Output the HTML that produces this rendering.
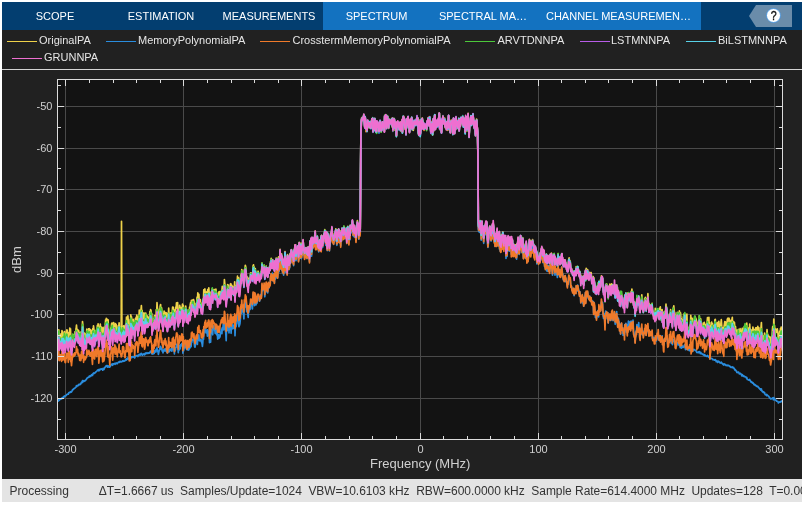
<!DOCTYPE html>
<html><head><meta charset="utf-8">
<style>
html,body{margin:0;padding:0;background:#fff;width:802px;height:505px;overflow:hidden;font-family:"Liberation Sans",sans-serif;}
#app{position:absolute;left:2px;top:2px;width:800px;height:500px;background:#212121;overflow:hidden;}
.abs{position:absolute;}
#tabs{position:absolute;left:0;top:0;width:800px;height:28px;background:#033E70;}
#tabs .lb{position:absolute;left:321px;top:0;width:378px;height:28px;background:#1372C0;}
.tab{position:absolute;top:0;height:28px;line-height:28px;color:#fff;font-size:11px;text-align:center;white-space:pre;}
#legend{position:absolute;left:0;top:28px;width:800px;height:39px;}
.li{position:absolute;height:1.7px;width:30px;margin-top:-0.4px}
.lt{position:absolute;color:#e6e6e6;font-size:11px;line-height:13px;white-space:pre;}
#sep{position:absolute;left:0;top:67px;width:800px;height:2px;background:#d4d4d4;}
.xl{position:absolute;top:442px;width:60px;text-align:center;color:#d0d0d0;font-size:11px;line-height:14px;}
.yl{position:absolute;left:0;width:52.5px;text-align:right;color:#d0d0d0;font-size:11px;line-height:14px;}
#status{position:absolute;left:0;top:477px;width:800px;height:23px;background:#e4e4e4;}
.st{position:absolute;top:5px;font-size:12px;line-height:15px;color:#333;white-space:pre;}
</style></head><body>
<div id="app" style="will-change:transform">
 <div id="tabs"><div class="lb"></div>
  <div class="tab" style="left:0;width:106px">SCOPE</div>
  <div class="tab" style="left:106px;width:106px">ESTIMATION</div>
  <div class="tab" style="left:213px;width:108px">MEASUREMENTS</div>
  <div class="tab" style="left:321px;width:107px">SPECTRUM</div>
  <div class="tab" style="left:428px;width:106px">SPECTRAL MA…</div>
  <div class="tab" style="left:534px;width:165px">CHANNEL MEASUREMEN…</div>
 </div>
</div>
<svg class="abs" style="left:0;top:0" width="802" height="505">
 <rect x="57" y="79" width="726" height="361" fill="#131313"/>
 <path d="M65.5 80V439M183.5 80V439M301.5 80V439M420.5 80V439M538.5 80V439M656.5 80V439M774.5 80V439M58 106.5H782M58 148.5H782M58 189.5H782M58 231.5H782M58 273.5H782M58 314.5H782M58 356.5H782M58 398.5H782" stroke="#4a4a4a" stroke-width="1" fill="none" shape-rendering="crispEdges"/>
 <clipPath id="pc"><rect x="58" y="80" width="724" height="359"/></clipPath>
 <g fill="none" stroke-width="1.7" stroke-linejoin="round" clip-path="url(#pc)">
 <path d="M57.0 342.4 57.3 338.7 57.7 335.9 58.1 342.0 58.4 335.5 58.8 329.9 59.1 338.8 59.5 339.8 59.8 339.3 60.2 336.6 60.5 334.0 60.9 337.1 61.2 338.4 61.6 340.7 62.0 330.6 62.3 331.7 62.7 336.0 63.0 341.9 63.4 333.9 63.7 337.9 64.1 333.7 64.4 331.5 64.8 337.3 65.1 339.6 65.5 338.3 65.9 333.3 66.2 332.5 66.6 330.8 66.9 329.8 67.3 331.1 67.6 335.6 68.0 337.9 68.3 342.3 68.7 335.9 69.0 332.6 69.4 334.9 69.8 328.1 70.1 332.4 70.5 328.8 70.8 340.8 71.2 337.6 71.5 346.0 71.9 338.8 72.2 341.0 72.6 336.1 73.0 337.3 73.3 336.6 73.7 336.6 74.0 334.7 74.4 334.9 74.7 333.4 75.1 331.6 75.4 332.8 75.8 331.0 76.1 329.0 76.5 325.2 76.9 331.3 77.2 331.5 77.6 329.7 77.9 331.0 78.3 335.7 78.6 330.5 79.0 333.5 79.3 334.8 79.7 336.2 80.0 335.9 80.4 332.4 80.8 340.1 81.1 336.5 81.5 331.8 81.8 332.6 82.2 337.8 82.5 321.5 82.9 325.7 83.2 328.1 83.6 342.2 83.9 332.6 84.3 338.2 84.7 333.5 85.0 339.2 85.4 337.3 85.7 334.7 86.1 335.1 86.4 335.5 86.8 329.2 87.1 332.1 87.5 331.0 87.8 331.7 88.2 332.1 88.6 328.9 88.9 330.0 89.3 328.7 89.6 329.7 90.0 335.1 90.3 329.7 90.7 334.4 91.0 331.4 91.4 332.9 91.7 330.3 92.1 337.4 92.5 339.2 92.8 328.5 93.2 331.8 93.5 325.9 93.9 329.0 94.2 332.9 94.6 336.8 94.9 332.0 95.3 333.9 95.7 330.6 96.0 331.1 96.4 333.8 96.7 333.6 97.1 329.5 97.4 325.3 97.8 327.9 98.1 323.8 98.5 329.2 98.8 339.8 99.2 336.3 99.6 328.8 99.9 327.9 100.3 324.0 100.6 329.9 101.0 330.3 101.3 327.2 101.7 330.8 102.0 331.3 102.4 334.6 102.7 339.2 103.1 327.3 103.5 334.6 103.8 338.5 104.2 335.6 104.5 332.0 104.9 327.3 105.2 325.9 105.6 319.8 105.9 327.2 106.3 318.3 106.6 319.4 107.0 319.1 107.4 328.2 107.7 329.8 108.1 319.9 108.4 326.4 108.8 335.7 109.1 332.7 109.5 336.2 109.8 339.0 110.2 334.2 110.5 330.0 110.9 328.4 111.3 326.9 111.6 323.7 112.0 323.0 112.3 323.0 112.7 339.2 113.0 329.4 113.4 328.5 113.7 322.6 114.1 327.9 114.4 330.1 114.8 324.8 115.2 332.8 115.5 323.5 115.9 326.0 116.2 324.7 116.6 332.8 116.9 330.0 117.3 334.3 117.6 327.9 118.0 330.3 118.3 325.7 118.7 326.9 119.1 322.8 119.4 329.4 119.8 328.6 120.1 327.2 120.5 326.9 120.8 330.2 121.2 334.0 121.5 221.3 121.9 330.2 122.3 328.8 122.6 327.5 123.0 332.0 123.3 327.3 123.7 325.8 124.0 333.7 124.4 333.5 124.7 330.4 125.1 328.7 125.4 325.5 125.8 324.3 126.2 325.3 126.5 317.1 126.9 324.1 127.2 325.5 127.6 323.4 127.9 315.9 128.3 321.7 128.6 319.6 129.0 328.8 129.3 333.9 129.7 330.1 130.1 334.8 130.4 325.3 130.8 314.9 131.1 317.3 131.5 316.8 131.8 322.8 132.2 321.6 132.5 321.7 132.9 322.2 133.2 319.3 133.6 322.5 134.0 324.6 134.3 322.2 134.7 331.3 135.0 325.6 135.4 318.7 135.7 321.9 136.1 317.4 136.4 319.5 136.8 315.2 137.1 317.0 137.5 318.6 137.9 327.3 138.2 322.1 138.6 316.5 138.9 318.8 139.3 310.1 139.6 314.0 140.0 311.8 140.3 314.8 140.7 313.8 141.0 309.7 141.4 305.7 141.8 316.8 142.1 310.3 142.5 319.8 142.8 313.7 143.2 313.5 143.5 314.2 143.9 312.9 144.2 319.5 144.6 323.4 145.0 321.3 145.3 315.8 145.7 313.0 146.0 314.9 146.4 317.9 146.7 319.9 147.1 315.9 147.4 322.2 147.8 320.8 148.1 321.8 148.5 317.4 148.9 320.0 149.2 318.5 149.6 315.9 149.9 311.6 150.3 312.2 150.6 309.7 151.0 310.2 151.3 316.0 151.7 313.4 152.0 322.9 152.4 320.4 152.8 319.4 153.1 321.2 153.5 320.9 153.8 319.5 154.2 319.9 154.5 315.5 154.9 315.5 155.2 319.9 155.6 321.3 155.9 321.0 156.3 309.7 156.7 314.5 157.0 302.7 157.4 308.5 157.7 312.9 158.1 314.9 158.4 320.0 158.8 316.5 159.1 317.5 159.5 309.0 159.8 311.2 160.2 306.3 160.6 304.5 160.9 310.0 161.3 310.9 161.6 307.9 162.0 314.8 162.3 315.9 162.7 315.4 163.0 325.6 163.4 315.7 163.7 315.6 164.1 311.1 164.5 316.2 164.8 317.2 165.2 312.7 165.5 319.1 165.9 312.5 166.2 314.0 166.6 318.1 166.9 313.4 167.3 323.0 167.6 319.4 168.0 315.4 168.4 314.4 168.7 308.2 169.1 319.2 169.4 315.5 169.8 319.0 170.1 317.3 170.5 313.0 170.8 315.0 171.2 316.2 171.6 312.7 171.9 317.0 172.3 311.8 172.6 307.2 173.0 308.7 173.3 307.3 173.7 312.5 174.0 313.4 174.4 322.6 174.7 310.2 175.1 312.5 175.5 311.0 175.8 307.0 176.2 308.1 176.5 302.8 176.9 303.7 177.2 305.9 177.6 302.5 177.9 311.9 178.3 318.4 178.6 317.4 179.0 316.7 179.4 312.9 179.7 305.3 180.1 315.1 180.4 307.2 180.8 309.0 181.1 313.1 181.5 309.2 181.8 307.3 182.2 308.8 182.5 304.0 182.9 318.6 183.3 305.3 183.6 314.6 184.0 313.0 184.3 310.9 184.7 310.6 185.0 312.2 185.4 311.1 185.7 306.1 186.1 312.8 186.4 314.6 186.8 314.4 187.2 315.5 187.5 310.4 187.9 310.4 188.2 316.7 188.6 310.7 188.9 315.1 189.3 312.0 189.6 307.1 190.0 308.7 190.3 304.3 190.7 302.3 191.1 309.0 191.4 300.4 191.8 304.4 192.1 302.2 192.5 300.0 192.8 301.5 193.2 300.2 193.5 299.6 193.9 300.8 194.2 303.5 194.6 306.4 195.0 308.8 195.3 307.0 195.7 307.2 196.0 303.6 196.4 303.9 196.7 302.2 197.1 297.0 197.4 305.5 197.8 292.9 198.2 296.8 198.5 298.9 198.9 294.3 199.2 301.7 199.6 299.4 199.9 301.7 200.3 299.6 200.6 301.7 201.0 303.6 201.3 305.1 201.7 304.2 202.1 305.2 202.4 309.2 202.8 305.4 203.1 299.4 203.5 299.3 203.8 289.9 204.2 292.0 204.5 289.6 204.9 288.9 205.2 294.4 205.6 291.8 206.0 298.1 206.3 297.5 206.7 295.0 207.0 291.6 207.4 297.8 207.7 289.7 208.1 292.7 208.4 291.8 208.8 287.8 209.1 292.0 209.5 304.7 209.9 298.1 210.2 293.3 210.6 304.1 210.9 296.2 211.3 291.5 211.6 294.9 212.0 294.4 212.3 288.7 212.7 299.0 213.0 292.4 213.4 291.7 213.8 293.0 214.1 289.7 214.5 290.9 214.8 289.7 215.2 292.5 215.5 293.0 215.9 289.0 216.2 291.7 216.6 294.2 216.9 294.6 217.3 295.3 217.7 299.8 218.0 294.8 218.4 294.7 218.7 292.2 219.1 294.8 219.4 291.6 219.8 295.6 220.1 295.9 220.5 293.0 220.9 294.2 221.2 291.0 221.6 291.0 221.9 290.5 222.3 286.3 222.6 288.6 223.0 288.6 223.3 290.0 223.7 292.5 224.0 288.0 224.4 279.5 224.8 283.9 225.1 287.9 225.5 293.8 225.8 295.6 226.2 300.3 226.5 296.1 226.9 294.2 227.2 294.2 227.6 284.7 227.9 290.2 228.3 285.0 228.7 290.6 229.0 294.1 229.4 288.3 229.7 294.2 230.1 288.1 230.4 283.9 230.8 283.7 231.1 295.1 231.5 284.9 231.8 286.6 232.2 289.2 232.6 286.4 232.9 287.5 233.3 287.3 233.6 289.7 234.0 290.4 234.3 287.8 234.7 281.8 235.0 296.8 235.4 287.5 235.7 287.8 236.1 290.8 236.5 286.1 236.8 284.4 237.2 281.8 237.5 276.2 237.9 281.7 238.2 284.5 238.6 277.8 238.9 290.6 239.3 290.5 239.6 290.3 240.0 288.0 240.4 283.4 240.7 276.2 241.1 274.4 241.4 274.7 241.8 269.5 242.1 273.2 242.5 274.6 242.8 276.1 243.2 277.9 243.5 280.0 243.9 285.0 244.3 269.8 244.6 271.6 245.0 269.1 245.3 265.3 245.7 266.8 246.0 268.8 246.4 276.2 246.7 281.1 247.1 281.1 247.5 277.2 247.8 282.4 248.2 285.1 248.5 278.8 248.9 279.9 249.2 278.2 249.6 278.3 249.9 278.2 250.3 279.4 250.6 272.9 251.0 275.3 251.4 275.7 251.7 273.1 252.1 273.5 252.4 276.9 252.8 273.1 253.1 265.8 253.5 264.9 253.8 268.5 254.2 267.1 254.5 277.7 254.9 269.1 255.3 268.6 255.6 274.1 256.0 279.1 256.3 275.1 256.7 272.8 257.0 278.3 257.4 272.0 257.7 272.6 258.1 271.2 258.4 272.6 258.8 273.9 259.2 276.7 259.5 277.4 259.9 275.1 260.2 277.0 260.6 275.2 260.9 272.0 261.3 275.3 261.6 272.2 262.0 263.2 262.3 267.8 262.7 269.3 263.1 266.1 263.4 268.1 263.8 267.2 264.1 265.0 264.5 269.1 264.8 276.4 265.2 272.9 265.5 272.7 265.9 267.9 266.2 266.0 266.6 270.3 267.0 273.7 267.3 269.4 267.7 276.1 268.0 271.2 268.4 268.2 268.7 269.1 269.1 273.0 269.4 266.8 269.8 265.9 270.2 268.7 270.5 261.6 270.9 262.1 271.2 258.3 271.6 262.3 271.9 264.0 272.3 259.9 272.6 259.7 273.0 267.0 273.3 266.2 273.7 264.7 274.1 261.9 274.4 269.3 274.8 262.3 275.1 266.4 275.5 264.2 275.8 264.7 276.2 258.0 276.5 265.7 276.9 261.2 277.2 259.5 277.6 266.8 278.0 261.3 278.3 257.7 278.7 256.8 279.0 260.4 279.4 258.9 279.7 258.7 280.1 249.3 280.4 258.5 280.8 255.6 281.1 254.4 281.5 253.8 281.9 261.1 282.2 257.6 282.6 263.6 282.9 259.9 283.3 263.1 283.6 266.3 284.0 260.7 284.3 261.5 284.7 258.0 285.0 251.6 285.4 264.8 285.8 259.6 286.1 262.3 286.5 258.4 286.8 260.8 287.2 267.5 287.5 254.6 287.9 255.7 288.2 257.5 288.6 259.4 288.9 264.4 289.3 256.2 289.7 261.7 290.0 253.7 290.4 258.4 290.7 253.9 291.1 250.8 291.4 250.3 291.8 254.1 292.1 252.3 292.5 256.9 292.8 255.1 293.2 256.1 293.6 259.8 293.9 249.7 294.3 255.2 294.6 249.3 295.0 244.9 295.3 245.5 295.7 247.5 296.0 255.8 296.4 253.9 296.8 252.1 297.1 249.1 297.5 250.4 297.8 246.1 298.2 248.7 298.5 255.3 298.9 250.6 299.2 242.6 299.6 247.6 299.9 246.0 300.3 252.1 300.7 248.4 301.0 243.2 301.4 253.5 301.7 251.2 302.1 243.8 302.4 249.2 302.8 247.5 303.1 240.1 303.5 246.3 303.8 247.4 304.2 249.4 304.6 252.2 304.9 252.0 305.3 248.8 305.6 250.4 306.0 248.0 306.3 249.8 306.7 249.0 307.0 253.3 307.4 250.5 307.7 251.4 308.1 246.9 308.5 247.7 308.8 249.3 309.2 252.0 309.5 255.8 309.9 241.1 310.2 248.0 310.6 250.0 310.9 240.4 311.3 241.2 311.6 250.9 312.0 239.5 312.4 238.9 312.7 243.7 313.1 238.2 313.4 241.1 313.8 240.4 314.1 241.9 314.5 238.1 314.8 234.9 315.2 231.2 315.5 241.9 315.9 239.8 316.3 242.0 316.6 239.9 317.0 241.8 317.3 236.4 317.7 244.4 318.0 242.3 318.4 245.9 318.7 247.2 319.1 244.7 319.4 241.0 319.8 240.0 320.2 245.3 320.5 246.2 320.9 236.0 321.2 246.5 321.6 235.3 321.9 236.6 322.3 237.7 322.6 242.6 323.0 239.0 323.4 237.8 323.7 235.9 324.1 234.0 324.4 233.7 324.8 229.7 325.1 233.7 325.5 237.1 325.8 240.1 326.2 231.9 326.5 232.1 326.9 242.9 327.3 245.9 327.6 234.2 328.0 234.6 328.3 235.6 328.7 239.9 329.0 240.2 329.4 245.8 329.7 242.0 330.1 238.9 330.4 235.9 330.8 233.4 331.2 232.5 331.5 232.3 331.9 227.8 332.2 236.1 332.6 235.7 332.9 236.3 333.3 237.2 333.6 240.2 334.0 236.6 334.3 233.1 334.7 235.4 335.1 232.5 335.4 231.6 335.8 228.8 336.1 233.2 336.5 234.9 336.8 240.3 337.2 237.5 337.5 229.8 337.9 235.3 338.2 231.9 338.6 229.4 339.0 231.6 339.3 238.0 339.7 236.2 340.0 233.4 340.4 231.2 340.7 240.6 341.1 231.4 341.4 233.4 341.8 234.3 342.1 228.1 342.5 229.3 342.9 230.0 343.2 230.1 343.6 234.2 343.9 226.4 344.3 232.0 344.6 229.2 345.0 232.9 345.3 230.7 345.7 232.5 346.1 233.5 346.4 228.0 346.8 238.1 347.1 231.3 347.5 227.6 347.8 226.4 348.2 231.1 348.5 230.5 348.9 237.3 349.2 231.6 349.6 233.2 350.0 234.6 350.3 225.3 350.7 227.5 351.0 227.4 351.4 225.8 351.7 226.1 352.1 225.4 352.4 221.0 352.8 224.7 353.1 231.1 353.5 227.2 353.9 225.7 354.2 231.2 354.6 227.3 354.9 228.2 355.3 230.8 355.6 230.5 356.0 236.4 356.3 233.7 356.7 224.8 357.0 224.9 357.4 220.7 357.8 224.6 358.1 226.5 358.5 227.2 358.8 234.2 359.2 224.1 359.5 230.0 359.9 230.0 360.2 228.8 360.6 176.2 360.9 136.3 361.3 121.3 361.7 117.6 362.0 118.8 362.4 119.1 362.7 118.4 363.1 117.9 363.4 118.5 363.8 115.7 364.1 118.9 364.5 123.8 364.8 127.7 365.2 117.8 365.6 121.6 365.9 128.5 366.3 124.1 366.6 124.1 367.0 131.2 367.3 126.7 367.7 120.8 368.0 122.6 368.4 125.7 368.7 127.6 369.1 124.0 369.5 123.0 369.8 127.3 370.2 125.8 370.5 127.3 370.9 128.2 371.2 122.7 371.6 120.7 371.9 120.9 372.3 123.4 372.7 118.8 373.0 131.5 373.4 122.4 373.7 127.6 374.1 121.2 374.4 129.7 374.8 118.5 375.1 124.6 375.5 122.5 375.8 130.7 376.2 123.3 376.6 130.4 376.9 122.1 377.3 127.1 377.6 122.8 378.0 126.4 378.3 126.6 378.7 126.0 379.0 130.7 379.4 124.3 379.7 123.0 380.1 122.2 380.5 122.2 380.8 129.1 381.2 131.8 381.5 129.2 381.9 128.9 382.2 126.4 382.6 122.8 382.9 122.1 383.3 127.6 383.6 126.3 384.0 122.4 384.4 131.4 384.7 116.6 385.1 124.6 385.4 124.3 385.8 115.3 386.1 122.3 386.5 128.0 386.8 122.3 387.2 120.3 387.5 117.1 387.9 122.3 388.3 121.0 388.6 128.3 389.0 120.0 389.3 120.5 389.7 119.5 390.0 122.4 390.4 124.1 390.7 123.4 391.1 121.0 391.4 121.2 391.8 118.5 392.2 125.6 392.5 118.0 392.9 130.3 393.2 123.4 393.6 122.1 393.9 119.3 394.3 119.0 394.6 121.3 395.0 130.2 395.4 122.9 395.7 123.5 396.1 122.5 396.4 136.0 396.8 123.1 397.1 122.3 397.5 124.9 397.8 122.2 398.2 128.3 398.5 124.2 398.9 126.8 399.3 130.0 399.6 122.7 400.0 124.2 400.3 121.9 400.7 130.1 401.0 128.9 401.4 126.4 401.7 126.7 402.1 121.1 402.4 132.3 402.8 120.5 403.2 117.8 403.5 123.5 403.9 119.1 404.2 121.8 404.6 124.4 404.9 128.0 405.3 127.6 405.6 126.3 406.0 134.7 406.3 120.1 406.7 126.6 407.1 123.8 407.4 120.8 407.8 118.9 408.1 116.9 408.5 127.9 408.8 123.2 409.2 123.3 409.5 131.6 409.9 121.3 410.2 119.4 410.6 128.6 411.0 121.6 411.3 126.1 411.7 117.4 412.0 121.2 412.4 129.8 412.7 123.0 413.1 125.4 413.4 130.3 413.8 122.3 414.1 122.9 414.5 121.4 414.9 124.6 415.2 123.5 415.6 125.2 415.9 121.4 416.3 120.9 416.6 120.1 417.0 116.4 417.3 125.3 417.7 119.0 418.0 123.8 418.4 133.2 418.8 133.9 419.1 131.9 419.5 120.8 419.8 120.1 420.2 134.4 420.5 131.4 420.9 121.4 421.2 120.3 421.6 128.0 422.0 126.5 422.3 119.5 422.7 128.1 423.0 120.9 423.4 127.7 423.7 123.8 424.1 128.6 424.4 124.1 424.8 127.7 425.1 126.7 425.5 127.2 425.9 124.5 426.2 124.6 426.6 128.9 426.9 123.8 427.3 122.7 427.6 122.9 428.0 118.8 428.3 123.3 428.7 118.3 429.0 125.5 429.4 123.8 429.8 117.2 430.1 122.3 430.5 126.3 430.8 130.5 431.2 126.9 431.5 124.7 431.9 121.9 432.2 128.0 432.6 135.0 432.9 130.3 433.3 119.4 433.7 130.2 434.0 122.1 434.4 119.5 434.7 115.0 435.1 115.5 435.4 128.3 435.8 123.4 436.1 127.0 436.5 121.9 436.8 121.8 437.2 125.6 437.6 122.2 437.9 126.7 438.3 119.8 438.6 124.3 439.0 116.0 439.3 113.0 439.7 129.6 440.0 121.3 440.4 120.2 440.7 119.2 441.1 122.8 441.5 131.3 441.8 125.9 442.2 121.1 442.5 121.2 442.9 116.2 443.2 122.8 443.6 123.0 443.9 121.1 444.3 124.2 444.6 118.1 445.0 127.6 445.4 122.2 445.7 123.0 446.1 123.2 446.4 128.5 446.8 122.1 447.1 122.9 447.5 124.9 447.8 130.3 448.2 123.8 448.6 116.8 448.9 128.0 449.3 125.1 449.6 129.6 450.0 121.8 450.3 132.6 450.7 122.6 451.0 122.9 451.4 120.3 451.7 123.7 452.1 125.9 452.5 121.7 452.8 134.4 453.2 126.9 453.5 119.2 453.9 122.4 454.2 119.3 454.6 132.6 454.9 128.1 455.3 125.0 455.6 128.3 456.0 116.8 456.4 125.1 456.7 124.2 457.1 121.1 457.4 122.6 457.8 124.8 458.1 128.6 458.5 124.6 458.8 118.9 459.2 131.1 459.5 124.8 459.9 120.2 460.3 125.7 460.6 121.4 461.0 118.7 461.3 118.7 461.7 122.0 462.0 119.2 462.4 124.8 462.7 118.6 463.1 119.7 463.4 126.5 463.8 120.4 464.2 121.0 464.5 118.7 464.9 121.3 465.2 132.3 465.6 117.3 465.9 128.2 466.3 123.1 466.6 124.9 467.0 129.8 467.3 117.2 467.7 123.3 468.1 113.3 468.4 121.7 468.8 122.6 469.1 135.4 469.5 126.3 469.8 124.0 470.2 122.4 470.5 120.9 470.9 116.4 471.3 124.2 471.6 122.9 472.0 117.2 472.3 124.5 472.7 120.3 473.0 113.9 473.4 120.6 473.7 124.4 474.1 127.7 474.4 125.4 474.8 122.0 475.2 124.8 475.5 134.0 475.9 121.8 476.2 133.7 476.6 119.0 476.9 123.6 477.3 128.1 477.6 131.1 478.0 161.4 478.3 223.4 478.7 226.3 479.1 224.2 479.4 227.8 479.8 223.3 480.1 220.7 480.5 224.5 480.8 223.6 481.2 235.0 481.5 229.5 481.9 221.4 482.2 228.5 482.6 228.0 483.0 229.0 483.3 230.4 483.7 237.6 484.0 228.1 484.4 225.5 484.7 225.5 485.1 228.8 485.4 225.3 485.8 221.8 486.1 223.1 486.5 221.5 486.9 223.5 487.2 228.8 487.6 237.3 487.9 241.8 488.3 238.4 488.6 232.3 489.0 231.5 489.3 228.9 489.7 226.0 490.0 226.3 490.4 229.3 490.8 233.3 491.1 234.5 491.5 232.8 491.8 231.1 492.2 227.6 492.5 224.4 492.9 232.6 493.2 223.3 493.6 227.4 493.9 233.1 494.3 236.8 494.7 233.5 495.0 241.2 495.4 236.2 495.7 233.9 496.1 237.5 496.4 237.5 496.8 234.2 497.1 230.0 497.5 236.7 497.9 238.9 498.2 239.3 498.6 236.4 498.9 235.6 499.3 231.5 499.6 243.9 500.0 235.2 500.3 244.8 500.7 244.0 501.0 243.5 501.4 234.9 501.8 237.0 502.1 238.9 502.5 235.2 502.8 231.9 503.2 239.4 503.5 241.5 503.9 241.6 504.2 237.1 504.6 236.6 504.9 242.4 505.3 240.1 505.7 237.3 506.0 251.7 506.4 240.9 506.7 241.9 507.1 250.5 507.4 241.3 507.8 236.9 508.1 237.4 508.5 236.9 508.8 243.0 509.2 245.5 509.6 238.1 509.9 243.8 510.3 243.7 510.6 241.9 511.0 237.7 511.3 247.7 511.7 239.6 512.0 242.3 512.4 240.2 512.7 248.0 513.1 249.4 513.5 244.0 513.8 247.6 514.2 248.6 514.5 245.5 514.9 246.3 515.2 250.1 515.6 244.9 515.9 249.5 516.3 249.7 516.6 251.8 517.0 243.9 517.4 246.8 517.7 242.8 518.1 237.9 518.4 243.4 518.8 241.1 519.1 247.7 519.5 246.7 519.8 243.8 520.2 240.7 520.6 236.4 520.9 241.1 521.3 238.4 521.6 238.8 522.0 245.1 522.3 241.9 522.7 237.7 523.0 243.9 523.4 251.4 523.7 250.9 524.1 250.5 524.5 248.6 524.8 246.8 525.2 244.0 525.5 246.0 525.9 250.8 526.2 243.0 526.6 247.1 526.9 255.3 527.3 252.6 527.6 255.3 528.0 254.2 528.4 250.2 528.7 249.9 529.1 247.5 529.4 239.3 529.8 242.2 530.1 247.4 530.5 247.6 530.8 249.2 531.2 240.7 531.5 241.1 531.9 243.2 532.3 244.2 532.6 239.7 533.0 245.0 533.3 243.6 533.7 244.5 534.0 250.8 534.4 246.1 534.7 250.9 535.1 247.5 535.4 247.5 535.8 249.1 536.2 250.1 536.5 252.6 536.9 257.8 537.2 252.4 537.6 256.9 537.9 256.8 538.3 255.9 538.6 257.6 539.0 255.7 539.3 257.2 539.7 256.4 540.1 256.6 540.4 252.3 540.8 253.5 541.1 251.9 541.5 251.0 541.8 247.3 542.2 249.7 542.5 248.4 542.9 254.8 543.2 250.7 543.6 250.5 544.0 251.3 544.3 253.2 544.7 258.3 545.0 256.3 545.4 260.9 545.7 257.6 546.1 259.4 546.4 254.1 546.8 262.0 547.2 263.2 547.5 259.1 547.9 257.7 548.2 257.0 548.6 261.3 548.9 255.9 549.3 258.3 549.6 261.8 550.0 258.2 550.3 254.0 550.7 257.3 551.1 258.0 551.4 253.1 551.8 255.9 552.1 260.3 552.5 264.0 552.8 256.5 553.2 255.7 553.5 256.9 553.9 254.5 554.2 253.7 554.6 259.2 555.0 264.0 555.3 257.5 555.7 261.0 556.0 259.0 556.4 260.7 556.7 260.1 557.1 262.4 557.4 264.3 557.8 259.9 558.1 253.7 558.5 259.7 558.9 261.8 559.2 259.8 559.6 257.3 559.9 263.2 560.3 257.6 560.6 262.9 561.0 261.1 561.3 258.9 561.7 254.1 562.0 254.7 562.4 259.3 562.8 259.8 563.1 263.7 563.5 265.1 563.8 262.3 564.2 266.1 564.5 260.5 564.9 262.3 565.2 259.9 565.6 265.0 565.9 262.7 566.3 267.0 566.7 266.0 567.0 269.3 567.4 270.5 567.7 267.4 568.1 267.9 568.4 264.1 568.8 258.8 569.1 257.9 569.5 260.7 569.8 261.9 570.2 261.1 570.6 267.5 570.9 269.5 571.3 268.4 571.6 269.0 572.0 271.8 572.3 271.2 572.7 273.2 573.0 271.1 573.4 272.4 573.8 272.0 574.1 277.6 574.5 271.1 574.8 274.5 575.2 273.4 575.5 273.0 575.9 274.1 576.2 266.6 576.6 271.2 576.9 268.0 577.3 271.1 577.7 266.5 578.0 267.0 578.4 270.1 578.7 271.1 579.1 271.6 579.4 275.3 579.8 271.4 580.1 275.0 580.5 274.3 580.8 282.2 581.2 276.4 581.6 279.0 581.9 279.6 582.3 276.5 582.6 277.3 583.0 283.7 583.3 276.0 583.7 283.9 584.0 281.9 584.4 281.3 584.7 274.7 585.1 273.4 585.5 270.4 585.8 278.1 586.2 268.3 586.5 270.8 586.9 272.5 587.2 271.8 587.6 269.5 587.9 273.6 588.3 276.0 588.6 273.7 589.0 276.1 589.4 276.8 589.7 272.3 590.1 275.5 590.4 273.4 590.8 273.6 591.1 272.6 591.5 276.0 591.8 279.6 592.2 279.1 592.5 277.5 592.9 281.0 593.3 276.7 593.6 289.7 594.0 277.8 594.3 280.8 594.7 282.8 595.0 286.3 595.4 290.5 595.7 286.4 596.1 287.8 596.5 292.2 596.8 287.9 597.2 288.7 597.5 286.1 597.9 284.7 598.2 286.8 598.6 291.2 598.9 281.8 599.3 284.7 599.6 287.5 600.0 283.7 600.4 279.9 600.7 284.6 601.1 279.0 601.4 275.9 601.8 276.9 602.1 281.1 602.5 278.6 602.8 284.1 603.2 288.7 603.5 291.7 603.9 289.5 604.3 287.9 604.6 291.4 605.0 298.4 605.3 290.0 605.7 286.6 606.0 285.8 606.4 284.7 606.7 284.0 607.1 285.2 607.4 290.0 607.8 286.4 608.2 297.4 608.5 294.0 608.9 291.3 609.2 286.9 609.6 286.8 609.9 284.0 610.3 288.3 610.6 288.8 611.0 290.1 611.3 289.2 611.7 283.8 612.1 287.3 612.4 284.5 612.8 287.2 613.1 291.8 613.5 287.6 613.8 288.4 614.2 289.7 614.5 285.3 614.9 287.8 615.2 294.9 615.6 286.4 616.0 284.8 616.3 292.0 616.7 285.9 617.0 293.9 617.4 287.5 617.7 297.2 618.1 291.2 618.4 290.9 618.8 292.5 619.1 292.7 619.5 300.9 619.9 298.6 620.2 295.3 620.6 304.9 620.9 294.8 621.3 295.9 621.6 294.1 622.0 301.2 622.3 299.8 622.7 297.8 623.1 303.7 623.4 303.4 623.8 307.6 624.1 303.9 624.5 307.5 624.8 295.1 625.2 302.6 625.5 298.4 625.9 293.1 626.2 299.9 626.6 295.1 627.0 300.3 627.3 304.1 627.7 293.2 628.0 295.0 628.4 293.4 628.7 294.2 629.1 294.9 629.4 297.2 629.8 297.2 630.1 298.0 630.5 302.1 630.9 302.5 631.2 291.3 631.6 293.1 631.9 289.0 632.3 295.3 632.6 297.6 633.0 292.5 633.3 302.0 633.7 306.0 634.0 305.7 634.4 307.5 634.8 307.5 635.1 314.0 635.5 310.9 635.8 303.6 636.2 302.1 636.5 306.4 636.9 297.7 637.2 298.4 637.6 298.6 637.9 300.0 638.3 302.7 638.7 296.1 639.0 301.0 639.4 299.1 639.7 305.9 640.1 310.8 640.4 302.2 640.8 300.8 641.1 302.1 641.5 299.3 641.8 294.9 642.2 304.4 642.6 302.3 642.9 302.4 643.3 308.8 643.6 308.8 644.0 304.3 644.3 302.0 644.7 298.3 645.0 302.6 645.4 297.3 645.8 299.6 646.1 306.1 646.5 304.8 646.8 302.9 647.2 298.8 647.5 299.8 647.9 293.7 648.2 300.2 648.6 303.3 648.9 310.7 649.3 303.9 649.7 308.7 650.0 307.7 650.4 305.2 650.7 312.1 651.1 307.0 651.4 308.9 651.8 310.8 652.1 303.4 652.5 310.9 652.8 312.6 653.2 311.4 653.6 315.9 653.9 313.2 654.3 317.1 654.6 316.3 655.0 317.5 655.3 308.3 655.7 311.4 656.0 313.4 656.4 314.9 656.7 311.9 657.1 311.4 657.5 312.1 657.8 311.1 658.2 308.9 658.5 309.7 658.9 315.1 659.2 314.1 659.6 311.8 659.9 308.1 660.3 306.9 660.6 315.2 661.0 312.6 661.4 312.0 661.7 310.9 662.1 309.6 662.4 316.8 662.8 312.1 663.1 316.0 663.5 322.0 663.8 321.4 664.2 312.7 664.5 311.6 664.9 314.3 665.3 314.0 665.6 310.9 666.0 304.2 666.3 312.8 666.7 307.2 667.0 311.6 667.4 316.0 667.7 321.8 668.1 317.3 668.4 321.1 668.8 320.2 669.2 318.3 669.5 314.1 669.9 319.1 670.2 315.6 670.6 309.7 670.9 317.9 671.3 320.9 671.6 316.1 672.0 314.8 672.4 321.6 672.7 311.7 673.1 309.5 673.4 307.8 673.8 305.8 674.1 310.6 674.5 312.0 674.8 312.9 675.2 319.6 675.5 319.2 675.9 324.0 676.3 316.6 676.6 321.0 677.0 317.7 677.3 312.4 677.7 315.8 678.0 314.5 678.4 316.2 678.7 321.5 679.1 313.6 679.4 310.8 679.8 312.8 680.2 321.4 680.5 312.8 680.9 317.4 681.2 318.7 681.6 325.0 681.9 319.7 682.3 321.7 682.6 319.9 683.0 321.0 683.3 317.5 683.7 315.4 684.1 313.9 684.4 314.5 684.8 313.9 685.1 315.6 685.5 326.5 685.8 318.3 686.2 320.4 686.5 317.8 686.9 314.0 687.2 324.7 687.6 329.4 688.0 328.2 688.3 328.6 688.7 329.2 689.0 327.8 689.4 329.2 689.7 327.7 690.1 324.9 690.4 325.8 690.8 315.4 691.1 328.5 691.5 317.8 691.9 320.7 692.2 318.3 692.6 329.5 692.9 323.2 693.3 322.6 693.6 320.5 694.0 322.3 694.3 322.2 694.7 318.2 695.0 316.3 695.4 320.0 695.8 318.1 696.1 319.2 696.5 320.7 696.8 326.5 697.2 322.5 697.5 325.6 697.9 330.4 698.2 327.3 698.6 321.4 699.0 325.8 699.3 315.8 699.7 321.4 700.0 320.1 700.4 327.9 700.7 318.8 701.1 324.9 701.4 326.6 701.8 327.3 702.1 325.8 702.5 328.2 702.9 328.3 703.2 323.2 703.6 323.4 703.9 326.6 704.3 322.4 704.6 329.3 705.0 324.0 705.3 326.1 705.7 325.8 706.0 328.1 706.4 327.3 706.8 323.8 707.1 322.4 707.5 317.6 707.8 320.8 708.2 320.4 708.5 323.7 708.9 317.3 709.2 326.8 709.6 322.7 709.9 338.1 710.3 333.3 710.7 330.5 711.0 325.4 711.4 328.4 711.7 322.0 712.1 325.1 712.4 323.6 712.8 326.3 713.1 329.6 713.5 327.5 713.8 327.2 714.2 325.7 714.6 325.3 714.9 319.8 715.3 319.4 715.6 326.5 716.0 323.4 716.3 333.8 716.7 326.6 717.0 326.2 717.4 322.6 717.7 334.6 718.1 326.8 718.5 322.6 718.8 321.4 719.2 324.3 719.5 330.3 719.9 328.2 720.2 331.1 720.6 327.6 720.9 323.3 721.3 319.7 721.7 325.6 722.0 329.9 722.4 334.1 722.7 333.0 723.1 336.5 723.4 327.6 723.8 334.5 724.1 326.4 724.5 323.8 724.8 321.7 725.2 322.2 725.6 321.9 725.9 327.2 726.3 325.9 726.6 325.9 727.0 325.8 727.3 319.2 727.7 318.8 728.0 318.1 728.4 321.0 728.7 319.9 729.1 318.4 729.5 325.6 729.8 322.2 730.2 320.3 730.5 324.7 730.9 325.7 731.2 324.9 731.6 325.0 731.9 319.7 732.3 317.4 732.6 323.9 733.0 324.4 733.4 321.6 733.7 322.5 734.1 327.5 734.4 322.4 734.8 327.4 735.1 331.4 735.5 326.5 735.8 330.8 736.2 335.0 736.5 330.2 736.9 340.0 737.3 334.1 737.6 333.2 738.0 329.9 738.3 329.5 738.7 330.7 739.0 334.3 739.4 334.7 739.7 334.8 740.1 328.7 740.4 330.2 740.8 330.1 741.2 332.7 741.5 338.7 741.9 339.4 742.2 328.3 742.6 331.3 742.9 328.3 743.3 330.2 743.6 328.9 744.0 332.5 744.3 326.7 744.7 329.9 745.1 325.1 745.4 327.4 745.8 325.1 746.1 326.2 746.5 331.0 746.8 323.2 747.2 334.3 747.5 330.6 747.9 329.2 748.3 328.1 748.6 332.9 749.0 332.6 749.3 331.5 749.7 324.2 750.0 330.1 750.4 329.3 750.7 331.4 751.1 336.1 751.4 330.2 751.8 331.5 752.2 336.4 752.5 335.2 752.9 327.0 753.2 329.2 753.6 331.0 753.9 340.0 754.3 330.0 754.6 329.7 755.0 332.1 755.3 333.9 755.7 327.8 756.1 331.2 756.4 327.8 756.8 333.7 757.1 332.0 757.5 329.1 757.8 326.4 758.2 330.1 758.5 329.0 758.9 327.8 759.2 333.7 759.6 334.4 760.0 332.7 760.3 331.3 760.7 336.0 761.0 327.9 761.4 322.6 761.7 333.1 762.1 333.7 762.4 341.5 762.8 340.5 763.1 338.7 763.5 341.5 763.9 335.5 764.2 337.5 764.6 333.1 764.9 337.0 765.3 345.3 765.6 337.0 766.0 342.3 766.3 337.2 766.7 335.2 767.0 329.7 767.4 334.2 767.8 334.5 768.1 335.9 768.5 336.5 768.8 336.6 769.2 336.4 769.5 342.3 769.9 338.2 770.2 337.1 770.6 342.8 771.0 343.8 771.3 340.5 771.7 340.5 772.0 337.0 772.4 330.1 772.7 326.6 773.1 329.0 773.4 338.1 773.8 319.0 774.1 326.8 774.5 325.6 774.9 330.1 775.2 335.3 775.6 329.1 775.9 332.7 776.3 329.6 776.6 332.2 777.0 331.2 777.3 328.8 777.7 331.7 778.0 333.6 778.4 342.8 778.8 338.0 779.1 337.2 779.5 335.3 779.8 331.0 780.2 334.1 780.5 328.5 780.9 328.6 781.2 327.0 781.6 328.3 781.9 331.5 782.3 339.1 782.7 341.8 783.0 330.9" stroke="#EFD24A"/>
<path d="M57.0 402.0 57.3 401.7 57.7 400.8 58.1 401.0 58.4 400.2 58.8 399.5 59.1 400.4 59.5 400.3 59.8 399.4 60.2 399.2 60.5 399.2 60.9 398.7 61.2 398.8 61.6 398.9 62.0 398.0 62.3 397.6 62.7 398.2 63.0 398.0 63.4 397.0 63.7 397.3 64.1 396.3 64.4 395.9 64.8 396.6 65.1 396.4 65.5 396.1 65.9 395.7 66.2 395.4 66.6 394.7 66.9 394.5 67.3 394.5 67.6 394.0 68.0 394.1 68.3 394.2 68.7 392.9 69.0 392.6 69.4 392.7 69.8 392.4 70.1 392.2 70.5 391.6 70.8 392.3 71.2 392.0 71.5 392.0 71.9 391.1 72.2 390.7 72.6 389.5 73.0 389.7 73.3 389.2 73.7 388.7 74.0 388.7 74.4 388.6 74.7 388.2 75.1 387.9 75.4 387.5 75.8 387.2 76.1 386.6 76.5 385.7 76.9 386.5 77.2 385.8 77.6 385.5 77.9 385.5 78.3 385.6 78.6 384.5 79.0 384.4 79.3 384.6 79.7 384.8 80.0 384.7 80.4 383.7 80.8 384.0 81.1 383.3 81.5 382.2 81.8 382.2 82.2 382.7 82.5 380.6 82.9 380.7 83.2 380.7 83.6 381.7 83.9 380.9 84.3 381.1 84.7 380.6 85.0 380.7 85.4 380.7 85.7 380.0 86.1 379.7 86.4 379.4 86.8 378.4 87.1 378.2 87.5 377.7 87.8 377.7 88.2 377.7 88.6 377.0 88.9 377.1 89.3 376.0 89.6 376.1 90.0 376.5 90.3 375.7 90.7 376.3 91.0 375.8 91.4 375.4 91.7 374.7 92.1 375.4 92.5 375.5 92.8 373.9 93.2 373.9 93.5 373.1 93.9 372.9 94.2 373.3 94.6 373.4 94.9 372.9 95.3 372.6 95.7 371.8 96.0 371.9 96.4 371.6 96.7 371.2 97.1 370.7 97.4 370.2 97.8 370.1 98.1 369.6 98.5 369.6 98.8 370.9 99.2 370.5 99.6 369.6 99.9 369.3 100.3 369.1 100.6 369.5 101.0 369.1 101.3 369.0 101.7 368.9 102.0 369.0 102.4 369.3 102.7 370.1 103.1 368.4 103.5 369.2 103.8 369.6 104.2 369.0 104.5 368.0 104.9 367.4 105.2 367.2 105.6 366.4 105.9 366.6 106.3 365.8 106.6 365.6 107.0 365.5 107.4 366.8 107.7 367.2 108.1 365.7 108.4 366.1 108.8 366.8 109.1 366.6 109.5 367.1 109.8 367.1 110.2 366.5 110.5 365.9 110.9 365.2 111.3 364.6 111.6 364.2 112.0 364.3 112.3 364.0 112.7 365.3 113.0 364.4 113.4 363.8 113.7 363.8 114.1 364.0 114.4 363.8 114.8 363.4 115.2 364.3 115.5 363.4 115.9 363.3 116.2 362.9 116.6 363.6 116.9 363.4 117.3 363.6 117.6 362.9 118.0 362.6 118.3 362.3 118.7 362.2 119.1 361.6 119.4 362.4 119.8 361.7 120.1 361.3 120.5 361.6 120.8 361.9 121.2 362.0 121.5 361.8 121.9 361.4 122.3 361.1 122.6 360.9 123.0 361.3 123.3 360.7 123.7 361.2 124.0 361.2 124.4 360.9 124.7 361.0 125.1 360.6 125.4 360.0 125.8 359.7 126.2 360.1 126.5 358.5 126.9 359.0 127.2 359.4 127.6 358.7 127.9 357.9 128.3 358.5 128.6 358.3 129.0 359.1 129.3 359.7 129.7 359.1 130.1 359.7 130.4 358.5 130.8 357.2 131.1 357.2 131.5 356.9 131.8 357.5 132.2 356.7 132.5 356.9 132.9 356.8 133.2 356.5 133.6 356.9 134.0 357.2 134.3 356.8 134.7 358.0 135.0 357.0 135.4 356.2 135.7 356.4 136.1 355.8 136.4 355.7 136.8 355.5 137.1 355.6 137.5 355.5 137.9 356.5 138.2 355.7 138.6 355.0 138.9 355.3 139.3 354.3 139.6 354.6 140.0 354.6 140.3 355.0 140.7 354.7 141.0 353.6 141.4 353.4 141.8 354.7 142.1 354.2 142.5 355.1 142.8 354.3 143.2 354.4 143.5 354.0 143.9 353.9 144.2 354.0 144.6 354.8 145.0 354.6 145.3 353.3 145.7 353.0 146.0 353.0 146.4 353.0 146.7 353.5 147.1 352.7 147.4 353.4 147.8 353.2 148.1 353.4 148.5 353.0 148.9 352.8 149.2 353.2 149.6 352.8 149.9 352.0 150.3 352.0 150.6 351.1 151.0 351.1 151.3 352.8 151.7 352.4 152.0 354.0 152.4 353.4 152.8 354.1 153.1 353.8 153.5 353.5 153.8 353.1 154.2 353.3 154.5 351.6 154.9 350.4 155.2 351.5 155.6 351.6 155.9 352.0 156.3 349.1 156.7 350.2 157.0 347.9 157.4 350.1 157.7 351.1 158.1 352.1 158.4 354.4 158.8 352.3 159.1 351.0 159.5 349.7 159.8 348.5 160.2 346.8 160.6 346.4 160.9 347.5 161.3 349.6 161.6 348.3 162.0 349.2 162.3 351.4 162.7 350.5 163.0 352.8 163.4 350.9 163.7 350.3 164.1 349.3 164.5 350.9 164.8 350.8 165.2 348.9 165.5 350.8 165.9 349.1 166.2 349.9 166.6 351.8 166.9 350.2 167.3 353.1 167.6 352.6 168.0 350.6 168.4 350.3 168.7 347.9 169.1 351.8 169.4 349.8 169.8 350.1 170.1 350.4 170.5 349.2 170.8 349.5 171.2 350.8 171.6 348.3 171.9 351.2 172.3 348.5 172.6 347.2 173.0 347.2 173.3 346.5 173.7 349.8 174.0 349.7 174.4 353.9 174.7 349.7 175.1 350.9 175.5 349.8 175.8 347.5 176.2 347.5 176.5 344.3 176.9 344.2 177.2 344.9 177.6 345.7 177.9 348.0 178.3 352.6 178.6 348.4 179.0 350.3 179.4 349.2 179.7 345.4 180.1 349.0 180.4 345.2 180.8 344.6 181.1 345.9 181.5 344.8 181.8 343.6 182.2 345.3 182.5 345.0 182.9 353.3 183.3 344.3 183.6 350.9 184.0 348.5 184.3 347.9 184.7 347.9 185.0 347.4 185.4 344.8 185.7 344.1 186.1 346.7 186.4 348.9 186.8 349.5 187.2 349.7 187.5 344.8 187.9 344.1 188.2 350.2 188.6 346.8 188.9 349.7 189.3 347.9 189.6 346.7 190.0 348.0 190.3 345.3 190.7 343.9 191.1 346.7 191.4 341.9 191.8 342.5 192.1 340.0 192.5 339.6 192.8 339.2 193.2 340.2 193.5 339.0 193.9 340.5 194.2 342.5 194.6 346.3 195.0 347.2 195.3 345.5 195.7 343.1 196.0 342.4 196.4 339.5 196.7 341.5 197.1 336.9 197.4 344.5 197.8 335.3 198.2 339.4 198.5 337.6 198.9 334.8 199.2 340.6 199.6 339.9 199.9 340.8 200.3 339.4 200.6 340.4 201.0 339.3 201.3 341.8 201.7 342.1 202.1 344.0 202.4 346.5 202.8 342.6 203.1 336.2 203.5 339.4 203.8 333.7 204.2 332.4 204.5 330.8 204.9 325.8 205.2 331.6 205.6 330.0 206.0 332.9 206.3 332.3 206.7 330.9 207.0 329.9 207.4 336.1 207.7 329.9 208.1 335.1 208.4 332.0 208.8 331.3 209.1 332.1 209.5 342.6 209.9 338.7 210.2 336.5 210.6 342.2 210.9 332.7 211.3 329.6 211.6 332.1 212.0 332.8 212.3 326.0 212.7 334.8 213.0 327.2 213.4 327.3 213.8 325.9 214.1 328.9 214.5 330.0 214.8 329.9 215.2 333.3 215.5 331.7 215.9 326.2 216.2 329.2 216.6 334.8 216.9 330.8 217.3 333.2 217.7 339.2 218.0 336.0 218.4 334.5 218.7 334.9 219.1 338.1 219.4 336.1 219.8 337.4 220.1 336.3 220.5 332.1 220.9 333.1 221.2 329.3 221.6 330.9 221.9 333.6 222.3 327.7 222.6 328.8 223.0 327.3 223.3 323.2 223.7 329.9 224.0 328.0 224.4 319.1 224.8 324.0 225.1 326.3 225.5 330.5 225.8 333.2 226.2 340.7 226.5 329.5 226.9 329.9 227.2 330.7 227.6 323.3 227.9 328.5 228.3 323.8 228.7 325.9 229.0 332.9 229.4 324.6 229.7 329.6 230.1 325.2 230.4 324.6 230.8 323.6 231.1 333.3 231.5 323.8 231.8 324.7 232.2 328.8 232.6 325.1 232.9 325.2 233.3 326.2 233.6 328.5 234.0 328.5 234.3 325.3 234.7 321.1 235.0 335.8 235.4 326.4 235.7 324.5 236.1 326.6 236.5 324.1 236.8 323.8 237.2 319.7 237.5 314.2 237.9 318.1 238.2 320.9 238.6 315.4 238.9 326.7 239.3 325.2 239.6 325.1 240.0 323.2 240.4 318.5 240.7 314.1 241.1 312.5 241.4 313.2 241.8 306.4 242.1 309.8 242.5 309.4 242.8 311.4 243.2 311.3 243.5 314.2 243.9 318.9 244.3 304.0 244.6 307.4 245.0 304.1 245.3 300.4 245.7 301.4 246.0 301.6 246.4 308.0 246.7 311.7 247.1 311.8 247.5 309.2 247.8 314.4 248.2 317.4 248.5 310.7 248.9 312.1 249.2 309.6 249.6 308.7 249.9 309.5 250.3 308.8 250.6 303.1 251.0 305.4 251.4 304.0 251.7 302.2 252.1 302.6 252.4 308.9 252.8 300.9 253.1 294.4 253.5 292.9 253.8 296.1 254.2 295.0 254.5 305.7 254.9 296.3 255.3 295.7 255.6 300.0 256.0 305.0 256.3 300.7 256.7 298.7 257.0 303.3 257.4 297.3 257.7 297.2 258.1 295.3 258.4 296.1 258.8 297.1 259.2 300.0 259.5 301.2 259.9 299.7 260.2 299.1 260.6 298.2 260.9 294.3 261.3 297.6 261.6 293.9 262.0 284.7 262.3 289.0 262.7 290.6 263.1 287.9 263.4 289.7 263.8 288.5 264.1 285.5 264.5 290.3 264.8 296.8 265.2 292.2 265.5 292.3 265.9 286.1 266.2 284.4 266.6 288.1 267.0 291.7 267.3 285.6 267.7 292.9 268.0 288.3 268.4 283.8 268.7 285.1 269.1 287.8 269.4 283.3 269.8 282.4 270.2 284.5 270.5 277.8 270.9 278.2 271.2 274.1 271.6 277.2 271.9 279.3 272.3 274.3 272.6 273.0 273.0 280.4 273.3 279.3 273.7 277.1 274.1 273.9 274.4 282.6 274.8 274.8 275.1 279.4 275.5 276.2 275.8 277.1 276.2 269.9 276.5 277.8 276.9 273.1 277.2 269.9 277.6 277.7 278.0 272.5 278.3 269.6 278.7 269.3 279.0 271.9 279.4 269.5 279.7 269.3 280.1 259.7 280.4 268.8 280.8 265.6 281.1 264.8 281.5 263.9 281.9 270.4 282.2 266.5 282.6 272.9 282.9 268.8 283.3 272.5 283.6 275.1 284.0 268.6 284.3 269.2 284.7 266.0 285.0 259.7 285.4 272.2 285.8 266.8 286.1 270.0 286.5 265.5 286.8 267.5 287.2 274.4 287.5 261.3 287.9 262.2 288.2 263.3 288.6 263.8 288.9 269.7 289.3 262.0 289.7 268.0 290.0 259.6 290.4 263.6 290.7 260.5 291.1 256.3 291.4 254.6 291.8 259.1 292.1 256.7 292.5 262.1 292.8 260.2 293.2 261.1 293.6 265.6 293.9 255.4 294.3 261.2 294.6 255.5 295.0 251.4 295.3 250.7 295.7 252.5 296.0 260.7 296.4 258.5 296.8 257.1 297.1 254.5 297.5 255.5 297.8 250.7 298.2 253.9 298.5 260.9 298.9 255.9 299.2 248.7 299.6 253.6 299.9 251.6 300.3 258.2 300.7 254.5 301.0 249.5 301.4 258.7 301.7 257.0 302.1 249.8 302.4 255.1 302.8 253.4 303.1 245.8 303.5 251.9 303.8 253.1 304.2 255.4 304.6 258.0 304.9 257.2 305.3 254.1 305.6 255.5 306.0 252.8 306.3 254.7 306.7 254.0 307.0 258.7 307.4 255.4 307.7 255.7 308.1 251.9 308.5 252.9 308.8 255.0 309.2 257.7 309.5 261.5 309.9 245.9 310.2 252.5 310.6 254.6 310.9 245.8 311.3 246.2 311.6 256.2 312.0 244.7 312.4 244.6 312.7 248.6 313.1 242.7 313.4 245.4 313.8 244.6 314.1 246.3 314.5 242.7 314.8 239.6 315.2 235.4 315.5 246.3 315.9 243.9 316.3 246.6 316.6 244.3 317.0 245.3 317.3 240.3 317.7 248.1 318.0 246.5 318.4 250.5 318.7 251.9 319.1 250.1 319.4 246.0 319.8 244.2 320.2 249.1 320.5 250.5 320.9 240.8 321.2 251.0 321.6 239.9 321.9 241.5 322.3 242.5 322.6 247.4 323.0 244.4 323.4 242.6 323.7 240.8 324.1 238.0 324.4 238.9 324.8 235.1 325.1 239.3 325.5 242.9 325.8 245.5 326.2 236.8 326.5 236.4 326.9 247.3 327.3 250.6 327.6 237.3 328.0 239.0 328.3 240.5 328.7 245.1 329.0 245.0 329.4 251.0 329.7 247.3 330.1 243.8 330.4 241.0 330.8 238.1 331.2 237.9 331.5 237.1 331.9 232.3 332.2 240.4 332.6 240.2 332.9 241.2 333.3 242.1 333.6 244.4 334.0 242.2 334.3 238.8 334.7 241.1 335.1 237.9 335.4 235.9 335.8 233.8 336.1 237.1 336.5 239.2 336.8 245.3 337.2 243.0 337.5 235.1 337.9 239.8 338.2 236.9 338.6 233.6 339.0 236.4 339.3 242.7 339.7 241.2 340.0 239.6 340.4 237.1 340.7 246.0 341.1 237.5 341.4 239.1 341.8 239.7 342.1 233.4 342.5 234.4 342.9 236.3 343.2 235.9 343.6 239.3 343.9 232.1 344.3 237.2 344.6 234.1 345.0 238.1 345.3 235.7 345.7 238.4 346.1 239.1 346.4 233.7 346.8 243.5 347.1 236.6 347.5 233.2 347.8 231.9 348.2 237.2 348.5 236.0 348.9 243.4 349.2 237.2 349.6 238.2 350.0 239.7 350.3 230.0 350.7 232.7 351.0 233.0 351.4 231.5 351.7 231.7 352.1 230.8 352.4 225.0 352.8 230.7 353.1 235.8 353.5 232.3 353.9 231.2 354.2 236.9 354.6 233.5 354.9 234.2 355.3 235.8 355.6 235.7 356.0 241.0 356.3 237.9 356.7 229.2 357.0 230.3 357.4 225.8 357.8 229.9 358.1 231.1 358.5 232.5 358.8 239.2 359.2 229.6 359.5 235.2 359.9 234.4 360.2 233.5 360.6 176.0 360.9 137.3 361.3 123.5 361.7 119.3 362.0 119.9 362.4 120.8 362.7 118.0 363.1 117.1 363.4 118.5 363.8 117.0 364.1 118.9 364.5 123.3 364.8 127.8 365.2 116.6 365.6 121.6 365.9 130.1 366.3 124.7 366.6 125.7 367.0 130.9 367.3 127.4 367.7 120.5 368.0 124.4 368.4 126.2 368.7 126.4 369.1 125.2 369.5 124.1 369.8 127.2 370.2 124.8 370.5 127.3 370.9 128.9 371.2 122.8 371.6 122.1 371.9 119.3 372.3 122.5 372.7 118.7 373.0 131.3 373.4 125.0 373.7 129.0 374.1 122.0 374.4 130.6 374.8 119.4 375.1 124.3 375.5 123.3 375.8 132.4 376.2 123.1 376.6 132.7 376.9 122.2 377.3 125.5 377.6 123.1 378.0 126.3 378.3 127.2 378.7 127.6 379.0 133.2 379.4 124.1 379.7 122.6 380.1 121.2 380.5 122.6 380.8 127.1 381.2 131.2 381.5 130.1 381.9 129.9 382.2 127.4 382.6 123.2 382.9 123.7 383.3 128.1 383.6 125.5 384.0 122.2 384.4 131.9 384.7 116.6 385.1 125.9 385.4 125.3 385.8 116.4 386.1 124.3 386.5 128.9 386.8 124.7 387.2 121.5 387.5 116.6 387.9 123.1 388.3 121.6 388.6 128.4 389.0 122.0 389.3 121.9 389.7 120.1 390.0 123.1 390.4 123.0 390.7 124.4 391.1 121.6 391.4 122.3 391.8 119.5 392.2 126.0 392.5 119.7 392.9 131.4 393.2 122.9 393.6 123.0 393.9 119.1 394.3 120.1 394.6 122.1 395.0 129.1 395.4 124.6 395.7 124.0 396.1 121.9 396.4 135.8 396.8 124.0 397.1 123.8 397.5 123.6 397.8 122.4 398.2 128.9 398.5 125.2 398.9 127.2 399.3 130.3 399.6 122.4 400.0 123.1 400.3 122.4 400.7 131.1 401.0 129.2 401.4 127.3 401.7 127.9 402.1 119.6 402.4 132.8 402.8 121.2 403.2 117.4 403.5 124.7 403.9 119.1 404.2 122.8 404.6 124.6 404.9 129.0 405.3 127.9 405.6 125.3 406.0 134.8 406.3 119.0 406.7 125.6 407.1 125.5 407.4 121.0 407.8 118.0 408.1 117.1 408.5 128.4 408.8 123.9 409.2 123.0 409.5 132.5 409.9 120.9 410.2 120.3 410.6 128.6 411.0 121.7 411.3 125.4 411.7 119.0 412.0 122.4 412.4 129.7 412.7 124.4 413.1 125.7 413.4 128.1 413.8 123.5 414.1 121.5 414.5 120.9 414.9 124.6 415.2 122.9 415.6 125.6 415.9 122.2 416.3 120.3 416.6 120.8 417.0 117.4 417.3 125.9 417.7 117.6 418.0 124.3 418.4 132.3 418.8 135.4 419.1 131.5 419.5 121.7 419.8 121.2 420.2 135.7 420.5 132.0 420.9 122.8 421.2 121.3 421.6 129.0 422.0 127.6 422.3 119.2 422.7 126.5 423.0 122.8 423.4 127.6 423.7 123.1 424.1 129.3 424.4 125.1 424.8 128.5 425.1 126.6 425.5 126.0 425.9 124.9 426.2 125.2 426.6 129.9 426.9 124.6 427.3 122.4 427.6 121.6 428.0 119.4 428.3 122.2 428.7 118.1 429.0 124.6 429.4 122.9 429.8 119.2 430.1 122.5 430.5 126.8 430.8 132.9 431.2 126.9 431.5 124.2 431.9 123.4 432.2 127.2 432.6 134.1 432.9 129.5 433.3 118.8 433.7 130.5 434.0 123.0 434.4 118.9 434.7 114.8 435.1 115.6 435.4 128.0 435.8 123.1 436.1 126.7 436.5 121.8 436.8 121.0 437.2 127.1 437.6 122.9 437.9 126.0 438.3 120.4 438.6 125.4 439.0 115.4 439.3 115.2 439.7 129.4 440.0 122.4 440.4 120.8 440.7 121.3 441.1 122.4 441.5 132.9 441.8 126.2 442.2 121.6 442.5 121.4 442.9 115.7 443.2 121.8 443.6 123.0 443.9 120.2 444.3 123.7 444.6 119.0 445.0 127.0 445.4 123.7 445.7 123.5 446.1 123.5 446.4 128.2 446.8 122.6 447.1 124.7 447.5 123.9 447.8 129.4 448.2 121.6 448.6 115.6 448.9 127.7 449.3 125.3 449.6 129.6 450.0 122.4 450.3 133.0 450.7 125.0 451.0 123.0 451.4 122.4 451.7 125.2 452.1 126.4 452.5 122.9 452.8 134.6 453.2 126.7 453.5 119.3 453.9 122.1 454.2 120.9 454.6 133.7 454.9 129.6 455.3 125.1 455.6 129.1 456.0 117.2 456.4 125.4 456.7 126.2 457.1 122.6 457.4 122.7 457.8 125.4 458.1 128.4 458.5 124.9 458.8 119.0 459.2 130.6 459.5 124.7 459.9 121.0 460.3 125.7 460.6 119.7 461.0 118.7 461.3 119.1 461.7 122.2 462.0 117.7 462.4 122.4 462.7 115.7 463.1 120.1 463.4 125.9 463.8 119.6 464.2 121.5 464.5 118.9 464.9 121.8 465.2 133.6 465.6 117.8 465.9 128.0 466.3 124.6 466.6 124.3 467.0 130.4 467.3 117.0 467.7 124.9 468.1 114.1 468.4 119.9 468.8 122.3 469.1 136.0 469.5 126.5 469.8 124.5 470.2 122.4 470.5 122.4 470.9 117.0 471.3 124.3 471.6 124.6 472.0 116.8 472.3 124.7 472.7 120.1 473.0 114.9 473.4 119.2 473.7 124.3 474.1 128.2 474.4 125.4 474.8 122.4 475.2 126.3 475.5 135.7 475.9 123.5 476.2 133.6 476.6 120.4 476.9 125.0 477.3 129.0 477.6 133.2 478.0 162.8 478.3 229.0 478.7 231.4 479.1 229.7 479.4 232.4 479.8 228.8 480.1 226.1 480.5 230.3 480.8 228.7 481.2 240.1 481.5 234.8 481.9 226.4 482.2 233.9 482.6 233.2 483.0 234.5 483.3 236.2 483.7 243.3 484.0 234.8 484.4 231.1 484.7 231.3 485.1 234.8 485.4 231.5 485.8 228.8 486.1 229.4 486.5 227.3 486.9 229.5 487.2 235.1 487.6 243.3 487.9 247.3 488.3 244.3 488.6 238.2 489.0 237.2 489.3 234.5 489.7 231.8 490.0 231.6 490.4 235.1 490.8 239.7 491.1 241.0 491.5 239.4 491.8 237.3 492.2 233.4 492.5 230.7 492.9 238.6 493.2 229.7 493.6 233.0 493.9 239.2 494.3 242.0 494.7 238.9 495.0 246.4 495.4 242.8 495.7 240.6 496.1 244.6 496.4 243.9 496.8 239.4 497.1 235.8 497.5 243.2 497.9 245.8 498.2 245.0 498.6 242.9 498.9 241.9 499.3 237.9 499.6 249.7 500.0 241.8 500.3 251.3 500.7 250.7 501.0 250.7 501.4 242.1 501.8 244.0 502.1 245.5 502.5 241.6 502.8 238.2 503.2 245.5 503.5 247.8 503.9 248.3 504.2 243.8 504.6 242.9 504.9 249.0 505.3 246.4 505.7 244.4 506.0 258.4 506.4 247.5 506.7 248.2 507.1 256.4 507.4 247.7 507.8 243.3 508.1 244.2 508.5 243.5 508.8 249.7 509.2 251.1 509.6 243.7 509.9 248.9 510.3 248.1 510.6 248.1 511.0 243.8 511.3 254.3 511.7 245.4 512.0 248.1 512.4 246.1 512.7 254.1 513.1 254.9 513.5 250.1 513.8 253.6 514.2 253.8 514.5 251.7 514.9 253.3 515.2 256.3 515.6 252.0 515.9 257.0 516.3 256.2 516.6 259.2 517.0 250.8 517.4 253.3 517.7 249.1 518.1 245.1 518.4 250.3 518.8 248.0 519.1 254.4 519.5 253.1 519.8 249.7 520.2 246.8 520.6 242.1 520.9 247.7 521.3 244.6 521.6 246.9 522.0 252.8 522.3 249.3 522.7 245.5 523.0 250.9 523.4 258.3 523.7 258.1 524.1 257.9 524.5 255.5 524.8 253.8 525.2 251.6 525.5 253.6 525.9 257.6 526.2 248.8 526.6 254.0 526.9 262.1 527.3 259.2 527.6 261.7 528.0 261.0 528.4 257.0 528.7 256.2 529.1 255.1 529.4 247.8 529.8 250.2 530.1 254.9 530.5 254.3 530.8 255.5 531.2 247.8 531.5 247.7 531.9 250.1 532.3 250.7 532.6 246.6 533.0 250.4 533.3 249.7 533.7 250.6 534.0 256.1 534.4 251.9 534.7 257.0 535.1 252.7 535.4 252.0 535.8 254.8 536.2 255.0 536.5 257.1 536.9 264.0 537.2 258.2 537.6 263.2 537.9 263.1 538.3 261.9 538.6 263.5 539.0 261.5 539.3 262.6 539.7 262.3 540.1 261.8 540.4 258.7 540.8 259.9 541.1 258.2 541.5 257.6 541.8 254.6 542.2 257.6 542.5 255.9 542.9 262.7 543.2 258.7 543.6 259.1 544.0 259.8 544.3 262.2 544.7 267.0 545.0 265.4 545.4 268.7 545.7 265.1 546.1 267.7 546.4 262.1 546.8 270.6 547.2 271.3 547.5 267.3 547.9 266.8 548.2 265.6 548.6 270.5 548.9 265.5 549.3 267.6 549.6 271.8 550.0 268.0 550.3 263.8 550.7 267.4 551.1 268.3 551.4 263.5 551.8 267.6 552.1 271.2 552.5 275.2 552.8 267.7 553.2 267.0 553.5 267.8 553.9 266.2 554.2 264.9 554.6 269.9 555.0 275.1 555.3 268.9 555.7 273.4 556.0 270.7 556.4 272.8 556.7 272.9 557.1 275.6 557.4 277.5 557.8 273.0 558.1 267.2 558.5 272.6 558.9 274.6 559.2 272.4 559.6 269.7 559.9 276.4 560.3 270.2 560.6 276.3 561.0 274.8 561.3 272.2 561.7 267.0 562.0 268.6 562.4 272.9 562.8 274.2 563.1 278.6 563.5 280.0 563.8 277.6 564.2 281.0 564.5 276.2 564.9 277.8 565.2 275.8 565.6 281.3 565.9 278.7 566.3 282.3 566.7 282.0 567.0 284.8 567.4 286.5 567.7 283.6 568.1 284.1 568.4 281.1 568.8 275.7 569.1 275.5 569.5 277.8 569.8 279.7 570.2 278.5 570.6 284.5 570.9 286.7 571.3 286.3 571.6 286.7 572.0 289.1 572.3 289.3 572.7 292.0 573.0 288.5 573.4 289.8 573.8 290.5 574.1 295.6 574.5 289.0 574.8 292.1 575.2 292.5 575.5 291.8 575.9 293.3 576.2 286.2 576.6 290.5 576.9 287.7 577.3 290.9 577.7 285.1 578.0 286.6 578.4 289.0 578.7 290.8 579.1 291.5 579.4 294.7 579.8 291.5 580.1 293.9 580.5 295.0 580.8 302.8 581.2 298.4 581.6 300.5 581.9 299.6 582.3 297.4 582.6 298.3 583.0 303.6 583.3 298.2 583.7 306.2 584.0 303.1 584.4 302.1 584.7 296.8 585.1 295.5 585.5 292.6 585.8 302.1 586.2 292.1 586.5 293.9 586.9 295.6 587.2 294.0 587.6 292.0 587.9 295.5 588.3 298.4 588.6 297.5 589.0 298.5 589.4 299.2 589.7 296.2 590.1 297.4 590.4 298.0 590.8 297.9 591.1 298.2 591.5 301.3 591.8 303.1 592.2 302.2 592.5 301.0 592.9 304.6 593.3 301.7 593.6 312.9 594.0 302.4 594.3 306.1 594.7 308.6 595.0 310.3 595.4 317.4 595.7 313.6 596.1 315.3 596.5 318.7 596.8 316.0 597.2 315.1 597.5 312.4 597.9 310.6 598.2 313.0 598.6 317.0 598.9 306.7 599.3 311.0 599.6 311.6 600.0 308.3 600.4 305.5 600.7 310.3 601.1 304.7 601.4 302.1 601.8 302.7 602.1 302.4 602.5 302.4 602.8 310.0 603.2 316.2 603.5 318.5 603.9 317.8 604.3 314.2 604.6 317.7 605.0 325.1 605.3 313.6 605.7 311.0 606.0 311.6 606.4 312.4 606.7 312.5 607.1 312.9 607.4 319.1 607.8 312.7 608.2 323.0 608.5 318.5 608.9 320.1 609.2 314.4 609.6 316.1 609.9 315.1 610.3 319.2 610.6 320.5 611.0 319.7 611.3 319.8 611.7 314.2 612.1 313.7 612.4 313.5 612.8 317.4 613.1 320.7 613.5 318.7 613.8 317.9 614.2 318.4 614.5 312.7 614.9 317.1 615.2 324.3 615.6 315.0 616.0 314.8 616.3 318.0 616.7 311.5 617.0 320.5 617.4 317.7 617.7 326.8 618.1 321.5 618.4 318.4 618.8 324.3 619.1 321.7 619.5 328.6 619.9 329.1 620.2 326.3 620.6 334.2 620.9 324.3 621.3 323.4 621.6 324.1 622.0 329.9 622.3 328.9 622.7 327.7 623.1 335.5 623.4 332.4 623.8 334.5 624.1 333.1 624.5 334.8 624.8 324.6 625.2 331.9 625.5 325.2 625.9 323.4 626.2 328.2 626.6 325.4 627.0 329.8 627.3 332.7 627.7 324.4 628.0 328.3 628.4 321.2 628.7 324.9 629.1 326.5 629.4 324.8 629.8 323.4 630.1 321.7 630.5 326.8 630.9 326.7 631.2 321.1 631.6 322.6 631.9 321.9 632.3 326.7 632.6 326.9 633.0 320.0 633.3 326.5 633.7 331.7 634.0 333.0 634.4 336.4 634.8 337.1 635.1 342.1 635.5 336.7 635.8 335.1 636.2 330.5 636.5 332.3 636.9 324.7 637.2 328.5 637.6 326.7 637.9 326.0 638.3 329.9 638.7 322.6 639.0 327.8 639.4 328.6 639.7 336.7 640.1 338.6 640.4 331.7 640.8 331.1 641.1 329.3 641.5 327.6 641.8 328.2 642.2 334.7 642.6 334.1 642.9 332.2 643.3 335.7 643.6 335.0 644.0 332.2 644.3 330.9 644.7 330.5 645.0 332.6 645.4 328.8 645.8 330.4 646.1 335.2 646.5 331.3 646.8 331.0 647.2 329.6 647.5 328.0 647.9 326.4 648.2 329.6 648.6 332.5 648.9 334.0 649.3 330.7 649.7 334.9 650.0 334.1 650.4 331.8 650.7 333.5 651.1 332.4 651.4 335.0 651.8 335.1 652.1 331.6 652.5 338.5 652.8 337.0 653.2 338.3 653.6 339.5 653.9 337.5 654.3 339.4 654.6 339.1 655.0 340.3 655.3 337.9 655.7 338.6 656.0 339.3 656.4 340.9 656.7 337.1 657.1 336.0 657.5 337.1 657.8 337.3 658.2 336.0 658.5 339.3 658.9 339.9 659.2 340.4 659.6 339.2 659.9 337.4 660.3 336.9 660.6 339.9 661.0 338.9 661.4 337.4 661.7 338.1 662.1 335.9 662.4 342.1 662.8 340.2 663.1 342.1 663.5 345.4 663.8 344.9 664.2 339.8 664.5 339.2 664.9 341.2 665.3 340.2 665.6 339.3 666.0 335.0 666.3 337.2 666.7 335.3 667.0 338.7 667.4 339.9 667.7 344.1 668.1 341.8 668.4 342.1 668.8 341.2 669.2 341.5 669.5 338.6 669.9 340.8 670.2 339.7 670.6 337.8 670.9 341.7 671.3 343.2 671.6 342.7 672.0 342.2 672.4 344.7 672.7 341.2 673.1 339.2 673.4 340.1 673.8 339.9 674.1 340.7 674.5 342.0 674.8 341.8 675.2 344.4 675.5 343.2 675.9 347.2 676.3 344.8 676.6 346.0 677.0 343.2 677.3 342.7 677.7 343.2 678.0 342.7 678.4 343.6 678.7 345.0 679.1 343.5 679.4 343.2 679.8 345.1 680.2 347.6 680.5 345.1 680.9 345.7 681.2 346.2 681.6 348.1 681.9 345.8 682.3 346.0 682.6 346.9 683.0 347.1 683.3 347.4 683.7 346.2 684.1 345.7 684.4 345.0 684.8 344.9 685.1 346.2 685.5 349.7 685.8 347.4 686.2 347.9 686.5 348.5 686.9 347.1 687.2 349.3 687.6 349.6 688.0 349.4 688.3 349.3 688.7 350.0 689.0 349.5 689.4 350.6 689.7 349.9 690.1 349.7 690.4 349.7 690.8 348.6 691.1 351.2 691.5 349.7 691.9 349.6 692.2 349.7 692.6 351.4 692.9 350.2 693.3 350.3 693.6 349.4 694.0 349.6 694.3 349.9 694.7 349.7 695.0 350.0 695.4 350.6 695.8 350.5 696.1 350.8 696.5 351.4 696.8 352.4 697.2 352.3 697.5 352.3 697.9 352.5 698.2 352.7 698.6 351.9 699.0 352.5 699.3 351.5 699.7 352.3 700.0 352.7 700.4 353.6 700.7 352.4 701.1 353.2 701.4 353.6 701.8 353.6 702.1 353.7 702.5 354.5 702.9 354.4 703.2 354.4 703.6 354.3 703.9 355.1 704.3 354.7 704.6 355.7 705.0 354.9 705.3 355.5 705.7 355.9 706.0 356.0 706.4 356.3 706.8 356.0 707.1 356.0 707.5 355.4 707.8 356.1 708.2 356.7 708.5 357.0 708.9 356.3 709.2 357.5 709.6 356.9 709.9 359.0 710.3 358.6 710.7 358.5 711.0 358.4 711.4 358.4 711.7 358.4 712.1 358.7 712.4 359.1 712.8 359.7 713.1 359.7 713.5 359.7 713.8 359.7 714.2 360.0 714.6 360.2 714.9 359.6 715.3 359.6 715.6 360.5 716.0 360.3 716.3 361.7 716.7 360.9 717.0 361.6 717.4 361.2 717.7 362.5 718.1 361.6 718.5 361.2 718.8 361.4 719.2 361.9 719.5 362.4 719.9 362.6 720.2 363.1 720.6 362.9 720.9 362.6 721.3 362.2 721.7 362.7 722.0 363.2 722.4 363.9 722.7 363.8 723.1 364.5 723.4 364.0 723.8 365.0 724.1 364.5 724.5 364.0 724.8 364.6 725.2 364.6 725.6 364.5 725.9 365.4 726.3 365.1 726.6 365.5 727.0 365.7 727.3 365.5 727.7 365.2 728.0 365.6 728.4 365.5 728.7 365.4 729.1 365.7 729.5 366.3 729.8 366.3 730.2 366.4 730.5 367.1 730.9 367.4 731.2 367.5 731.6 367.5 731.9 367.0 732.3 366.8 732.6 367.5 733.0 367.8 733.4 367.3 733.7 367.8 734.1 368.7 734.4 368.6 734.8 369.8 735.1 370.3 735.5 369.8 735.8 370.5 736.2 371.1 736.5 371.1 736.9 372.5 737.3 372.2 737.6 372.6 738.0 372.2 738.3 372.1 738.7 372.3 739.0 373.1 739.4 374.0 739.7 374.0 740.1 373.3 740.4 373.8 740.8 373.7 741.2 374.2 741.5 375.0 741.9 375.8 742.2 374.6 742.6 375.9 742.9 375.7 743.3 376.0 743.6 375.6 744.0 376.5 744.3 376.1 744.7 376.6 745.1 376.5 745.4 376.9 745.8 377.1 746.1 377.1 746.5 378.1 746.8 377.5 747.2 379.4 747.5 379.5 747.9 379.6 748.3 379.7 748.6 380.1 749.0 380.1 749.3 380.3 749.7 379.5 750.0 380.4 750.4 380.5 750.7 381.2 751.1 382.0 751.4 381.7 751.8 381.9 752.2 382.8 752.5 383.0 752.9 382.6 753.2 383.3 753.6 383.7 753.9 384.6 754.3 384.1 754.6 384.4 755.0 385.2 755.3 385.6 755.7 385.2 756.1 385.8 756.4 385.9 756.8 386.5 757.1 386.5 757.5 386.2 757.8 386.3 758.2 387.2 758.5 387.4 758.9 387.7 759.2 388.3 759.6 388.7 760.0 389.2 760.3 388.9 760.7 390.0 761.0 389.2 761.4 389.0 761.7 390.8 762.1 390.9 762.4 391.7 762.8 391.9 763.1 391.7 763.5 392.5 763.9 392.1 764.2 392.4 764.6 392.6 764.9 393.8 765.3 394.7 765.6 394.5 766.0 395.0 766.3 394.5 766.7 395.6 767.0 394.6 767.4 395.3 767.8 395.5 768.1 395.8 768.5 396.3 768.8 396.4 769.2 397.1 769.5 397.9 769.9 398.1 770.2 398.0 770.6 398.9 771.0 399.0 771.3 398.6 771.7 398.6 772.0 398.5 772.4 398.2 772.7 397.9 773.1 398.6 773.4 399.8 773.8 397.5 774.1 398.5 774.5 398.7 774.9 399.3 775.2 400.2 775.6 400.0 775.9 400.3 776.3 400.3 776.6 401.1 777.0 401.1 777.3 401.3 777.7 401.3 778.0 401.8 778.4 403.0 778.8 402.4 779.1 402.2 779.5 402.1 779.8 401.8 780.2 402.2 780.5 401.5 780.9 401.6 781.2 401.2 781.6 401.3 781.9 401.0 782.3 402.0 782.7 402.2 783.0 401.0" stroke="#2A8DDE"/>
<path d="M57.0 362.1 57.3 359.9 57.7 356.5 58.1 357.0 58.4 353.3 58.8 350.1 59.1 360.6 59.5 360.2 59.8 356.4 60.2 359.7 60.5 354.5 60.9 355.5 61.2 357.4 61.6 361.3 62.0 351.7 62.3 352.8 62.7 359.3 63.0 360.0 63.4 353.9 63.7 359.0 64.1 352.3 64.4 352.4 64.8 360.4 65.1 362.5 65.5 362.6 65.9 358.9 66.2 358.5 66.6 356.3 66.9 353.0 67.3 354.5 67.6 356.5 68.0 357.3 68.3 362.3 68.7 352.2 69.0 351.6 69.4 355.3 69.8 351.4 70.1 359.6 70.5 350.3 70.8 361.8 71.2 361.4 71.5 365.6 71.9 361.1 72.2 359.3 72.6 354.0 73.0 356.8 73.3 354.1 73.7 355.9 74.0 356.2 74.4 354.6 74.7 352.9 75.1 354.8 75.4 354.9 75.8 353.4 76.1 351.4 76.5 346.7 76.9 352.1 77.2 350.5 77.6 349.4 77.9 353.6 78.3 355.3 78.6 353.3 79.0 355.9 79.3 356.5 79.7 360.3 80.0 358.8 80.4 355.1 80.8 360.7 81.1 359.1 81.5 351.9 81.8 354.5 82.2 358.0 82.5 344.6 82.9 346.5 83.2 350.0 83.6 362.3 83.9 355.8 84.3 359.5 84.7 359.9 85.0 359.8 85.4 359.4 85.7 356.7 86.1 356.5 86.4 357.7 86.8 349.8 87.1 354.5 87.5 351.1 87.8 355.0 88.2 354.1 88.6 351.4 88.9 350.4 89.3 352.0 89.6 354.0 90.0 355.7 90.3 353.5 90.7 356.1 91.0 352.6 91.4 355.9 91.7 351.3 92.1 360.1 92.5 364.3 92.8 352.8 93.2 355.2 93.5 349.3 93.9 351.8 94.2 358.1 94.6 358.9 94.9 353.9 95.3 353.5 95.7 349.3 96.0 352.1 96.4 355.5 96.7 356.6 97.1 351.1 97.4 348.2 97.8 349.7 98.1 346.4 98.5 349.4 98.8 363.2 99.2 358.6 99.6 354.7 99.9 352.2 100.3 350.6 100.6 355.8 101.0 355.2 101.3 350.2 101.7 353.4 102.0 357.0 102.4 357.3 102.7 361.9 103.1 349.5 103.5 358.4 103.8 361.1 104.2 359.8 104.5 356.5 104.9 353.8 105.2 349.7 105.6 343.6 105.9 346.4 106.3 340.1 106.6 342.7 107.0 342.8 107.4 352.3 107.7 356.8 108.1 346.6 108.4 350.5 108.8 357.5 109.1 356.1 109.5 359.9 109.8 365.2 110.2 358.4 110.5 354.3 110.9 353.0 111.3 350.2 111.6 346.8 112.0 347.8 112.3 348.4 112.7 360.1 113.0 353.6 113.4 350.0 113.7 347.8 114.1 352.4 114.4 351.2 114.8 344.8 115.2 354.1 115.5 346.1 115.9 348.2 116.2 348.0 116.6 354.1 116.9 351.8 117.3 356.8 117.6 351.8 118.0 351.9 118.3 348.5 118.7 348.8 119.1 344.2 119.4 352.7 119.8 351.0 120.1 350.7 120.5 352.9 120.8 354.0 121.2 356.9 121.5 356.7 121.9 355.2 122.3 352.4 122.6 346.8 123.0 351.7 123.3 346.6 123.7 347.4 124.0 352.5 124.4 354.5 124.7 356.8 125.1 357.6 125.4 352.0 125.8 350.6 126.2 351.7 126.5 343.6 126.9 347.3 127.2 351.7 127.6 348.3 127.9 343.5 128.3 348.1 128.6 347.4 129.0 355.3 129.3 360.9 129.7 355.6 130.1 360.6 130.4 349.4 130.8 340.4 131.1 343.8 131.5 342.3 131.8 351.7 132.2 344.5 132.5 348.0 132.9 345.5 133.2 345.7 133.6 348.3 134.0 348.8 134.3 346.8 134.7 355.5 135.0 349.9 135.4 343.4 135.7 345.6 136.1 342.2 136.4 342.1 136.8 341.7 137.1 342.1 137.5 344.7 137.9 352.5 138.2 349.1 138.6 345.1 138.9 345.2 139.3 337.6 139.6 341.2 140.0 337.1 140.3 343.3 140.7 343.2 141.0 334.3 141.4 331.9 141.8 346.1 142.1 336.1 142.5 347.0 142.8 339.7 143.2 340.6 143.5 338.9 143.9 339.2 144.2 344.2 144.6 349.2 145.0 347.2 145.3 339.2 145.7 337.5 146.0 341.3 146.4 339.4 146.7 342.1 147.1 341.0 147.4 342.7 147.8 345.7 148.1 345.6 148.5 340.0 148.9 342.5 149.2 342.7 149.6 340.8 149.9 337.8 150.3 339.1 150.6 336.9 151.0 340.6 151.3 342.9 151.7 343.4 152.0 352.9 152.4 345.3 152.8 347.3 153.1 352.1 153.5 347.2 153.8 344.7 154.2 348.3 154.5 341.4 154.9 339.7 155.2 344.1 155.6 343.3 155.9 346.0 156.3 335.4 156.7 341.2 157.0 330.1 157.4 340.4 157.7 341.1 158.1 343.4 158.4 347.2 158.8 346.2 159.1 341.5 159.5 338.0 159.8 336.8 160.2 332.0 160.6 330.3 160.9 334.1 161.3 342.4 161.6 338.1 162.0 341.4 162.3 344.9 162.7 343.5 163.0 347.9 163.4 342.6 163.7 344.2 164.1 340.6 164.5 340.9 164.8 343.8 165.2 338.7 165.5 345.1 165.9 340.9 166.2 343.8 166.6 349.8 166.9 345.2 167.3 352.6 167.6 352.7 168.0 348.2 168.4 342.8 168.7 337.5 169.1 347.8 169.4 341.9 169.8 345.2 170.1 346.0 170.5 342.5 170.8 343.7 171.2 346.8 171.6 342.9 171.9 347.6 172.3 338.8 172.6 338.7 173.0 340.2 173.3 337.4 173.7 346.9 174.0 341.5 174.4 351.6 174.7 340.0 175.1 343.1 175.5 344.2 175.8 337.5 176.2 336.0 176.5 333.1 176.9 332.9 177.2 334.4 177.6 334.7 177.9 342.4 178.3 349.2 178.6 342.2 179.0 343.6 179.4 341.5 179.7 335.9 180.1 341.1 180.4 337.1 180.8 338.5 181.1 340.4 181.5 336.8 181.8 333.8 182.2 336.3 182.5 334.3 182.9 350.7 183.3 336.6 183.6 347.9 184.0 345.7 184.3 340.7 184.7 343.6 185.0 342.2 185.4 343.4 185.7 340.0 186.1 344.8 186.4 347.0 186.8 348.5 187.2 349.1 187.5 340.6 187.9 340.8 188.2 345.8 188.6 341.6 188.9 347.4 189.3 344.6 189.6 339.6 190.0 344.9 190.3 339.1 190.7 339.0 191.1 341.0 191.4 332.8 191.8 334.6 192.1 332.1 192.5 333.5 192.8 335.1 193.2 337.8 193.5 334.6 193.9 333.8 194.2 337.6 194.6 338.8 195.0 343.7 195.3 342.0 195.7 340.0 196.0 336.6 196.4 335.2 196.7 337.6 197.1 334.5 197.4 338.8 197.8 327.3 198.2 332.2 198.5 330.2 198.9 325.6 199.2 332.4 199.6 330.6 199.9 332.8 200.3 330.5 200.6 332.7 201.0 333.4 201.3 337.7 201.7 335.3 202.1 337.1 202.4 338.0 202.8 333.4 203.1 329.6 203.5 336.3 203.8 326.5 204.2 327.9 204.5 325.8 204.9 322.0 205.2 325.8 205.6 320.3 206.0 328.2 206.3 326.6 206.7 324.3 207.0 323.3 207.4 326.9 207.7 322.3 208.1 324.7 208.4 320.4 208.8 320.0 209.1 321.5 209.5 338.6 209.9 329.9 210.2 324.0 210.6 332.2 210.9 322.4 211.3 320.5 211.6 326.6 212.0 326.6 212.3 319.5 212.7 328.0 213.0 320.3 213.4 323.5 213.8 322.2 214.1 323.2 214.5 323.5 214.8 323.9 215.2 326.5 215.5 329.2 215.9 324.0 216.2 324.4 216.6 326.7 216.9 325.2 217.3 327.7 217.7 332.1 218.0 328.6 218.4 331.3 218.7 326.4 219.1 332.4 219.4 327.3 219.8 328.8 220.1 325.5 220.5 323.5 220.9 322.7 221.2 320.2 221.6 322.7 221.9 322.7 222.3 317.9 222.6 322.5 223.0 319.4 223.3 317.5 223.7 323.7 224.0 320.7 224.4 311.3 224.8 313.0 225.1 318.6 225.5 323.8 225.8 324.7 226.2 331.2 226.5 323.6 226.9 325.0 227.2 326.0 227.6 314.4 227.9 323.8 228.3 321.1 228.7 323.6 229.0 327.1 229.4 320.4 229.7 325.7 230.1 317.9 230.4 316.2 230.8 314.3 231.1 326.1 231.5 315.8 231.8 319.0 232.2 323.2 232.6 319.1 232.9 317.5 233.3 317.0 233.6 320.2 234.0 322.7 234.3 318.9 234.7 313.8 235.0 328.6 235.4 320.5 235.7 315.7 236.1 320.9 236.5 314.8 236.8 315.0 237.2 311.0 237.5 305.7 237.9 312.5 238.2 312.6 238.6 307.4 238.9 320.5 239.3 319.0 239.6 317.7 240.0 318.2 240.4 313.4 240.7 307.9 241.1 304.7 241.4 308.7 241.8 300.2 242.1 306.5 242.5 306.6 242.8 307.5 243.2 305.0 243.5 309.5 243.9 312.0 244.3 299.8 244.6 302.2 245.0 299.6 245.3 294.9 245.7 295.9 246.0 296.3 246.4 301.2 246.7 304.6 247.1 309.6 247.5 305.6 247.8 312.9 248.2 312.9 248.5 307.8 248.9 309.3 249.2 305.5 249.6 307.7 249.9 304.3 250.3 303.8 250.6 299.2 251.0 299.3 251.4 301.6 251.7 299.3 252.1 299.4 252.4 304.5 252.8 298.5 253.1 292.1 253.5 292.2 253.8 295.0 254.2 292.5 254.5 303.0 254.9 292.9 255.3 294.1 255.6 300.8 256.0 302.8 256.3 299.3 256.7 296.7 257.0 301.6 257.4 295.2 257.7 296.4 258.1 294.0 258.4 296.5 258.8 294.8 259.2 297.1 259.5 300.6 259.9 298.4 260.2 297.5 260.6 297.6 260.9 295.3 261.3 298.5 261.6 295.0 262.0 283.3 262.3 287.3 262.7 289.5 263.1 285.9 263.4 289.1 263.8 286.1 264.1 283.1 264.5 287.3 264.8 294.6 265.2 288.6 265.5 291.0 265.9 284.0 266.2 282.2 266.6 286.6 267.0 290.6 267.3 283.8 267.7 291.7 268.0 287.3 268.4 282.4 268.7 283.9 269.1 287.4 269.4 284.2 269.8 286.1 270.2 285.0 270.5 276.0 270.9 276.3 271.2 273.5 271.6 276.7 271.9 280.1 272.3 274.9 272.6 275.2 273.0 281.0 273.3 281.0 273.7 277.6 274.1 273.6 274.4 283.5 274.8 272.8 275.1 276.6 275.5 273.8 275.8 274.6 276.2 269.1 276.5 276.5 276.9 273.5 277.2 270.0 277.6 278.2 278.0 273.0 278.3 269.1 278.7 267.9 279.0 270.5 279.4 268.5 279.7 267.4 280.1 258.5 280.4 268.6 280.8 267.1 281.1 264.5 281.5 262.5 281.9 269.8 282.2 266.4 282.6 272.2 282.9 268.8 283.3 272.4 283.6 273.7 284.0 268.2 284.3 270.0 284.7 264.2 285.0 257.5 285.4 270.6 285.8 265.1 286.1 267.9 286.5 264.3 286.8 268.0 287.2 275.1 287.5 262.1 287.9 264.2 288.2 263.8 288.6 265.3 288.9 269.5 289.3 261.9 289.7 267.0 290.0 258.1 290.4 263.1 290.7 259.1 291.1 255.0 291.4 254.7 291.8 259.4 292.1 257.2 292.5 262.7 292.8 261.2 293.2 261.0 293.6 264.6 293.9 257.3 294.3 261.5 294.6 256.3 295.0 251.8 295.3 249.8 295.7 251.8 296.0 259.1 296.4 256.8 296.8 255.7 297.1 253.7 297.5 253.8 297.8 251.6 298.2 253.8 298.5 261.8 298.9 259.4 299.2 249.4 299.6 255.5 299.9 251.9 300.3 257.7 300.7 254.5 301.0 247.0 301.4 257.5 301.7 255.5 302.1 248.4 302.4 254.7 302.8 251.8 303.1 246.4 303.5 252.5 303.8 253.1 304.2 254.8 304.6 259.4 304.9 258.2 305.3 254.5 305.6 256.9 306.0 252.0 306.3 256.4 306.7 255.8 307.0 258.4 307.4 255.6 307.7 257.2 308.1 253.5 308.5 252.3 308.8 256.5 309.2 259.9 309.5 262.8 309.9 247.1 310.2 254.4 310.6 253.9 310.9 246.5 311.3 245.6 311.6 254.1 312.0 243.2 312.4 243.0 312.7 247.4 313.1 240.6 313.4 247.6 313.8 244.0 314.1 246.2 314.5 243.2 314.8 241.0 315.2 239.1 315.5 249.2 315.9 249.8 316.3 249.4 316.6 246.5 317.0 246.7 317.3 239.6 317.7 248.7 318.0 244.0 318.4 247.6 318.7 250.9 319.1 247.7 319.4 244.8 319.8 243.5 320.2 249.5 320.5 251.1 320.9 240.5 321.2 251.8 321.6 238.3 321.9 241.7 322.3 241.9 322.6 246.2 323.0 243.3 323.4 240.4 323.7 238.9 324.1 236.7 324.4 239.6 324.8 234.1 325.1 241.1 325.5 241.2 325.8 243.6 326.2 235.0 326.5 235.8 326.9 247.2 327.3 250.2 327.6 237.9 328.0 238.4 328.3 240.2 328.7 244.0 329.0 245.0 329.4 250.4 329.7 245.9 330.1 242.3 330.4 240.1 330.8 236.3 331.2 236.3 331.5 236.5 331.9 233.4 332.2 241.4 332.6 242.7 332.9 240.5 333.3 241.5 333.6 244.2 334.0 241.8 334.3 237.5 334.7 240.4 335.1 237.1 335.4 234.9 335.8 232.3 336.1 235.7 336.5 239.8 336.8 244.0 337.2 243.2 337.5 235.6 337.9 242.2 338.2 235.8 338.6 232.3 339.0 237.1 339.3 242.6 339.7 241.0 340.0 241.2 340.4 238.1 340.7 247.3 341.1 237.5 341.4 241.1 341.8 240.6 342.1 231.9 342.5 233.5 342.9 235.7 343.2 234.8 343.6 239.4 343.9 231.3 344.3 238.4 344.6 234.0 345.0 237.2 345.3 235.9 345.7 237.8 346.1 237.7 346.4 232.5 346.8 243.5 347.1 236.1 347.5 232.8 347.8 230.9 348.2 237.7 348.5 237.3 348.9 245.0 349.2 237.5 349.6 239.2 350.0 238.6 350.3 228.2 350.7 231.8 351.0 229.8 351.4 229.7 351.7 226.9 352.1 229.2 352.4 222.9 352.8 229.7 353.1 235.1 353.5 230.7 353.9 231.3 354.2 234.9 354.6 233.4 354.9 234.3 355.3 237.7 355.6 236.2 356.0 242.5 356.3 236.5 356.7 227.3 357.0 230.1 357.4 226.8 357.8 228.4 358.1 231.4 358.5 232.2 358.8 238.8 359.2 229.4 359.5 234.2 359.9 236.2 360.2 234.3 360.6 176.2 360.9 135.8 361.3 122.1 361.7 119.6 362.0 119.4 362.4 120.4 362.7 118.4 363.1 117.4 363.4 118.9 363.8 115.0 364.1 118.2 364.5 123.1 364.8 127.7 365.2 117.9 365.6 123.1 365.9 131.6 366.3 124.8 366.6 124.3 367.0 130.8 367.3 125.6 367.7 120.2 368.0 122.5 368.4 124.6 368.7 126.1 369.1 124.3 369.5 123.0 369.8 126.1 370.2 124.9 370.5 128.0 370.9 127.6 371.2 122.2 371.6 121.5 371.9 118.8 372.3 121.7 372.7 119.0 373.0 131.8 373.4 121.9 373.7 126.5 374.1 121.2 374.4 128.7 374.8 119.8 375.1 123.9 375.5 122.1 375.8 130.3 376.2 123.7 376.6 132.8 376.9 122.5 377.3 126.8 377.6 122.5 378.0 125.2 378.3 126.9 378.7 127.3 379.0 130.4 379.4 124.2 379.7 121.7 380.1 121.1 380.5 123.1 380.8 127.6 381.2 131.4 381.5 130.1 381.9 128.2 382.2 127.2 382.6 121.9 382.9 122.5 383.3 129.1 383.6 125.5 384.0 122.5 384.4 131.8 384.7 115.5 385.1 125.5 385.4 124.8 385.8 115.1 386.1 122.9 386.5 128.5 386.8 124.9 387.2 119.9 387.5 116.3 387.9 122.6 388.3 120.4 388.6 127.5 389.0 119.8 389.3 121.6 389.7 119.4 390.0 122.4 390.4 122.8 390.7 123.2 391.1 121.5 391.4 121.2 391.8 118.5 392.2 126.9 392.5 118.2 392.9 130.8 393.2 122.4 393.6 122.9 393.9 118.9 394.3 120.2 394.6 123.5 395.0 129.1 395.4 122.9 395.7 123.2 396.1 122.8 396.4 135.8 396.8 124.4 397.1 121.5 397.5 125.1 397.8 123.2 398.2 126.9 398.5 124.5 398.9 126.5 399.3 129.0 399.6 123.1 400.0 124.1 400.3 122.0 400.7 130.9 401.0 129.0 401.4 126.3 401.7 127.5 402.1 119.4 402.4 132.8 402.8 119.7 403.2 117.0 403.5 123.1 403.9 116.4 404.2 123.0 404.6 124.0 404.9 129.1 405.3 127.8 405.6 126.2 406.0 134.5 406.3 119.9 406.7 125.6 407.1 125.4 407.4 120.9 407.8 118.4 408.1 117.7 408.5 127.5 408.8 124.3 409.2 122.8 409.5 132.7 409.9 121.7 410.2 119.9 410.6 127.8 411.0 122.5 411.3 125.3 411.7 118.1 412.0 122.1 412.4 128.5 412.7 122.8 413.1 127.6 413.4 128.4 413.8 122.1 414.1 121.3 414.5 121.1 414.9 123.9 415.2 124.4 415.6 124.2 415.9 121.9 416.3 120.8 416.6 122.5 417.0 116.1 417.3 125.5 417.7 117.7 418.0 123.2 418.4 131.7 418.8 134.7 419.1 131.7 419.5 121.8 419.8 121.3 420.2 134.5 420.5 132.2 420.9 121.9 421.2 119.5 421.6 126.8 422.0 125.2 422.3 117.8 422.7 125.9 423.0 122.6 423.4 128.7 423.7 123.7 424.1 130.4 424.4 124.2 424.8 127.5 425.1 127.2 425.5 125.1 425.9 124.8 426.2 124.1 426.6 128.9 426.9 123.8 427.3 120.8 427.6 122.8 428.0 118.1 428.3 124.0 428.7 117.2 429.0 125.2 429.4 122.7 429.8 118.0 430.1 121.7 430.5 126.9 430.8 131.2 431.2 127.2 431.5 124.3 431.9 121.4 432.2 127.4 432.6 134.5 432.9 130.8 433.3 120.1 433.7 131.1 434.0 123.0 434.4 119.5 434.7 115.3 435.1 115.4 435.4 129.1 435.8 123.7 436.1 126.4 436.5 122.1 436.8 121.1 437.2 125.3 437.6 122.2 437.9 125.9 438.3 118.9 438.6 124.2 439.0 115.0 439.3 112.9 439.7 127.2 440.0 121.9 440.4 121.2 440.7 120.0 441.1 121.2 441.5 132.0 441.8 125.1 442.2 123.4 442.5 121.8 442.9 116.0 443.2 123.6 443.6 123.4 443.9 119.9 444.3 123.4 444.6 119.3 445.0 126.9 445.4 123.5 445.7 123.6 446.1 122.7 446.4 129.6 446.8 121.6 447.1 122.4 447.5 124.0 447.8 129.6 448.2 121.3 448.6 115.6 448.9 128.8 449.3 125.9 449.6 127.7 450.0 120.3 450.3 132.6 450.7 125.8 451.0 122.4 451.4 120.4 451.7 123.8 452.1 125.2 452.5 122.0 452.8 133.7 453.2 126.7 453.5 120.0 453.9 123.2 454.2 120.4 454.6 133.7 454.9 127.5 455.3 125.2 455.6 129.2 456.0 118.1 456.4 123.6 456.7 125.7 457.1 120.6 457.4 122.4 457.8 125.4 458.1 127.8 458.5 124.9 458.8 118.3 459.2 129.9 459.5 125.5 459.9 119.4 460.3 126.2 460.6 118.9 461.0 117.7 461.3 118.5 461.7 122.0 462.0 119.0 462.4 122.5 462.7 117.5 463.1 119.1 463.4 125.6 463.8 119.1 464.2 121.1 464.5 118.8 464.9 121.1 465.2 132.1 465.6 117.5 465.9 127.5 466.3 123.6 466.6 123.0 467.0 131.2 467.3 118.2 467.7 124.8 468.1 114.9 468.4 121.4 468.8 122.3 469.1 136.4 469.5 125.9 469.8 122.5 470.2 123.2 470.5 120.6 470.9 116.6 471.3 123.6 471.6 123.7 472.0 116.6 472.3 123.7 472.7 119.5 473.0 114.4 473.4 118.8 473.7 122.7 474.1 127.4 474.4 125.0 474.8 121.4 475.2 126.2 475.5 134.3 475.9 123.4 476.2 133.2 476.6 119.9 476.9 124.0 477.3 128.4 477.6 133.1 478.0 162.0 478.3 227.0 478.7 230.1 479.1 229.0 479.4 230.7 479.8 226.8 480.1 224.3 480.5 228.4 480.8 229.8 481.2 239.0 481.5 233.8 481.9 226.2 482.2 235.6 482.6 234.4 483.0 234.8 483.3 237.1 483.7 241.6 484.0 233.4 484.4 231.1 484.7 229.6 485.1 233.9 485.4 231.5 485.8 227.1 486.1 227.6 486.5 226.9 486.9 229.1 487.2 236.0 487.6 241.7 487.9 246.9 488.3 243.2 488.6 237.4 489.0 236.2 489.3 234.6 489.7 232.4 490.0 232.4 490.4 235.9 490.8 240.1 491.1 240.3 491.5 239.8 491.8 235.5 492.2 232.0 492.5 228.8 492.9 238.0 493.2 229.2 493.6 232.9 493.9 240.0 494.3 243.1 494.7 239.2 495.0 246.3 495.4 244.9 495.7 241.3 496.1 245.8 496.4 246.4 496.8 237.7 497.1 236.7 497.5 241.8 497.9 244.6 498.2 245.8 498.6 243.8 498.9 242.8 499.3 240.0 499.6 248.7 500.0 241.6 500.3 251.3 500.7 252.3 501.0 252.3 501.4 245.0 501.8 245.9 502.1 249.3 502.5 243.7 502.8 239.1 503.2 246.8 503.5 249.2 503.9 251.3 504.2 243.5 504.6 242.6 504.9 247.2 505.3 245.9 505.7 242.2 506.0 255.9 506.4 245.7 506.7 245.9 507.1 255.0 507.4 246.8 507.8 239.9 508.1 241.7 508.5 243.1 508.8 248.7 509.2 250.4 509.6 240.2 509.9 246.2 510.3 247.0 510.6 244.8 511.0 244.8 511.3 257.0 511.7 246.6 512.0 249.4 512.4 247.0 512.7 254.9 513.1 256.5 513.5 251.5 513.8 256.6 514.2 255.6 514.5 251.2 514.9 253.0 515.2 255.9 515.6 251.0 515.9 257.8 516.3 255.1 516.6 257.3 517.0 249.9 517.4 253.9 517.7 251.0 518.1 245.2 518.4 250.3 518.8 247.0 519.1 253.6 519.5 252.7 519.8 249.9 520.2 247.6 520.6 242.9 520.9 249.7 521.3 247.8 521.6 247.0 522.0 252.3 522.3 248.5 522.7 245.0 523.0 249.4 523.4 258.8 523.7 256.5 524.1 256.8 524.5 255.6 524.8 255.7 525.2 251.7 525.5 256.3 525.9 258.6 526.2 247.2 526.6 254.8 526.9 263.1 527.3 258.7 527.6 261.2 528.0 261.6 528.4 258.5 528.7 256.4 529.1 254.7 529.4 247.0 529.8 249.6 530.1 253.2 530.5 254.3 530.8 256.9 531.2 251.4 531.5 251.7 531.9 253.3 532.3 251.3 532.6 249.7 533.0 250.2 533.3 251.6 533.7 252.2 534.0 257.9 534.4 251.2 534.7 260.0 535.1 253.2 535.4 251.3 535.8 253.4 536.2 253.7 536.5 255.5 536.9 262.4 537.2 257.6 537.6 261.9 537.9 262.8 538.3 261.7 538.6 264.3 539.0 263.3 539.3 262.3 539.7 262.9 540.1 262.7 540.4 259.5 540.8 258.9 541.1 257.8 541.5 256.9 541.8 255.9 542.2 258.0 542.5 255.7 542.9 262.2 543.2 257.2 543.6 257.5 544.0 258.8 544.3 262.4 544.7 266.5 545.0 262.7 545.4 269.7 545.7 263.0 546.1 265.0 546.4 260.9 546.8 268.1 547.2 268.5 547.5 266.0 547.9 267.7 548.2 266.6 548.6 271.4 548.9 268.3 549.3 268.7 549.6 273.4 550.0 269.0 550.3 263.5 550.7 267.7 551.1 265.8 551.4 261.3 551.8 264.7 552.1 269.8 552.5 273.6 552.8 268.4 553.2 266.6 553.5 268.7 553.9 266.1 554.2 265.1 554.6 268.2 555.0 272.6 555.3 266.4 555.7 271.4 556.0 269.7 556.4 268.9 556.7 269.4 557.1 272.3 557.4 274.6 557.8 271.1 558.1 265.2 558.5 270.9 558.9 274.3 559.2 271.7 559.6 269.7 559.9 277.0 560.3 272.1 560.6 277.4 561.0 275.0 561.3 272.1 561.7 267.1 562.0 269.4 562.4 273.3 562.8 275.5 563.1 277.9 563.5 279.7 563.8 276.9 564.2 281.7 564.5 277.3 564.9 277.4 565.2 275.5 565.6 279.1 565.9 277.8 566.3 281.5 566.7 281.7 567.0 284.6 567.4 288.0 567.7 282.5 568.1 284.3 568.4 280.2 568.8 275.1 569.1 276.4 569.5 279.1 569.8 278.5 570.2 277.7 570.6 281.7 570.9 287.4 571.3 285.6 571.6 287.8 572.0 290.9 572.3 290.9 572.7 293.0 573.0 291.4 573.4 289.2 573.8 288.2 574.1 294.7 574.5 289.0 574.8 291.4 575.2 291.7 575.5 291.5 575.9 293.6 576.2 285.6 576.6 287.7 576.9 286.1 577.3 289.8 577.7 285.5 578.0 286.6 578.4 289.5 578.7 291.4 579.1 293.6 579.4 296.2 579.8 291.9 580.1 295.9 580.5 295.7 580.8 302.8 581.2 296.9 581.6 301.0 581.9 299.3 582.3 294.7 582.6 296.3 583.0 301.6 583.3 297.3 583.7 306.1 584.0 302.6 584.4 304.1 584.7 299.1 585.1 296.7 585.5 292.3 585.8 303.4 586.2 291.1 586.5 293.9 586.9 296.7 587.2 295.5 587.6 291.2 587.9 293.7 588.3 297.2 588.6 297.0 589.0 299.5 589.4 300.1 589.7 296.3 590.1 300.0 590.4 301.4 590.8 300.0 591.1 297.5 591.5 301.7 591.8 304.8 592.2 302.2 592.5 301.6 592.9 305.8 593.3 302.6 593.6 314.5 594.0 302.6 594.3 303.5 594.7 305.7 595.0 310.5 595.4 315.0 595.7 311.8 596.1 314.9 596.5 320.2 596.8 312.4 597.2 315.9 597.5 311.3 597.9 311.3 598.2 313.2 598.6 315.1 598.9 304.7 599.3 312.0 599.6 311.8 600.0 308.5 600.4 306.5 600.7 311.0 601.1 305.4 601.4 299.1 601.8 302.0 602.1 304.8 602.5 304.1 602.8 309.0 603.2 314.6 603.5 315.9 603.9 317.2 604.3 315.7 604.6 320.3 605.0 330.0 605.3 317.5 605.7 314.7 606.0 313.1 606.4 312.7 606.7 311.9 607.1 314.6 607.4 318.4 607.8 312.8 608.2 322.8 608.5 319.6 608.9 318.1 609.2 315.2 609.6 314.4 609.9 314.0 610.3 318.3 610.6 320.1 611.0 318.5 611.3 318.4 611.7 311.2 612.1 311.7 612.4 310.2 612.8 315.6 613.1 320.1 613.5 315.9 613.8 315.6 614.2 316.9 614.5 311.6 614.9 316.3 615.2 321.9 615.6 314.9 616.0 315.1 616.3 320.3 616.7 313.6 617.0 322.9 617.4 316.8 617.7 327.3 618.1 319.3 618.4 319.9 618.8 323.5 619.1 324.9 619.5 330.9 619.9 328.9 620.2 325.1 620.6 333.8 620.9 325.1 621.3 324.8 621.6 323.0 622.0 330.2 622.3 329.1 622.7 328.1 623.1 330.7 623.4 333.3 623.8 333.4 624.1 329.8 624.5 340.0 624.8 325.1 625.2 329.8 625.5 325.6 625.9 324.3 626.2 328.2 626.6 327.4 627.0 333.0 627.3 336.0 627.7 329.3 628.0 332.3 628.4 327.4 628.7 326.7 629.1 328.9 629.4 329.1 629.8 326.5 630.1 324.2 630.5 331.0 630.9 330.1 631.2 322.4 631.6 323.7 631.9 323.6 632.3 328.4 632.6 328.1 633.0 321.6 633.3 331.4 633.7 335.0 634.0 335.3 634.4 337.3 634.8 336.7 635.1 343.1 635.5 337.3 635.8 336.8 636.2 331.6 636.5 334.7 636.9 326.5 637.2 328.3 637.6 330.3 637.9 330.6 638.3 332.2 638.7 330.7 639.0 328.3 639.4 328.1 639.7 337.6 640.1 340.4 640.4 330.9 640.8 330.5 641.1 329.9 641.5 327.2 641.8 324.1 642.2 333.9 642.6 332.5 642.9 333.1 643.3 338.0 643.6 335.8 644.0 332.4 644.3 332.2 644.7 328.3 645.0 333.4 645.4 324.6 645.8 326.4 646.1 335.5 646.5 331.2 646.8 331.2 647.2 325.5 647.5 325.4 647.9 323.5 648.2 329.4 648.6 331.2 648.9 336.1 649.3 330.0 649.7 335.8 650.0 334.4 650.4 332.1 650.7 335.7 651.1 332.2 651.4 333.3 651.8 334.9 652.1 330.0 652.5 338.9 652.8 340.7 653.2 339.6 653.6 340.0 653.9 339.2 654.3 344.0 654.6 343.7 655.0 343.8 655.3 335.9 655.7 338.6 656.0 340.2 656.4 340.0 656.7 336.8 657.1 333.4 657.5 333.9 657.8 335.4 658.2 329.6 658.5 334.5 658.9 337.1 659.2 340.3 659.6 339.4 659.9 335.8 660.3 335.7 660.6 342.1 661.0 340.7 661.4 338.6 661.7 337.8 662.1 336.6 662.4 344.6 662.8 340.5 663.1 344.2 663.5 350.9 663.8 351.9 664.2 339.3 664.5 338.4 664.9 340.7 665.3 341.1 665.6 337.0 666.0 327.7 666.3 334.0 666.7 327.6 667.0 334.4 667.4 339.6 667.7 347.3 668.1 343.3 668.4 346.5 668.8 342.7 669.2 342.6 669.5 334.7 669.9 341.6 670.2 337.5 670.6 331.7 670.9 336.4 671.3 339.9 671.6 336.9 672.0 338.3 672.4 343.2 672.7 334.6 673.1 331.8 673.4 333.9 673.8 331.7 674.1 337.0 674.5 337.5 674.8 338.6 675.2 348.0 675.5 342.9 675.9 348.6 676.3 341.1 676.6 342.2 677.0 338.7 677.3 335.8 677.7 335.9 678.0 334.9 678.4 337.0 678.7 343.2 679.1 336.5 679.4 334.8 679.8 340.1 680.2 345.9 680.5 336.6 680.9 337.8 681.2 340.2 681.6 345.4 681.9 339.6 682.3 339.1 682.6 342.3 683.0 342.0 683.3 341.2 683.7 341.1 684.1 336.8 684.4 336.5 684.8 330.1 685.1 337.7 685.5 348.0 685.8 345.6 686.2 342.0 686.5 346.8 686.9 340.1 687.2 349.4 687.6 349.6 688.0 348.2 688.3 348.4 688.7 347.4 689.0 346.4 689.4 348.1 689.7 344.6 690.1 345.3 690.4 344.7 690.8 337.5 691.1 354.0 691.5 343.0 691.9 344.5 692.2 342.1 692.6 351.5 692.9 340.7 693.3 339.1 693.6 335.2 694.0 338.0 694.3 337.9 694.7 334.6 695.0 335.2 695.4 338.9 695.8 338.5 696.1 340.0 696.5 341.4 696.8 349.6 697.2 345.2 697.5 343.8 697.9 348.1 698.2 346.1 698.6 340.6 699.0 343.3 699.3 336.3 699.7 340.0 700.0 340.0 700.4 345.8 700.7 339.4 701.1 341.4 701.4 345.0 701.8 342.8 702.1 342.1 702.5 348.3 702.9 346.3 703.2 343.2 703.6 339.8 703.9 346.4 704.3 344.8 704.6 351.9 705.0 343.9 705.3 349.0 705.7 347.0 706.0 348.8 706.4 349.7 706.8 346.8 707.1 344.5 707.5 340.1 707.8 341.7 708.2 340.6 708.5 341.1 708.9 337.8 709.2 345.3 709.6 340.7 709.9 358.9 710.3 353.8 710.7 352.0 711.0 347.4 711.4 346.4 711.7 342.8 712.1 344.0 712.4 344.7 712.8 348.9 713.1 349.9 713.5 346.4 713.8 347.7 714.2 350.5 714.6 349.1 714.9 341.9 715.3 337.7 715.6 343.7 716.0 340.3 716.3 349.4 716.7 344.2 717.0 349.0 717.4 345.2 717.7 353.6 718.1 347.9 718.5 341.6 718.8 343.0 719.2 347.2 719.5 350.2 719.9 348.3 720.2 352.6 720.6 345.8 720.9 341.8 721.3 340.3 721.7 344.5 722.0 346.8 722.4 351.1 722.7 352.2 723.1 353.8 723.4 350.5 723.8 356.3 724.1 345.6 724.5 343.7 724.8 341.7 725.2 343.2 725.6 342.6 725.9 347.8 726.3 346.7 726.6 345.6 727.0 347.3 727.3 340.4 727.7 339.1 728.0 342.0 728.4 340.8 728.7 339.3 729.1 340.7 729.5 346.5 729.8 342.9 730.2 341.0 730.5 344.7 730.9 345.6 731.2 345.7 731.6 344.7 731.9 339.4 732.3 337.9 732.6 344.2 733.0 344.0 733.4 339.8 733.7 340.7 734.1 345.4 734.4 341.1 734.8 345.4 735.1 349.5 735.5 342.4 735.8 349.1 736.2 351.0 736.5 349.0 736.9 359.5 737.3 352.2 737.6 352.0 738.0 347.1 738.3 345.3 738.7 346.7 739.0 351.7 739.4 355.4 739.7 355.4 740.1 348.1 740.4 349.5 740.8 349.2 741.2 350.3 741.5 356.0 741.9 358.0 742.2 347.8 742.6 352.6 742.9 347.4 743.3 346.6 743.6 347.9 744.0 347.0 744.3 342.6 744.7 345.6 745.1 341.5 745.4 346.1 745.8 347.2 746.1 347.3 746.5 351.5 746.8 345.5 747.2 355.0 747.5 350.7 747.9 350.3 748.3 349.9 748.6 354.5 749.0 349.4 749.3 350.3 749.7 342.9 750.0 349.5 750.4 349.9 750.7 352.5 751.1 353.5 751.4 349.1 751.8 346.0 752.2 352.0 752.5 347.4 752.9 343.6 753.2 344.7 753.6 349.6 753.9 357.3 754.3 351.8 754.6 354.9 755.0 356.4 755.3 357.7 755.7 349.4 756.1 350.1 756.4 347.8 756.8 351.3 757.1 351.2 757.5 348.7 757.8 343.7 758.2 349.6 758.5 348.5 758.9 347.0 759.2 352.9 759.6 352.0 760.0 350.8 760.3 352.1 760.7 357.3 761.0 348.7 761.4 343.3 761.7 352.7 762.1 354.1 762.4 357.5 762.8 358.0 763.1 353.2 763.5 356.9 763.9 352.0 764.2 356.5 764.6 351.3 764.9 355.4 765.3 358.3 765.6 354.2 766.0 357.8 766.3 350.3 766.7 351.8 767.0 348.2 767.4 350.4 767.8 354.2 768.1 354.1 768.5 354.2 768.8 355.4 769.2 358.2 769.5 360.4 769.9 358.5 770.2 360.5 770.6 365.0 771.0 362.6 771.3 361.2 771.7 357.2 772.0 355.8 772.4 352.5 772.7 350.7 773.1 351.1 773.4 359.4 773.8 340.3 774.1 344.9 774.5 344.9 774.9 349.9 775.2 353.0 775.6 350.1 775.9 351.1 776.3 350.9 776.6 352.8 777.0 350.2 777.3 350.1 777.7 350.9 778.0 355.0 778.4 359.5 778.8 354.7 779.1 355.0 779.5 357.0 779.8 351.9 780.2 359.4 780.5 349.4 780.9 348.6 781.2 343.1 781.6 345.5 781.9 347.7 782.3 348.8 782.7 353.7 783.0 347.3" stroke="#F07A2A"/>
<path d="M57.0 347.4 57.3 343.7 57.7 338.2 58.1 340.5 58.4 336.4 58.8 331.2 59.1 343.0 59.5 344.3 59.8 338.8 60.2 339.2 60.5 338.2 60.9 338.6 61.2 340.0 61.6 348.3 62.0 338.3 62.3 339.1 62.7 342.5 63.0 345.1 63.4 336.5 63.7 337.7 64.1 336.2 64.4 333.4 64.8 339.4 65.1 344.9 65.5 342.7 65.9 340.5 66.2 338.4 66.6 334.2 66.9 334.3 67.3 339.4 67.6 344.1 68.0 346.9 68.3 348.4 68.7 340.7 69.0 339.2 69.4 339.8 69.8 337.5 70.1 340.1 70.5 335.7 70.8 345.0 71.2 345.3 71.5 350.3 71.9 342.1 72.2 339.7 72.6 334.0 73.0 338.3 73.3 337.8 73.7 339.7 74.0 335.7 74.4 336.2 74.7 335.7 75.1 335.4 75.4 332.5 75.8 333.6 76.1 330.9 76.5 330.5 76.9 332.7 77.2 332.7 77.6 332.7 77.9 334.3 78.3 339.9 78.6 333.5 79.0 336.6 79.3 337.2 79.7 340.1 80.0 338.0 80.4 333.0 80.8 343.2 81.1 340.3 81.5 336.1 81.8 334.9 82.2 340.1 82.5 324.4 82.9 328.7 83.2 331.5 83.6 341.5 83.9 335.0 84.3 341.4 84.7 340.0 85.0 341.7 85.4 341.3 85.7 341.2 86.1 338.0 86.4 338.9 86.8 331.5 87.1 331.4 87.5 330.5 87.8 335.4 88.2 335.2 88.6 334.1 88.9 335.3 89.3 331.8 89.6 334.6 90.0 340.6 90.3 334.9 90.7 339.3 91.0 338.3 91.4 337.3 91.7 335.2 92.1 340.2 92.5 342.1 92.8 331.3 93.2 336.9 93.5 330.8 93.9 336.2 94.2 338.5 94.6 338.6 94.9 337.0 95.3 335.4 95.7 330.7 96.0 332.9 96.4 333.9 96.7 333.1 97.1 329.1 97.4 327.6 97.8 329.5 98.1 327.3 98.5 329.4 98.8 339.6 99.2 338.2 99.6 330.0 99.9 328.9 100.3 327.9 100.6 338.8 101.0 334.2 101.3 333.8 101.7 334.7 102.0 337.2 102.4 340.5 102.7 346.2 103.1 333.4 103.5 337.8 103.8 341.9 104.2 342.5 104.5 333.2 104.9 330.2 105.2 330.6 105.6 323.0 105.9 330.2 106.3 324.3 106.6 322.5 107.0 321.8 107.4 331.1 107.7 336.5 108.1 323.7 108.4 330.8 108.8 339.4 109.1 336.7 109.5 342.2 109.8 343.5 110.2 339.3 110.5 335.3 110.9 333.2 111.3 328.6 111.6 326.4 112.0 329.2 112.3 325.4 112.7 338.5 113.0 330.5 113.4 330.6 113.7 329.0 114.1 332.4 114.4 333.6 114.8 327.8 115.2 338.7 115.5 331.1 115.9 334.3 116.2 332.1 116.6 333.8 116.9 331.3 117.3 333.3 117.6 329.2 118.0 331.4 118.3 327.4 118.7 330.0 119.1 327.9 119.4 334.5 119.8 329.9 120.1 327.0 120.5 328.9 120.8 331.3 121.2 335.6 121.5 334.5 121.9 330.1 122.3 332.7 122.6 327.5 123.0 331.0 123.3 332.2 123.7 329.4 124.0 335.8 124.4 334.6 124.7 337.5 125.1 332.2 125.4 329.5 125.8 327.9 126.2 329.3 126.5 320.6 126.9 326.0 127.2 330.6 127.6 330.2 127.9 324.7 128.3 329.7 128.6 326.6 129.0 335.5 129.3 339.8 129.7 335.4 130.1 341.2 130.4 328.5 130.8 318.2 131.1 320.4 131.5 319.8 131.8 328.1 132.2 321.8 132.5 325.8 132.9 324.7 133.2 322.6 133.6 325.4 134.0 325.6 134.3 322.4 134.7 332.8 135.0 328.2 135.4 320.9 135.7 325.8 136.1 321.1 136.4 322.5 136.8 320.9 137.1 322.7 137.5 325.8 137.9 332.0 138.2 327.0 138.6 321.4 138.9 325.2 139.3 315.4 139.6 317.9 140.0 316.8 140.3 322.7 140.7 319.8 141.0 314.2 141.4 310.6 141.8 323.8 142.1 318.3 142.5 327.1 142.8 319.4 143.2 324.7 143.5 321.9 143.9 323.1 144.2 324.4 144.6 325.9 145.0 327.4 145.3 319.4 145.7 314.4 146.0 320.6 146.4 321.2 146.7 322.4 147.1 318.5 147.4 321.1 147.8 321.5 148.1 323.3 148.5 319.7 148.9 319.9 149.2 324.6 149.6 320.6 149.9 319.1 150.3 316.5 150.6 312.3 151.0 313.3 151.3 319.1 151.7 317.9 152.0 326.8 152.4 322.9 152.8 323.1 153.1 325.1 153.5 324.1 153.8 319.6 154.2 324.2 154.5 317.0 154.9 318.9 155.2 321.9 155.6 325.7 155.9 327.1 156.3 318.9 156.7 322.6 157.0 309.6 157.4 315.2 157.7 316.6 158.1 322.8 158.4 327.8 158.8 325.2 159.1 320.2 159.5 315.1 159.8 311.8 160.2 309.9 160.6 307.4 160.9 311.2 161.3 315.4 161.6 309.4 162.0 313.8 162.3 317.5 162.7 318.3 163.0 326.5 163.4 320.1 163.7 319.6 164.1 315.1 164.5 319.9 164.8 321.9 165.2 315.5 165.5 321.1 165.9 319.4 166.2 319.3 166.6 321.5 166.9 318.4 167.3 325.5 167.6 323.9 168.0 318.4 168.4 317.1 168.7 313.4 169.1 323.6 169.4 316.9 169.8 319.1 170.1 320.3 170.5 314.3 170.8 320.2 171.2 319.7 171.6 318.6 171.9 322.7 172.3 316.5 172.6 310.3 173.0 311.1 173.3 311.5 173.7 317.6 174.0 312.6 174.4 324.0 174.7 316.9 175.1 319.9 175.5 316.7 175.8 315.7 176.2 315.3 176.5 311.1 176.9 313.3 177.2 311.6 177.6 312.6 177.9 318.4 178.3 324.8 178.6 319.9 179.0 317.7 179.4 315.9 179.7 309.1 180.1 317.6 180.4 312.3 180.8 310.7 181.1 314.0 181.5 313.0 181.8 311.0 182.2 314.3 182.5 312.2 182.9 322.1 183.3 307.7 183.6 318.5 184.0 316.7 184.3 312.3 184.7 311.3 185.0 313.0 185.4 313.0 185.7 308.1 186.1 315.7 186.4 317.6 186.8 316.6 187.2 316.4 187.5 311.1 187.9 310.4 188.2 318.3 188.6 310.5 188.9 317.1 189.3 315.1 189.6 309.7 190.0 314.9 190.3 312.3 190.7 309.7 191.1 313.7 191.4 305.3 191.8 306.0 192.1 305.5 192.5 301.6 192.8 303.8 193.2 301.9 193.5 304.0 193.9 306.9 194.2 307.8 194.6 309.2 195.0 311.7 195.3 310.0 195.7 310.2 196.0 307.8 196.4 303.6 196.7 308.5 197.1 300.2 197.4 308.0 197.8 299.0 198.2 302.4 198.5 302.4 198.9 300.4 199.2 302.7 199.6 303.9 199.9 305.3 200.3 304.8 200.6 303.2 201.0 308.3 201.3 309.1 201.7 307.5 202.1 309.6 202.4 312.3 202.8 304.5 203.1 299.0 203.5 305.7 203.8 300.0 204.2 297.8 204.5 298.9 204.9 293.8 205.2 297.7 205.6 294.8 206.0 298.3 206.3 296.3 206.7 293.8 207.0 294.5 207.4 298.7 207.7 294.1 208.1 297.0 208.4 293.7 208.8 295.1 209.1 294.2 209.5 307.3 209.9 301.3 210.2 298.1 210.6 303.7 210.9 295.5 211.3 293.3 211.6 298.0 212.0 296.5 212.3 287.9 212.7 299.2 213.0 291.4 213.4 294.0 213.8 290.9 214.1 291.3 214.5 291.1 214.8 291.3 215.2 293.6 215.5 297.4 215.9 291.4 216.2 294.8 216.6 296.1 216.9 294.2 217.3 293.9 217.7 301.6 218.0 296.7 218.4 296.7 218.7 297.1 219.1 300.9 219.4 298.8 219.8 301.5 220.1 299.5 220.5 295.6 220.9 297.4 221.2 293.4 221.6 294.8 221.9 294.7 222.3 290.4 222.6 294.9 223.0 292.8 223.3 290.9 223.7 297.0 224.0 294.8 224.4 284.8 224.8 287.4 225.1 289.8 225.5 296.6 225.8 297.3 226.2 300.8 226.5 296.8 226.9 295.0 227.2 295.4 227.6 286.1 227.9 291.7 228.3 289.1 228.7 288.7 229.0 293.1 229.4 289.0 229.7 294.7 230.1 289.2 230.4 287.1 230.8 286.9 231.1 296.7 231.5 287.9 231.8 288.4 232.2 291.4 232.6 290.2 232.9 288.8 233.3 289.2 233.6 292.7 234.0 292.8 234.3 290.3 234.7 286.5 235.0 300.2 235.4 291.9 235.7 290.2 236.1 293.4 236.5 289.4 236.8 289.3 237.2 284.7 237.5 280.5 237.9 282.8 238.2 286.3 238.6 279.5 238.9 292.0 239.3 289.8 239.6 288.3 240.0 289.4 240.4 284.7 240.7 278.1 241.1 277.5 241.4 277.4 241.8 270.8 242.1 275.1 242.5 276.8 242.8 277.8 243.2 278.8 243.5 279.2 243.9 284.0 244.3 270.8 244.6 273.0 245.0 270.7 245.3 267.5 245.7 269.0 246.0 270.2 246.4 278.1 246.7 280.8 247.1 282.8 247.5 279.4 247.8 284.6 248.2 286.7 248.5 281.0 248.9 283.0 249.2 280.6 249.6 279.9 249.9 279.3 250.3 280.9 250.6 273.6 251.0 276.3 251.4 276.5 251.7 273.7 252.1 274.8 252.4 280.4 252.8 273.9 253.1 267.6 253.5 267.0 253.8 269.0 254.2 269.7 254.5 279.6 254.9 270.9 255.3 270.0 255.6 274.3 256.0 280.8 256.3 276.6 256.7 273.3 257.0 278.6 257.4 272.7 257.7 272.4 258.1 272.7 258.4 273.0 258.8 273.7 259.2 276.7 259.5 277.5 259.9 274.5 260.2 275.4 260.6 274.0 260.9 271.4 261.3 275.0 261.6 272.0 262.0 263.2 262.3 267.9 262.7 270.0 263.1 267.2 263.4 268.8 263.8 268.7 264.1 265.0 264.5 269.9 264.8 277.5 265.2 275.0 265.5 274.1 265.9 269.1 266.2 266.6 266.6 270.9 267.0 274.4 267.3 268.5 267.7 276.0 268.0 272.0 268.4 267.9 268.7 269.5 269.1 272.9 269.4 268.4 269.8 266.8 270.2 269.4 270.5 263.0 270.9 263.1 271.2 259.4 271.6 263.0 271.9 266.3 272.3 261.1 272.6 260.7 273.0 267.8 273.3 266.8 273.7 263.6 274.1 261.2 274.4 269.7 274.8 261.6 275.1 266.6 275.5 264.5 275.8 266.1 276.2 258.6 276.5 266.1 276.9 262.7 277.2 259.1 277.6 266.5 278.0 262.5 278.3 259.2 278.7 258.3 279.0 261.1 279.4 260.0 279.7 259.4 280.1 249.8 280.4 260.0 280.8 256.8 281.1 255.3 281.5 254.5 281.9 261.7 282.2 257.3 282.6 264.9 282.9 260.9 283.3 264.0 283.6 266.6 284.0 260.6 284.3 261.8 284.7 259.4 285.0 253.7 285.4 265.8 285.8 260.1 286.1 262.7 286.5 259.4 286.8 261.7 287.2 268.6 287.5 255.6 287.9 256.8 288.2 259.0 288.6 258.8 288.9 264.6 289.3 256.4 289.7 262.5 290.0 254.2 290.4 259.1 290.7 254.9 291.1 251.3 291.4 249.6 291.8 253.8 292.1 251.4 292.5 256.3 292.8 255.0 293.2 256.2 293.6 260.9 293.9 249.9 294.3 256.1 294.6 250.1 295.0 245.6 295.3 245.7 295.7 247.9 296.0 255.8 296.4 253.5 296.8 251.9 297.1 249.7 297.5 250.2 297.8 246.2 298.2 248.6 298.5 255.7 298.9 250.9 299.2 242.4 299.6 248.0 299.9 246.3 300.3 252.7 300.7 250.0 301.0 244.2 301.4 254.5 301.7 251.8 302.1 244.8 302.4 250.1 302.8 247.7 303.1 240.6 303.5 246.9 303.8 248.7 304.2 250.8 304.6 253.6 304.9 252.9 305.3 249.8 305.6 250.8 306.0 247.6 306.3 250.6 306.7 249.6 307.0 254.5 307.4 250.6 307.7 252.0 308.1 247.9 308.5 248.5 308.8 249.6 309.2 252.1 309.5 256.6 309.9 241.8 310.2 248.5 310.6 250.5 310.9 241.3 311.3 242.4 311.6 252.4 312.0 240.4 312.4 239.8 312.7 243.7 313.1 237.9 313.4 241.3 313.8 240.5 314.1 242.6 314.5 239.0 314.8 236.7 315.2 232.1 315.5 243.2 315.9 240.8 316.3 243.1 316.6 240.8 317.0 241.7 317.3 236.2 317.7 244.3 318.0 242.0 318.4 245.8 318.7 246.9 319.1 245.0 319.4 242.3 319.8 240.5 320.2 244.8 320.5 246.4 320.9 235.9 321.2 246.1 321.6 235.9 321.9 237.0 322.3 238.1 322.6 243.3 323.0 240.9 323.4 238.8 323.7 236.7 324.1 233.5 324.4 233.9 324.8 230.3 325.1 235.2 325.5 238.8 325.8 240.9 326.2 232.2 326.5 231.6 326.9 242.5 327.3 246.2 327.6 232.9 328.0 234.3 328.3 235.5 328.7 240.2 329.0 240.8 329.4 246.0 329.7 242.8 330.1 239.7 330.4 236.1 330.8 233.0 331.2 232.6 331.5 233.0 331.9 229.1 332.2 235.9 332.6 235.9 332.9 236.7 333.3 237.1 333.6 239.5 334.0 237.3 334.3 234.8 334.7 236.5 335.1 233.7 335.4 231.6 335.8 230.1 336.1 233.1 336.5 233.8 336.8 240.7 337.2 237.5 337.5 230.8 337.9 235.5 338.2 232.8 338.6 229.0 339.0 232.1 339.3 237.3 339.7 236.4 340.0 234.3 340.4 231.9 340.7 240.9 341.1 232.1 341.4 234.1 341.8 235.2 342.1 229.1 342.5 230.0 342.9 231.6 343.2 230.9 343.6 234.1 343.9 226.1 344.3 231.8 344.6 228.9 345.0 232.6 345.3 231.2 345.7 233.0 346.1 233.0 346.4 227.6 346.8 237.0 347.1 231.1 347.5 228.0 347.8 226.9 348.2 232.3 348.5 231.8 348.9 238.4 349.2 232.2 349.6 233.4 350.0 234.1 350.3 225.1 350.7 227.8 351.0 227.7 351.4 227.2 351.7 226.7 352.1 226.2 352.4 220.6 352.8 225.5 353.1 231.3 353.5 227.9 353.9 227.3 354.2 232.7 354.6 229.0 354.9 230.7 355.3 231.8 355.6 231.3 356.0 237.1 356.3 234.2 356.7 225.4 357.0 225.7 357.4 221.7 357.8 225.3 358.1 226.1 358.5 228.1 358.8 233.7 359.2 225.9 359.5 230.6 359.9 230.8 360.2 229.6 360.6 175.4 360.9 135.5 361.3 123.7 361.7 118.6 362.0 118.5 362.4 119.1 362.7 117.1 363.1 116.8 363.4 117.6 363.8 114.4 364.1 117.6 364.5 123.6 364.8 126.9 365.2 117.5 365.6 125.0 365.9 129.8 366.3 125.8 366.6 124.7 367.0 130.7 367.3 126.2 367.7 120.8 368.0 123.6 368.4 125.5 368.7 126.1 369.1 123.4 369.5 122.7 369.8 127.6 370.2 124.8 370.5 127.5 370.9 127.9 371.2 121.4 371.6 121.6 371.9 120.2 372.3 122.3 372.7 117.7 373.0 131.4 373.4 123.0 373.7 128.2 374.1 122.3 374.4 129.6 374.8 118.5 375.1 124.5 375.5 121.3 375.8 131.6 376.2 123.7 376.6 133.5 376.9 121.3 377.3 126.0 377.6 122.1 378.0 126.8 378.3 128.0 378.7 126.7 379.0 129.5 379.4 123.6 379.7 122.5 380.1 121.2 380.5 121.2 380.8 127.8 381.2 132.2 381.5 129.2 381.9 129.0 382.2 126.8 382.6 122.6 382.9 123.0 383.3 127.7 383.6 125.2 384.0 121.3 384.4 130.6 384.7 115.2 385.1 124.3 385.4 124.4 385.8 116.5 386.1 122.2 386.5 128.0 386.8 123.0 387.2 120.7 387.5 115.6 387.9 122.3 388.3 121.2 388.6 128.2 389.0 120.6 389.3 119.3 389.7 119.4 390.0 124.1 390.4 122.5 390.7 124.5 391.1 120.3 391.4 121.7 391.8 119.2 392.2 127.1 392.5 118.5 392.9 129.8 393.2 122.0 393.6 123.8 393.9 118.2 394.3 120.7 394.6 121.7 395.0 126.7 395.4 125.2 395.7 124.6 396.1 123.3 396.4 136.2 396.8 124.1 397.1 122.7 397.5 125.7 397.8 122.3 398.2 127.0 398.5 122.8 398.9 127.0 399.3 129.0 399.6 122.6 400.0 123.2 400.3 123.3 400.7 130.5 401.0 128.2 401.4 127.8 401.7 127.5 402.1 120.8 402.4 131.4 402.8 120.1 403.2 116.4 403.5 124.0 403.9 117.4 404.2 120.0 404.6 124.5 404.9 127.6 405.3 127.6 405.6 125.4 406.0 133.7 406.3 119.0 406.7 125.3 407.1 123.7 407.4 121.5 407.8 118.5 408.1 117.1 408.5 128.5 408.8 124.3 409.2 122.5 409.5 131.7 409.9 121.6 410.2 119.9 410.6 128.6 411.0 122.9 411.3 125.7 411.7 119.1 412.0 121.0 412.4 130.0 412.7 123.0 413.1 126.1 413.4 127.8 413.8 124.3 414.1 121.9 414.5 121.2 414.9 125.0 415.2 122.2 415.6 124.9 415.9 120.4 416.3 120.6 416.6 121.1 417.0 116.7 417.3 125.3 417.7 119.7 418.0 124.5 418.4 132.9 418.8 135.3 419.1 132.6 419.5 121.2 419.8 121.0 420.2 133.8 420.5 131.8 420.9 122.3 421.2 120.0 421.6 128.2 422.0 126.2 422.3 118.8 422.7 126.8 423.0 120.6 423.4 129.2 423.7 123.0 424.1 129.3 424.4 125.1 424.8 127.2 425.1 125.4 425.5 126.9 425.9 124.9 426.2 124.7 426.6 130.7 426.9 123.8 427.3 121.1 427.6 121.5 428.0 118.0 428.3 121.9 428.7 118.5 429.0 124.8 429.4 122.6 429.8 118.0 430.1 123.9 430.5 128.1 430.8 132.0 431.2 127.3 431.5 124.0 431.9 122.7 432.2 127.3 432.6 134.0 432.9 131.1 433.3 118.9 433.7 130.8 434.0 122.4 434.4 118.9 434.7 115.4 435.1 116.0 435.4 129.5 435.8 122.8 436.1 126.3 436.5 121.5 436.8 122.0 437.2 125.7 437.6 123.0 437.9 125.7 438.3 120.3 438.6 124.5 439.0 114.4 439.3 113.5 439.7 128.0 440.0 122.7 440.4 121.1 440.7 119.6 441.1 122.7 441.5 132.1 441.8 125.1 442.2 121.7 442.5 120.9 442.9 116.2 443.2 122.2 443.6 122.8 443.9 121.8 444.3 123.1 444.6 118.9 445.0 126.1 445.4 121.6 445.7 123.4 446.1 123.3 446.4 128.0 446.8 121.8 447.1 123.5 447.5 125.7 447.8 128.7 448.2 121.4 448.6 116.1 448.9 128.0 449.3 125.9 449.6 128.8 450.0 122.6 450.3 132.4 450.7 124.3 451.0 122.0 451.4 121.6 451.7 123.2 452.1 125.9 452.5 121.9 452.8 133.0 453.2 126.4 453.5 118.3 453.9 121.4 454.2 119.4 454.6 132.4 454.9 127.7 455.3 123.6 455.6 128.6 456.0 116.5 456.4 124.1 456.7 124.6 457.1 121.7 457.4 122.6 457.8 126.9 458.1 127.0 458.5 126.2 458.8 119.1 459.2 131.2 459.5 125.0 459.9 119.8 460.3 126.5 460.6 119.8 461.0 118.7 461.3 118.6 461.7 121.4 462.0 119.6 462.4 122.2 462.7 116.0 463.1 120.6 463.4 125.6 463.8 120.9 464.2 120.8 464.5 119.6 464.9 120.5 465.2 132.9 465.6 116.8 465.9 129.8 466.3 124.1 466.6 123.9 467.0 130.9 467.3 118.8 467.7 123.7 468.1 114.2 468.4 121.3 468.8 123.8 469.1 135.6 469.5 124.8 469.8 124.2 470.2 122.2 470.5 121.1 470.9 116.5 471.3 123.4 471.6 124.5 472.0 116.2 472.3 124.0 472.7 119.4 473.0 115.1 473.4 119.7 473.7 122.8 474.1 128.7 474.4 125.0 474.8 121.9 475.2 126.0 475.5 135.7 475.9 121.2 476.2 131.5 476.6 120.0 476.9 122.9 477.3 127.5 477.6 133.2 478.0 162.3 478.3 224.6 478.7 226.9 479.1 225.3 479.4 228.7 479.8 224.2 480.1 221.1 480.5 225.1 480.8 224.1 481.2 235.7 481.5 229.6 481.9 221.5 482.2 228.5 482.6 227.4 483.0 228.7 483.3 230.4 483.7 237.8 484.0 229.4 484.4 225.8 484.7 226.4 485.1 228.7 485.4 225.7 485.8 222.8 486.1 224.4 486.5 221.5 486.9 224.3 487.2 229.5 487.6 238.5 487.9 242.2 488.3 238.4 488.6 232.7 489.0 231.3 489.3 229.0 489.7 227.4 490.0 226.8 490.4 230.9 490.8 234.2 491.1 235.4 491.5 233.8 491.8 232.4 492.2 228.5 492.5 225.2 492.9 232.2 493.2 223.2 493.6 227.0 493.9 233.3 494.3 236.0 494.7 232.6 495.0 241.1 495.4 237.4 495.7 234.4 496.1 238.6 496.4 237.6 496.8 233.2 497.1 229.9 497.5 236.2 497.9 239.6 498.2 239.1 498.6 237.2 498.9 236.1 499.3 231.7 499.6 243.7 500.0 235.9 500.3 245.1 500.7 245.0 501.0 244.4 501.4 235.7 501.8 237.1 502.1 239.7 502.5 235.5 502.8 232.3 503.2 240.0 503.5 242.2 503.9 242.4 504.2 237.9 504.6 237.4 504.9 242.7 505.3 240.9 505.7 238.3 506.0 253.0 506.4 241.4 506.7 242.0 507.1 250.2 507.4 242.1 507.8 237.9 508.1 237.9 508.5 237.2 508.8 243.1 509.2 244.1 509.6 237.1 509.9 242.3 510.3 241.0 510.6 241.3 511.0 237.1 511.3 247.3 511.7 238.7 512.0 242.5 512.4 240.3 512.7 247.4 513.1 248.6 513.5 243.9 513.8 247.0 514.2 248.4 514.5 245.5 514.9 247.2 515.2 250.4 515.6 246.1 515.9 250.2 516.3 249.5 516.6 251.7 517.0 244.0 517.4 246.3 517.7 241.9 518.1 237.6 518.4 243.1 518.8 240.9 519.1 247.9 519.5 246.2 519.8 243.2 520.2 240.1 520.6 235.5 520.9 241.2 521.3 237.4 521.6 239.6 522.0 246.0 522.3 242.4 522.7 237.9 523.0 243.7 523.4 251.6 523.7 250.4 524.1 250.4 524.5 249.2 524.8 247.4 525.2 245.2 525.5 248.1 525.9 251.3 526.2 242.3 526.6 247.4 526.9 255.7 527.3 253.4 527.6 255.9 528.0 254.9 528.4 250.8 528.7 249.3 529.1 248.2 529.4 240.7 529.8 244.0 530.1 248.5 530.5 248.1 530.8 249.9 531.2 241.5 531.5 241.6 531.9 244.5 532.3 244.7 532.6 240.4 533.0 245.1 533.3 244.0 533.7 244.5 534.0 250.9 534.4 246.8 534.7 251.2 535.1 247.8 535.4 247.9 535.8 250.4 536.2 251.2 536.5 252.3 536.9 258.7 537.2 252.7 537.6 258.6 537.9 258.4 538.3 257.9 538.6 258.3 539.0 255.8 539.3 257.0 539.7 256.6 540.1 255.3 540.4 252.5 540.8 254.1 541.1 252.5 541.5 251.7 541.8 247.9 542.2 250.7 542.5 249.6 542.9 256.4 543.2 251.5 543.6 252.0 544.0 252.2 544.3 254.3 544.7 259.1 545.0 257.0 545.4 261.1 545.7 258.3 546.1 260.5 546.4 254.8 546.8 263.4 547.2 263.1 547.5 258.9 547.9 257.8 548.2 257.1 548.6 262.5 548.9 257.0 549.3 259.5 549.6 263.5 550.0 259.0 550.3 255.2 550.7 257.9 551.1 259.1 551.4 253.9 551.8 257.5 552.1 261.1 552.5 263.8 552.8 257.5 553.2 256.1 553.5 257.1 553.9 254.3 554.2 253.5 554.6 258.5 555.0 263.2 555.3 257.5 555.7 261.9 556.0 259.4 556.4 261.7 556.7 261.8 557.1 263.3 557.4 266.1 557.8 260.4 558.1 253.5 558.5 259.4 558.9 261.3 559.2 259.2 559.6 257.0 559.9 264.0 560.3 257.3 560.6 264.4 561.0 261.7 561.3 258.0 561.7 253.6 562.0 253.9 562.4 258.8 562.8 259.0 563.1 264.3 563.5 264.8 563.8 262.3 564.2 265.9 564.5 261.6 564.9 262.0 565.2 260.2 565.6 265.3 565.9 264.4 566.3 266.8 566.7 266.0 567.0 270.3 567.4 270.9 567.7 268.4 568.1 268.7 568.4 265.8 568.8 260.3 569.1 259.4 569.5 261.9 569.8 262.9 570.2 261.7 570.6 267.9 570.9 270.0 571.3 269.1 571.6 269.5 572.0 272.2 572.3 272.9 572.7 274.7 573.0 271.7 573.4 272.3 573.8 273.1 574.1 278.4 574.5 271.0 574.8 273.7 575.2 273.8 575.5 272.8 575.9 273.9 576.2 267.4 576.6 271.6 576.9 268.8 577.3 270.9 577.7 266.4 578.0 267.7 578.4 269.7 578.7 271.3 579.1 271.9 579.4 275.8 579.8 272.0 580.1 275.1 580.5 275.7 580.8 283.1 581.2 278.1 581.6 280.7 581.9 280.0 582.3 277.2 582.6 278.0 583.0 284.2 583.3 277.9 583.7 284.9 584.0 281.9 584.4 281.0 584.7 276.2 585.1 274.2 585.5 271.3 585.8 280.8 586.2 270.0 586.5 272.6 586.9 273.6 587.2 272.4 587.6 270.8 587.9 274.3 588.3 276.7 588.6 275.1 589.0 276.8 589.4 277.0 589.7 273.6 590.1 275.4 590.4 276.5 590.8 276.4 591.1 276.4 591.5 278.8 591.8 281.0 592.2 278.9 592.5 277.1 592.9 282.1 593.3 278.4 593.6 291.0 594.0 279.0 594.3 282.2 594.7 284.4 595.0 286.2 595.4 293.1 595.7 288.0 596.1 288.6 596.5 293.6 596.8 287.7 597.2 288.2 597.5 285.7 597.9 282.9 598.2 287.9 598.6 289.6 598.9 281.7 599.3 286.4 599.6 288.4 600.0 286.7 600.4 282.7 600.7 286.6 601.1 282.0 601.4 279.3 601.8 278.0 602.1 279.4 602.5 278.7 602.8 284.0 603.2 288.2 603.5 291.0 603.9 290.4 604.3 288.0 604.6 294.4 605.0 301.9 605.3 291.0 605.7 284.1 606.0 287.0 606.4 286.9 606.7 284.4 607.1 286.3 607.4 289.3 607.8 288.1 608.2 299.0 608.5 294.4 608.9 294.9 609.2 289.6 609.6 289.5 609.9 287.9 610.3 290.4 610.6 291.0 611.0 293.4 611.3 291.6 611.7 287.8 612.1 286.6 612.4 285.7 612.8 290.1 613.1 292.8 613.5 290.3 613.8 289.2 614.2 292.5 614.5 287.6 614.9 290.5 615.2 297.0 615.6 288.5 616.0 289.3 616.3 292.0 616.7 284.8 617.0 291.2 617.4 287.1 617.7 297.7 618.1 290.4 618.4 291.8 618.8 294.7 619.1 295.3 619.5 302.8 619.9 301.0 620.2 294.8 620.6 304.0 620.9 291.1 621.3 295.3 621.6 291.5 622.0 298.1 622.3 299.2 622.7 300.0 623.1 305.3 623.4 304.0 623.8 308.1 624.1 303.6 624.5 307.4 624.8 296.5 625.2 300.4 625.5 296.3 625.9 293.9 626.2 300.9 626.6 298.6 627.0 305.7 627.3 307.5 627.7 298.9 628.0 297.5 628.4 294.0 628.7 292.6 629.1 297.3 629.4 297.7 629.8 295.2 630.1 295.2 630.5 300.7 630.9 298.9 631.2 295.0 631.6 295.6 631.9 291.9 632.3 295.0 632.6 299.3 633.0 291.7 633.3 301.3 633.7 304.7 634.0 302.1 634.4 303.8 634.8 305.1 635.1 311.6 635.5 307.7 635.8 305.0 636.2 301.9 636.5 304.8 636.9 295.4 637.2 299.0 637.6 298.9 637.9 299.4 638.3 303.4 638.7 300.3 639.0 302.6 639.4 299.5 639.7 308.3 640.1 310.7 640.4 304.1 640.8 302.0 641.1 302.6 641.5 299.2 641.8 297.2 642.2 309.0 642.6 307.8 642.9 306.5 643.3 312.3 643.6 311.3 644.0 305.8 644.3 303.2 644.7 300.5 645.0 305.8 645.4 298.9 645.8 300.8 646.1 305.6 646.5 303.0 646.8 302.4 647.2 299.7 647.5 299.1 647.9 297.5 648.2 303.2 648.6 305.0 648.9 310.8 649.3 307.5 649.7 309.2 650.0 310.7 650.4 309.9 650.7 312.3 651.1 309.4 651.4 309.5 651.8 309.7 652.1 303.5 652.5 311.2 652.8 312.0 653.2 314.6 653.6 316.1 653.9 316.9 654.3 317.1 654.6 317.4 655.0 319.2 655.3 311.0 655.7 314.4 656.0 315.8 656.4 317.2 656.7 311.2 657.1 308.6 657.5 310.3 657.8 311.3 658.2 308.6 658.5 313.4 658.9 317.1 659.2 316.3 659.6 313.5 659.9 310.8 660.3 312.1 660.6 318.9 661.0 320.4 661.4 316.6 661.7 317.1 662.1 312.8 662.4 321.1 662.8 316.3 663.1 318.2 663.5 325.9 663.8 325.1 664.2 315.9 664.5 312.0 664.9 317.8 665.3 315.7 665.6 312.0 666.0 310.2 666.3 311.7 666.7 311.2 667.0 312.7 667.4 316.4 667.7 325.4 668.1 321.7 668.4 323.7 668.8 322.5 669.2 318.0 669.5 313.8 669.9 320.3 670.2 317.7 670.6 311.0 670.9 318.1 671.3 318.2 671.6 320.0 672.0 317.1 672.4 324.0 672.7 314.3 673.1 308.0 673.4 314.9 673.8 313.5 674.1 314.1 674.5 316.6 674.8 316.4 675.2 326.0 675.5 321.3 675.9 329.3 676.3 319.5 676.6 324.1 677.0 315.5 677.3 312.8 677.7 313.8 678.0 313.6 678.4 316.0 678.7 322.0 679.1 315.8 679.4 312.8 679.8 319.2 680.2 328.1 680.5 319.5 680.9 320.8 681.2 320.5 681.6 326.1 681.9 322.8 682.3 324.8 682.6 326.7 683.0 323.4 683.3 322.4 683.7 319.3 684.1 315.6 684.4 314.5 684.8 312.6 685.1 319.8 685.5 331.5 685.8 325.7 686.2 325.6 686.5 324.9 686.9 321.2 687.2 331.5 687.6 332.3 688.0 331.6 688.3 329.3 688.7 330.3 689.0 327.1 689.4 329.6 689.7 329.3 690.1 327.9 690.4 328.3 690.8 320.1 691.1 331.8 691.5 324.2 691.9 323.3 692.2 325.5 692.6 331.3 692.9 323.3 693.3 322.7 693.6 320.2 694.0 321.1 694.3 318.1 694.7 316.0 695.0 316.6 695.4 322.5 695.8 322.5 696.1 322.6 696.5 325.8 696.8 334.5 697.2 327.7 697.5 329.8 697.9 332.5 698.2 330.8 698.6 322.0 699.0 324.8 699.3 315.8 699.7 319.3 700.0 321.7 700.4 328.1 700.7 320.1 701.1 323.3 701.4 328.2 701.8 325.7 702.1 326.3 702.5 329.7 702.9 332.4 703.2 326.2 703.6 326.9 703.9 328.6 704.3 325.5 704.6 331.8 705.0 326.8 705.3 330.0 705.7 331.7 706.0 330.3 706.4 330.7 706.8 329.2 707.1 328.7 707.5 321.6 707.8 325.4 708.2 326.7 708.5 326.6 708.9 324.5 709.2 332.4 709.6 328.2 709.9 343.7 710.3 338.7 710.7 337.1 711.0 331.6 711.4 328.9 711.7 327.3 712.1 326.7 712.4 325.3 712.8 331.4 713.1 332.0 713.5 330.2 713.8 328.7 714.2 329.5 714.6 330.1 714.9 322.2 715.3 321.6 715.6 327.0 716.0 325.8 716.3 334.0 716.7 328.0 717.0 330.8 717.4 327.8 717.7 337.0 718.1 331.3 718.5 327.8 718.8 328.1 719.2 331.7 719.5 334.0 719.9 332.0 720.2 334.0 720.6 330.0 720.9 326.8 721.3 328.5 721.7 330.2 722.0 330.0 722.4 336.1 722.7 334.5 723.1 337.7 723.4 330.8 723.8 337.6 724.1 329.3 724.5 330.6 724.8 327.6 725.2 327.4 725.6 326.8 725.9 328.8 726.3 327.9 726.6 330.5 727.0 330.2 727.3 326.6 727.7 323.2 728.0 324.9 728.4 323.7 728.7 323.5 729.1 323.4 729.5 327.3 729.8 322.6 730.2 324.6 730.5 327.4 730.9 330.0 731.2 330.7 731.6 329.8 731.9 325.7 732.3 321.9 732.6 325.8 733.0 327.9 733.4 324.7 733.7 325.7 734.1 330.1 734.4 327.4 734.8 335.1 735.1 333.3 735.5 332.2 735.8 336.4 736.2 335.8 736.5 336.7 736.9 346.4 737.3 340.2 737.6 338.3 738.0 333.6 738.3 330.0 738.7 334.2 739.0 338.4 739.4 343.0 739.7 340.9 740.1 333.5 740.4 337.5 740.8 332.9 741.2 335.6 741.5 342.3 741.9 345.0 742.2 336.5 742.6 338.6 742.9 335.1 743.3 333.3 743.6 331.2 744.0 332.6 744.3 326.2 744.7 329.7 745.1 323.6 745.4 325.7 745.8 326.9 746.1 326.8 746.5 334.0 746.8 325.8 747.2 338.0 747.5 336.7 747.9 335.9 748.3 333.6 748.6 338.0 749.0 334.7 749.3 336.5 749.7 330.9 750.0 331.4 750.4 330.9 750.7 333.4 751.1 338.8 751.4 334.8 751.8 338.2 752.2 340.5 752.5 338.7 752.9 331.6 753.2 332.3 753.6 333.7 753.9 339.4 754.3 331.1 754.6 338.0 755.0 337.4 755.3 337.7 755.7 331.5 756.1 335.8 756.4 331.4 756.8 337.9 757.1 334.8 757.5 332.9 757.8 331.3 758.2 333.0 758.5 331.8 758.9 333.8 759.2 337.1 759.6 336.9 760.0 336.0 760.3 335.4 760.7 342.2 761.0 333.1 761.4 328.8 761.7 339.9 762.1 340.0 762.4 343.6 762.8 345.5 763.1 342.1 763.5 344.1 763.9 340.4 764.2 341.2 764.6 335.5 764.9 339.6 765.3 345.3 765.6 338.1 766.0 342.4 766.3 335.2 766.7 342.7 767.0 333.1 767.4 339.7 767.8 338.2 768.1 342.6 768.5 342.5 768.8 338.6 769.2 340.5 769.5 345.3 769.9 344.5 770.2 344.4 770.6 351.4 771.0 349.6 771.3 345.4 771.7 344.2 772.0 341.3 772.4 336.8 772.7 331.9 773.1 333.0 773.4 343.3 773.8 324.3 774.1 330.8 774.5 330.2 774.9 334.1 775.2 337.9 775.6 336.8 775.9 338.7 776.3 338.5 776.6 340.7 777.0 340.4 777.3 337.9 777.7 337.9 778.0 340.2 778.4 346.5 778.8 341.2 779.1 340.8 779.5 339.9 779.8 341.6 780.2 341.5 780.5 333.1 780.9 333.7 781.2 331.2 781.6 331.2 781.9 333.5 782.3 338.3 782.7 339.6 783.0 334.2" stroke="#4CC83A"/>
<path d="M57.0 352.3 57.3 348.5 57.7 344.6 58.1 347.5 58.4 340.9 58.8 337.1 59.1 347.1 59.5 348.4 59.8 344.6 60.2 346.8 60.5 343.7 60.9 344.7 61.2 345.9 61.6 347.5 62.0 339.1 62.3 339.5 62.7 344.8 63.0 346.6 63.4 341.7 63.7 346.5 64.1 342.5 64.4 340.9 64.8 347.1 65.1 349.3 65.5 348.3 65.9 347.4 66.2 342.9 66.6 341.1 66.9 339.3 67.3 341.1 67.6 343.5 68.0 344.2 68.3 350.3 68.7 339.8 69.0 338.5 69.4 341.5 69.8 339.9 70.1 343.6 70.5 338.3 70.8 347.3 71.2 346.8 71.5 353.0 71.9 345.8 72.2 348.5 72.6 341.5 73.0 343.4 73.3 341.6 73.7 342.2 74.0 342.7 74.4 343.0 74.7 341.4 75.1 340.7 75.4 340.2 75.8 339.2 76.1 338.8 76.5 334.3 76.9 340.6 77.2 338.6 77.6 336.0 77.9 340.1 78.3 343.2 78.6 337.3 79.0 338.9 79.3 339.6 79.7 344.4 80.0 342.5 80.4 338.3 80.8 345.5 81.1 342.2 81.5 337.4 81.8 338.7 82.2 345.0 82.5 329.6 82.9 335.3 83.2 336.5 83.6 346.8 83.9 339.3 84.3 343.9 84.7 340.6 85.0 344.5 85.4 343.6 85.7 342.2 86.1 342.7 86.4 342.2 86.8 334.9 87.1 338.8 87.5 336.4 87.8 339.3 88.2 340.1 88.6 337.6 88.9 338.5 89.3 335.8 89.6 337.4 90.0 343.7 90.3 339.6 90.7 344.0 91.0 340.7 91.4 341.3 91.7 339.4 92.1 343.8 92.5 349.3 92.8 336.2 93.2 338.0 93.5 334.7 93.9 338.3 94.2 342.8 94.6 346.7 94.9 342.7 95.3 344.3 95.7 338.2 96.0 337.9 96.4 340.7 96.7 339.8 97.1 336.7 97.4 335.5 97.8 336.4 98.1 331.8 98.5 335.1 98.8 346.5 99.2 343.8 99.6 338.5 99.9 335.7 100.3 333.7 100.6 339.5 101.0 336.4 101.3 336.3 101.7 339.7 102.0 343.3 102.4 343.6 102.7 348.1 103.1 335.9 103.5 343.9 103.8 347.4 104.2 345.1 104.5 339.8 104.9 335.8 105.2 336.0 105.6 329.3 105.9 333.7 106.3 327.4 106.6 327.1 107.0 326.0 107.4 334.3 107.7 340.2 108.1 330.5 108.4 335.1 108.8 341.6 109.1 341.0 109.5 343.3 109.8 347.9 110.2 343.7 110.5 339.2 110.9 336.5 111.3 334.2 111.6 331.7 112.0 333.1 112.3 332.3 112.7 342.3 113.0 335.4 113.4 332.6 113.7 329.2 114.1 334.7 114.4 336.3 114.8 331.6 115.2 339.3 115.5 333.1 115.9 335.1 116.2 333.2 116.6 339.3 116.9 338.7 117.3 341.9 117.6 335.4 118.0 336.4 118.3 333.3 118.7 331.8 119.1 328.5 119.4 336.2 119.8 335.1 120.1 333.5 120.5 335.8 120.8 338.9 121.2 341.6 121.5 340.5 121.9 337.4 122.3 337.9 122.6 334.2 123.0 336.5 123.3 336.2 123.7 333.6 124.0 339.0 124.4 339.0 124.7 339.5 125.1 339.8 125.4 336.5 125.8 334.6 126.2 336.1 126.5 327.6 126.9 330.4 127.2 333.7 127.6 330.8 127.9 326.6 128.3 332.4 128.6 330.7 129.0 340.2 129.3 344.0 129.7 340.4 130.1 345.3 130.4 335.0 130.8 323.7 131.1 326.9 131.5 327.0 131.8 332.8 132.2 327.2 132.5 330.0 132.9 329.3 133.2 328.4 133.6 331.8 134.0 332.3 134.3 330.3 134.7 336.9 135.0 330.1 135.4 326.9 135.7 328.8 136.1 324.6 136.4 326.6 136.8 323.4 137.1 324.0 137.5 326.2 137.9 335.5 138.2 332.4 138.6 328.1 138.9 330.8 139.3 321.4 139.6 323.6 140.0 321.2 140.3 324.7 140.7 320.9 141.0 316.9 141.4 313.6 141.8 325.7 142.1 320.7 142.5 330.4 142.8 324.3 143.2 324.8 143.5 323.0 143.9 323.0 144.2 325.1 144.6 330.9 145.0 329.0 145.3 322.7 145.7 320.5 146.0 325.0 146.4 324.5 146.7 327.7 147.1 323.6 147.4 326.4 147.8 327.0 148.1 326.6 148.5 323.5 148.9 324.8 149.2 325.2 149.6 325.3 149.9 321.9 150.3 320.3 150.6 317.8 151.0 318.6 151.3 323.2 151.7 323.2 152.0 332.6 152.4 327.5 152.8 328.9 153.1 330.0 153.5 328.7 153.8 325.4 154.2 328.8 154.5 323.3 154.9 322.2 155.2 325.3 155.6 327.5 155.9 328.4 156.3 317.1 156.7 322.9 157.0 312.2 157.4 318.6 157.7 322.7 158.1 324.5 158.4 328.5 158.8 328.7 159.1 325.0 159.5 321.2 159.8 320.4 160.2 313.2 160.6 312.2 160.9 315.3 161.3 319.1 161.6 315.9 162.0 320.9 162.3 323.6 162.7 324.9 163.0 331.0 163.4 325.1 163.7 324.3 164.1 320.4 164.5 324.5 164.8 323.9 165.2 320.1 165.5 324.4 165.9 320.8 166.2 323.2 166.6 326.4 166.9 322.5 167.3 331.0 167.6 329.9 168.0 325.0 168.4 322.1 168.7 316.3 169.1 327.4 169.4 321.8 169.8 324.0 170.1 325.8 170.5 321.4 170.8 323.0 171.2 324.1 171.6 319.5 171.9 324.8 172.3 319.4 172.6 316.8 173.0 318.5 173.3 316.4 173.7 324.6 174.0 320.0 174.4 329.2 174.7 319.2 175.1 324.2 175.5 320.4 175.8 317.4 176.2 316.5 176.5 312.8 176.9 311.5 177.2 313.9 177.6 312.0 177.9 321.9 178.3 325.9 178.6 320.6 179.0 321.2 179.4 318.4 179.7 313.5 180.1 320.2 180.4 315.2 180.8 315.2 181.1 317.6 181.5 316.7 181.8 312.1 182.2 315.1 182.5 311.2 182.9 326.0 183.3 310.6 183.6 320.7 184.0 319.0 184.3 314.9 184.7 316.5 185.0 315.7 185.4 315.3 185.7 310.1 186.1 317.6 186.4 320.0 186.8 320.1 187.2 321.4 187.5 316.3 187.9 316.3 188.2 320.4 188.6 314.1 188.9 321.0 189.3 317.8 189.6 314.8 190.0 318.4 190.3 314.1 190.7 311.3 191.1 314.7 191.4 307.4 191.8 308.4 192.1 307.2 192.5 304.7 192.8 306.9 193.2 307.1 193.5 309.2 193.9 307.2 194.2 311.1 194.6 312.4 195.0 316.2 195.3 312.7 195.7 312.5 196.0 309.0 196.4 306.3 196.7 309.1 197.1 304.5 197.4 312.2 197.8 300.4 198.2 305.0 198.5 306.1 198.9 301.5 199.2 306.9 199.6 307.3 199.9 307.2 200.3 307.7 200.6 306.6 201.0 307.6 201.3 310.8 201.7 308.3 202.1 310.2 202.4 314.3 202.8 306.7 203.1 302.4 203.5 304.6 203.8 297.8 204.2 299.7 204.5 298.4 204.9 294.3 205.2 300.3 205.6 294.8 206.0 301.7 206.3 301.8 206.7 297.4 207.0 296.7 207.4 301.2 207.7 295.4 208.1 297.1 208.4 296.7 208.8 294.2 209.1 294.9 209.5 308.6 209.9 302.4 210.2 298.7 210.6 307.8 210.9 298.7 211.3 296.6 211.6 297.6 212.0 297.7 212.3 290.7 212.7 300.9 213.0 292.7 213.4 294.3 213.8 293.1 214.1 294.5 214.5 296.3 214.8 295.4 215.2 298.5 215.5 299.8 215.9 294.1 216.2 295.1 216.6 297.6 216.9 297.3 217.3 299.5 217.7 307.4 218.0 300.9 218.4 301.0 218.7 299.6 219.1 302.7 219.4 300.3 219.8 301.0 220.1 299.9 220.5 295.4 220.9 297.0 221.2 294.4 221.6 294.7 221.9 297.2 222.3 293.5 222.6 294.9 223.0 293.4 223.3 292.3 223.7 298.8 224.0 293.8 224.4 286.4 224.8 289.7 225.1 293.4 225.5 300.2 225.8 300.2 226.2 306.3 226.5 298.9 226.9 299.3 227.2 298.8 227.6 289.4 227.9 293.9 228.3 290.4 228.7 292.8 229.0 298.0 229.4 290.6 229.7 296.9 230.1 290.3 230.4 286.9 230.8 287.4 231.1 298.5 231.5 287.7 231.8 290.4 232.2 293.9 232.6 291.1 232.9 291.9 233.3 291.8 233.6 293.3 234.0 295.4 234.3 291.7 234.7 286.9 235.0 300.2 235.4 292.5 235.7 290.9 236.1 292.3 236.5 291.1 236.8 290.1 237.2 287.3 237.5 281.8 237.9 285.3 238.2 286.8 238.6 281.3 238.9 293.1 239.3 291.0 239.6 291.5 240.0 290.7 240.4 286.4 240.7 281.7 241.1 279.5 241.4 278.5 241.8 274.1 242.1 277.1 242.5 278.2 242.8 279.2 243.2 280.0 243.5 281.8 243.9 287.4 244.3 274.0 244.6 277.1 245.0 273.8 245.3 270.0 245.7 272.0 246.0 272.6 246.4 279.2 246.7 283.1 247.1 283.3 247.5 280.6 247.8 286.2 248.2 289.1 248.5 282.5 248.9 284.4 249.2 281.3 249.6 281.6 249.9 281.0 250.3 281.0 250.6 276.0 251.0 277.9 251.4 279.0 251.7 276.9 252.1 277.1 252.4 281.5 252.8 276.5 253.1 269.5 253.5 269.6 253.8 272.6 254.2 271.3 254.5 281.8 254.9 272.5 255.3 271.9 255.6 276.0 256.0 281.5 256.3 277.2 256.7 274.7 257.0 280.3 257.4 274.6 257.7 276.2 258.1 273.7 258.4 274.6 258.8 275.4 259.2 278.0 259.5 280.7 259.9 277.7 260.2 278.2 260.6 277.7 260.9 273.9 261.3 277.2 261.6 274.3 262.0 264.9 262.3 269.2 262.7 271.0 263.1 268.8 263.4 270.6 263.8 270.6 264.1 267.9 264.5 272.7 264.8 279.4 265.2 275.0 265.5 274.7 265.9 269.2 266.2 267.4 266.6 271.3 267.0 275.2 267.3 269.8 267.7 277.1 268.0 273.1 268.4 268.9 268.7 270.5 269.1 273.4 269.4 269.1 269.8 268.5 270.2 270.0 270.5 263.6 270.9 264.1 271.2 260.9 271.6 263.6 271.9 266.3 272.3 261.6 272.6 260.9 273.0 268.5 273.3 267.9 273.7 265.6 274.1 262.2 274.4 270.8 274.8 263.5 275.1 268.1 275.5 265.0 275.8 266.5 276.2 258.9 276.5 266.9 276.9 262.8 277.2 259.9 277.6 268.3 278.0 262.8 278.3 259.7 278.7 259.8 279.0 262.1 279.4 260.4 279.7 260.0 280.1 250.7 280.4 260.4 280.8 257.3 281.1 256.4 281.5 255.3 281.9 262.6 282.2 259.0 282.6 265.2 282.9 260.9 283.3 264.3 283.6 267.2 284.0 260.9 284.3 262.0 284.7 258.9 285.0 252.4 285.4 265.5 285.8 259.7 286.1 263.2 286.5 258.8 286.8 261.3 287.2 268.8 287.5 256.0 287.9 257.6 288.2 259.0 288.6 259.5 288.9 265.5 289.3 257.3 289.7 263.1 290.0 254.8 290.4 258.9 290.7 255.4 291.1 251.5 291.4 250.0 291.8 254.4 292.1 252.5 292.5 257.0 292.8 255.5 293.2 256.9 293.6 260.9 293.9 250.7 294.3 256.0 294.6 250.5 295.0 246.0 295.3 246.2 295.7 247.8 296.0 256.5 296.4 254.0 296.8 252.6 297.1 249.3 297.5 251.0 297.8 246.2 298.2 249.7 298.5 256.6 298.9 251.5 299.2 243.8 299.6 249.0 299.9 247.2 300.3 254.0 300.7 250.0 301.0 244.5 301.4 253.9 301.7 252.2 302.1 245.1 302.4 250.4 302.8 248.3 303.1 240.9 303.5 247.5 303.8 247.6 304.2 250.5 304.6 253.1 304.9 252.7 305.3 249.4 305.6 251.4 306.0 248.3 306.3 250.6 306.7 249.4 307.0 254.1 307.4 250.6 307.7 251.8 308.1 247.6 308.5 248.6 308.8 250.6 309.2 253.0 309.5 257.0 309.9 241.4 310.2 248.2 310.6 249.8 310.9 240.7 311.3 241.8 311.6 251.8 312.0 239.7 312.4 239.7 312.7 244.1 313.1 238.3 313.4 241.0 313.8 240.3 314.1 242.4 314.5 239.0 314.8 236.2 315.2 232.5 315.5 243.3 315.9 240.7 316.3 242.8 316.6 241.1 317.0 242.2 317.3 236.6 317.7 245.0 318.0 243.4 318.4 246.9 318.7 248.1 319.1 246.2 319.4 242.2 319.8 241.0 320.2 246.0 320.5 246.9 320.9 237.2 321.2 247.4 321.6 236.1 321.9 237.3 322.3 238.8 322.6 244.0 323.0 240.6 323.4 238.9 323.7 237.0 324.1 234.6 324.4 235.1 324.8 231.1 325.1 235.8 325.5 238.9 325.8 241.5 326.2 233.2 326.5 232.4 326.9 243.6 327.3 246.8 327.6 233.8 328.0 235.2 328.3 236.4 328.7 240.8 329.0 241.2 329.4 246.4 329.7 242.6 330.1 239.3 330.4 236.8 330.8 234.2 331.2 233.8 331.5 233.1 331.9 228.4 332.2 236.0 332.6 236.1 332.9 236.6 333.3 238.1 333.6 240.0 334.0 238.1 334.3 235.1 334.7 236.9 335.1 233.8 335.4 231.7 335.8 229.9 336.1 233.1 336.5 235.0 336.8 241.3 337.2 238.3 337.5 230.9 337.9 235.7 338.2 232.8 338.6 229.3 339.0 232.4 339.3 238.2 339.7 237.1 340.0 235.1 340.4 232.5 340.7 241.2 341.1 232.7 341.4 234.3 341.8 234.6 342.1 228.1 342.5 229.8 342.9 231.7 343.2 231.6 343.6 235.4 343.9 228.1 344.3 233.4 344.6 230.0 345.0 233.5 345.3 230.8 345.7 233.2 346.1 233.8 346.4 228.9 346.8 238.9 347.1 231.6 347.5 228.2 347.8 227.5 348.2 232.5 348.5 232.3 348.9 239.4 349.2 233.3 349.6 234.0 350.0 235.2 350.3 225.4 350.7 228.2 351.0 228.6 351.4 227.2 351.7 227.4 352.1 226.7 352.4 220.6 352.8 225.8 353.1 231.6 353.5 228.2 353.9 227.1 354.2 232.0 354.6 228.7 354.9 230.3 355.3 231.6 355.6 231.5 356.0 236.7 356.3 234.1 356.7 225.4 357.0 226.4 357.4 222.2 357.8 225.6 358.1 227.0 358.5 228.4 358.8 235.0 359.2 225.8 359.5 231.3 359.9 230.8 360.2 229.6 360.6 177.5 360.9 135.9 361.3 122.4 361.7 118.4 362.0 119.6 362.4 119.9 362.7 117.4 363.1 117.5 363.4 119.1 363.8 114.8 364.1 118.6 364.5 124.8 364.8 128.1 365.2 117.3 365.6 123.4 365.9 128.6 366.3 124.5 366.6 124.0 367.0 129.2 367.3 126.1 367.7 120.2 368.0 123.7 368.4 125.6 368.7 126.1 369.1 123.6 369.5 122.7 369.8 127.8 370.2 124.8 370.5 126.6 370.9 127.4 371.2 122.1 371.6 121.7 371.9 119.6 372.3 121.5 372.7 118.4 373.0 132.3 373.4 122.2 373.7 129.4 374.1 123.0 374.4 128.4 374.8 118.4 375.1 124.0 375.5 122.1 375.8 132.0 376.2 123.2 376.6 131.1 376.9 121.3 377.3 125.7 377.6 121.7 378.0 125.4 378.3 125.8 378.7 127.2 379.0 130.2 379.4 124.6 379.7 122.5 380.1 120.2 380.5 121.9 380.8 127.3 381.2 130.2 381.5 130.8 381.9 128.4 382.2 127.5 382.6 122.0 382.9 121.8 383.3 128.0 383.6 126.1 384.0 122.5 384.4 131.6 384.7 115.7 385.1 125.4 385.4 127.0 385.8 115.3 386.1 123.4 386.5 127.3 386.8 122.9 387.2 119.8 387.5 116.3 387.9 121.9 388.3 120.1 388.6 126.9 389.0 120.2 389.3 119.8 389.7 120.2 390.0 122.7 390.4 122.1 390.7 124.0 391.1 121.8 391.4 121.9 391.8 118.8 392.2 125.7 392.5 118.1 392.9 130.3 393.2 122.3 393.6 122.8 393.9 118.8 394.3 119.0 394.6 121.0 395.0 128.3 395.4 123.8 395.7 124.0 396.1 123.9 396.4 135.1 396.8 123.9 397.1 123.3 397.5 124.5 397.8 121.7 398.2 127.0 398.5 124.4 398.9 126.9 399.3 129.5 399.6 122.8 400.0 123.8 400.3 122.5 400.7 129.1 401.0 127.5 401.4 126.0 401.7 126.9 402.1 121.1 402.4 132.1 402.8 120.9 403.2 117.7 403.5 123.6 403.9 117.1 404.2 121.0 404.6 124.2 404.9 127.4 405.3 127.0 405.6 125.1 406.0 135.0 406.3 119.4 406.7 125.2 407.1 124.5 407.4 120.3 407.8 118.0 408.1 116.6 408.5 127.6 408.8 123.0 409.2 122.7 409.5 132.6 409.9 121.3 410.2 119.7 410.6 126.7 411.0 120.9 411.3 125.1 411.7 117.4 412.0 123.5 412.4 129.6 412.7 123.7 413.1 125.7 413.4 128.0 413.8 122.1 414.1 120.1 414.5 120.4 414.9 125.6 415.2 123.2 415.6 125.2 415.9 121.3 416.3 119.1 416.6 120.7 417.0 115.5 417.3 124.6 417.7 118.4 418.0 123.8 418.4 131.4 418.8 134.6 419.1 131.8 419.5 122.3 419.8 121.7 420.2 136.2 420.5 131.9 420.9 122.0 421.2 120.2 421.6 129.4 422.0 125.7 422.3 119.0 422.7 126.4 423.0 122.6 423.4 127.3 423.7 123.5 424.1 128.5 424.4 124.0 424.8 127.8 425.1 125.7 425.5 125.3 425.9 123.7 426.2 124.5 426.6 128.7 426.9 123.6 427.3 121.4 427.6 121.7 428.0 118.2 428.3 121.9 428.7 118.1 429.0 125.9 429.4 122.8 429.8 116.6 430.1 122.2 430.5 127.3 430.8 133.5 431.2 126.9 431.5 123.4 431.9 122.5 432.2 127.8 432.6 133.2 432.9 129.8 433.3 120.1 433.7 130.2 434.0 123.9 434.4 119.8 434.7 115.3 435.1 115.4 435.4 129.6 435.8 122.8 436.1 125.8 436.5 121.8 436.8 120.9 437.2 124.9 437.6 122.8 437.9 126.5 438.3 119.0 438.6 124.6 439.0 115.0 439.3 113.2 439.7 129.1 440.0 121.7 440.4 120.2 440.7 118.5 441.1 121.8 441.5 132.6 441.8 124.9 442.2 120.9 442.5 119.6 442.9 116.4 443.2 122.1 443.6 123.3 443.9 120.6 444.3 124.0 444.6 118.9 445.0 126.8 445.4 121.1 445.7 122.7 446.1 122.5 446.4 128.8 446.8 122.3 447.1 123.7 447.5 125.2 447.8 129.4 448.2 121.1 448.6 115.7 448.9 127.5 449.3 125.8 449.6 129.3 450.0 121.9 450.3 132.5 450.7 123.3 451.0 122.5 451.4 120.7 451.7 125.3 452.1 123.9 452.5 122.6 452.8 134.4 453.2 126.2 453.5 118.2 453.9 122.1 454.2 118.7 454.6 133.0 454.9 127.6 455.3 124.5 455.6 128.9 456.0 116.6 456.4 125.1 456.7 124.8 457.1 120.8 457.4 123.0 457.8 126.4 458.1 127.9 458.5 125.3 458.8 118.5 459.2 131.1 459.5 126.4 459.9 119.4 460.3 126.1 460.6 119.0 461.0 117.4 461.3 118.1 461.7 121.8 462.0 117.7 462.4 122.6 462.7 116.9 463.1 119.8 463.4 127.0 463.8 121.1 464.2 121.6 464.5 120.5 464.9 120.1 465.2 132.6 465.6 117.6 465.9 127.9 466.3 123.3 466.6 124.7 467.0 130.1 467.3 116.2 467.7 123.2 468.1 114.8 468.4 120.6 468.8 122.7 469.1 135.5 469.5 125.3 469.8 123.9 470.2 121.5 470.5 120.8 470.9 116.0 471.3 123.4 471.6 122.6 472.0 115.8 472.3 123.4 472.7 118.7 473.0 113.7 473.4 118.6 473.7 123.8 474.1 128.1 474.4 125.0 474.8 121.2 475.2 125.2 475.5 134.2 475.9 121.5 476.2 132.6 476.6 120.4 476.9 123.9 477.3 127.7 477.6 132.6 478.0 161.6 478.3 223.8 478.7 226.8 479.1 224.8 479.4 227.9 479.8 224.8 480.1 221.7 480.5 225.8 480.8 224.2 481.2 235.2 481.5 229.9 481.9 221.4 482.2 228.6 482.6 227.6 483.0 228.8 483.3 230.4 483.7 237.6 484.0 229.0 484.4 225.7 484.7 226.0 485.1 230.0 485.4 226.5 485.8 223.6 486.1 224.1 486.5 222.1 486.9 224.5 487.2 230.1 487.6 238.2 487.9 242.3 488.3 238.9 488.6 232.7 489.0 231.7 489.3 229.3 489.7 227.0 490.0 226.9 490.4 230.1 490.8 234.7 491.1 235.6 491.5 233.8 491.8 231.7 492.2 228.0 492.5 225.0 492.9 233.3 493.2 224.2 493.6 227.8 493.9 233.5 494.3 236.6 494.7 233.7 495.0 241.4 495.4 237.9 495.7 235.5 496.1 239.4 496.4 239.0 496.8 234.0 497.1 230.5 497.5 237.3 497.9 239.5 498.2 239.4 498.6 237.3 498.9 236.6 499.3 232.3 499.6 244.3 500.0 236.1 500.3 245.1 500.7 244.9 501.0 244.7 501.4 236.0 501.8 237.8 502.1 240.1 502.5 236.0 502.8 232.3 503.2 240.0 503.5 242.3 503.9 243.3 504.2 238.3 504.6 237.2 504.9 243.2 505.3 240.9 505.7 237.9 506.0 253.2 506.4 242.0 506.7 242.6 507.1 250.9 507.4 242.4 507.8 237.7 508.1 238.5 508.5 237.7 508.8 243.4 509.2 245.5 509.6 237.4 509.9 243.1 510.3 241.9 510.6 242.4 511.0 237.9 511.3 248.4 511.7 239.8 512.0 242.4 512.4 240.9 512.7 248.5 513.1 249.7 513.5 244.4 513.8 247.9 514.2 248.3 514.5 245.6 514.9 247.7 515.2 250.3 515.6 246.3 515.9 250.3 516.3 250.2 516.6 252.9 517.0 244.7 517.4 246.9 517.7 242.8 518.1 238.5 518.4 243.8 518.8 241.2 519.1 247.8 519.5 247.0 519.8 243.5 520.2 240.8 520.6 235.6 520.9 241.5 521.3 238.3 521.6 240.7 522.0 246.4 522.3 242.7 522.7 238.7 523.0 244.5 523.4 251.5 523.7 251.4 524.1 251.9 524.5 249.6 524.8 248.0 525.2 246.1 525.5 247.5 525.9 251.7 526.2 242.1 526.6 247.2 526.9 255.6 527.3 253.1 527.6 255.5 528.0 254.8 528.4 251.1 528.7 250.4 529.1 248.9 529.4 241.2 529.8 244.0 530.1 248.7 530.5 248.7 530.8 249.6 531.2 242.1 531.5 241.8 531.9 244.1 532.3 244.2 532.6 240.4 533.0 244.5 533.3 243.9 533.7 244.9 534.0 250.8 534.4 246.7 534.7 251.8 535.1 247.9 535.4 247.2 535.8 249.7 536.2 250.3 536.5 251.7 536.9 258.5 537.2 252.9 537.6 258.1 537.9 258.5 538.3 257.1 538.6 258.5 539.0 256.3 539.3 257.8 539.7 257.3 540.1 256.5 540.4 253.6 540.8 254.2 541.1 252.3 541.5 251.1 541.8 247.9 542.2 250.8 542.5 249.4 542.9 255.6 543.2 252.0 543.6 252.0 544.0 252.5 544.3 255.5 544.7 260.0 545.0 258.2 545.4 261.3 545.7 257.2 546.1 260.1 546.4 254.6 546.8 262.7 547.2 263.5 547.5 259.5 547.9 258.9 548.2 257.8 548.6 262.6 548.9 257.4 549.3 258.8 549.6 262.8 550.0 259.3 550.3 254.9 550.7 258.1 551.1 259.1 551.4 254.2 551.8 257.5 552.1 261.1 552.5 264.7 552.8 257.6 553.2 256.5 553.5 258.6 553.9 256.2 554.2 254.8 554.6 259.4 555.0 264.3 555.3 258.1 555.7 262.3 556.0 259.8 556.4 261.4 556.7 261.8 557.1 263.7 557.4 265.6 557.8 260.9 558.1 254.9 558.5 260.2 558.9 263.0 559.2 260.1 559.6 257.3 559.9 263.5 560.3 257.3 560.6 263.9 561.0 262.2 561.3 259.2 561.7 254.9 562.0 255.4 562.4 260.1 562.8 260.4 563.1 265.3 563.5 265.8 563.8 263.2 564.2 266.9 564.5 261.9 564.9 263.3 565.2 260.9 565.6 266.1 565.9 264.0 566.3 267.6 566.7 267.0 567.0 270.5 567.4 271.8 567.7 268.7 568.1 268.6 568.4 265.8 568.8 259.9 569.1 259.4 569.5 261.7 569.8 263.5 570.2 262.2 570.6 268.3 570.9 270.7 571.3 269.2 571.6 270.1 572.0 272.3 572.3 272.4 572.7 275.0 573.0 272.0 573.4 272.7 573.8 273.7 574.1 278.6 574.5 271.7 574.8 274.6 575.2 274.8 575.5 273.5 575.9 275.7 576.2 268.2 576.6 272.6 576.9 268.9 577.3 271.7 577.7 267.0 578.0 267.8 578.4 269.8 578.7 272.4 579.1 272.5 579.4 276.2 579.8 272.6 580.1 275.6 580.5 275.7 580.8 283.6 581.2 279.0 581.6 280.3 581.9 279.9 582.3 277.0 582.6 278.3 583.0 283.4 583.3 277.4 583.7 285.3 584.0 281.5 584.4 281.0 584.7 276.0 585.1 274.5 585.5 271.7 585.8 279.7 586.2 271.0 586.5 271.9 586.9 274.1 587.2 273.0 587.6 270.6 587.9 274.4 588.3 276.5 588.6 275.6 589.0 277.4 589.4 278.4 589.7 273.9 590.1 277.5 590.4 276.8 590.8 276.4 591.1 274.8 591.5 279.5 591.8 282.7 592.2 280.9 592.5 279.7 592.9 283.5 593.3 279.7 593.6 292.0 594.0 279.8 594.3 282.4 594.7 284.9 595.0 287.0 595.4 293.1 595.7 288.6 596.1 290.8 596.5 294.5 596.8 289.3 597.2 289.7 597.5 288.1 597.9 285.7 598.2 289.1 598.6 292.0 598.9 282.1 599.3 286.9 599.6 287.8 600.0 285.2 600.4 283.2 600.7 286.4 601.1 281.6 601.4 277.7 601.8 278.2 602.1 278.7 602.5 278.3 602.8 284.1 603.2 288.9 603.5 293.0 603.9 292.6 604.3 291.0 604.6 294.2 605.0 301.2 605.3 289.7 605.7 284.8 606.0 285.5 606.4 285.8 606.7 286.2 607.1 287.2 607.4 291.6 607.8 287.3 608.2 297.6 608.5 294.0 608.9 293.9 609.2 288.7 609.6 289.2 609.9 287.9 610.3 292.5 610.6 293.7 611.0 292.3 611.3 291.3 611.7 286.7 612.1 285.8 612.4 286.4 612.8 290.4 613.1 293.8 613.5 290.8 613.8 291.5 614.2 292.1 614.5 287.0 614.9 290.9 615.2 298.2 615.6 289.7 616.0 290.6 616.3 293.6 616.7 286.3 617.0 296.9 617.4 291.0 617.7 300.9 618.1 294.4 618.4 292.8 618.8 296.8 619.1 296.8 619.5 302.8 619.9 301.9 620.2 299.1 620.6 306.6 620.9 295.7 621.3 296.7 621.6 297.2 622.0 299.6 622.3 300.1 622.7 298.5 623.1 304.4 623.4 303.7 623.8 305.8 624.1 304.6 624.5 309.9 624.8 297.6 625.2 303.3 625.5 297.3 625.9 295.3 626.2 301.1 626.6 299.5 627.0 304.8 627.3 306.6 627.7 297.1 628.0 298.1 628.4 295.7 628.7 294.3 629.1 299.5 629.4 297.9 629.8 296.3 630.1 295.5 630.5 301.9 630.9 300.6 631.2 295.2 631.6 296.8 631.9 294.3 632.3 299.7 632.6 300.4 633.0 293.3 633.3 301.7 633.7 304.5 634.0 305.5 634.4 307.8 634.8 306.9 635.1 314.2 635.5 309.3 635.8 306.4 636.2 304.5 636.5 307.4 636.9 300.0 637.2 303.8 637.6 303.1 637.9 303.4 638.3 305.4 638.7 297.4 639.0 301.0 639.4 300.9 639.7 309.4 640.1 311.9 640.4 304.6 640.8 303.9 641.1 305.9 641.5 300.7 641.8 300.2 642.2 308.7 642.6 306.4 642.9 303.9 643.3 310.2 643.6 310.3 644.0 305.9 644.3 304.6 644.7 302.2 645.0 306.5 645.4 301.1 645.8 301.7 646.1 309.2 646.5 306.3 646.8 305.4 647.2 303.6 647.5 302.7 647.9 299.1 648.2 304.1 648.6 306.2 648.9 312.3 649.3 306.6 649.7 310.6 650.0 311.3 650.4 310.6 650.7 313.2 651.1 308.6 651.4 310.3 651.8 312.7 652.1 305.0 652.5 313.4 652.8 313.9 653.2 314.5 653.6 314.8 653.9 314.2 654.3 316.8 654.6 318.3 655.0 319.7 655.3 313.1 655.7 315.9 656.0 317.4 656.4 317.6 656.7 312.5 657.1 312.2 657.5 312.9 657.8 313.7 658.2 311.0 658.5 314.6 658.9 318.3 659.2 317.7 659.6 315.2 659.9 311.6 660.3 311.3 660.6 318.1 661.0 317.6 661.4 315.9 661.7 315.6 662.1 311.9 662.4 322.4 662.8 317.9 663.1 323.1 663.5 327.6 663.8 327.5 664.2 314.6 664.5 315.1 664.9 318.4 665.3 316.7 665.6 313.5 666.0 308.6 666.3 315.1 666.7 309.4 667.0 315.6 667.4 319.3 667.7 328.7 668.1 323.5 668.4 325.7 668.8 321.9 669.2 320.0 669.5 316.1 669.9 321.2 670.2 318.4 670.6 313.0 670.9 318.3 671.3 320.7 671.6 319.6 672.0 319.6 672.4 326.5 672.7 315.3 673.1 310.9 673.4 313.3 673.8 312.0 674.1 314.3 674.5 316.3 674.8 318.5 675.2 325.9 675.5 323.1 675.9 329.0 676.3 323.5 676.6 324.8 677.0 318.4 677.3 315.8 677.7 318.0 678.0 317.3 678.4 319.8 678.7 325.5 679.1 319.4 679.4 317.0 679.8 322.4 680.2 329.3 680.5 320.9 680.9 321.6 681.2 322.7 681.6 329.5 681.9 325.2 682.3 326.1 682.6 327.9 683.0 329.5 683.3 326.7 683.7 323.0 684.1 320.4 684.4 319.8 684.8 316.5 685.1 323.3 685.5 334.3 685.8 326.4 686.2 326.9 686.5 328.1 686.9 324.6 687.2 333.7 687.6 335.4 688.0 333.3 688.3 334.3 688.7 333.3 689.0 331.5 689.4 334.0 689.7 332.7 690.1 333.7 690.4 330.6 690.8 323.6 691.1 336.7 691.5 327.3 691.9 328.6 692.2 328.7 692.6 335.1 692.9 328.8 693.3 328.9 693.6 325.3 694.0 324.9 694.3 325.1 694.7 321.8 695.0 322.8 695.4 324.8 695.8 325.4 696.1 327.1 696.5 329.4 696.8 336.7 697.2 332.9 697.5 333.3 697.9 334.0 698.2 331.1 698.6 325.9 699.0 329.3 699.3 322.3 699.7 328.0 700.0 327.5 700.4 333.9 700.7 325.2 701.1 328.0 701.4 330.9 701.8 328.9 702.1 329.2 702.5 333.5 702.9 334.7 703.2 330.4 703.6 328.1 703.9 334.9 704.3 330.3 704.6 337.0 705.0 329.5 705.3 334.0 705.7 334.3 706.0 335.4 706.4 336.4 706.8 332.6 707.1 331.3 707.5 324.8 707.8 327.2 708.2 328.0 708.5 330.6 708.9 326.4 709.2 336.4 709.6 330.4 709.9 345.7 710.3 340.1 710.7 336.5 711.0 331.1 711.4 331.0 711.7 329.1 712.1 331.5 712.4 329.2 712.8 332.6 713.1 335.2 713.5 333.9 713.8 335.4 714.2 334.9 714.6 334.2 714.9 328.0 715.3 326.3 715.6 332.8 716.0 329.6 716.3 338.7 716.7 332.2 717.0 334.5 717.4 333.2 717.7 340.8 718.1 333.8 718.5 331.1 718.8 330.2 719.2 334.9 719.5 337.3 719.9 336.2 720.2 339.5 720.6 334.0 720.9 332.1 721.3 328.2 721.7 334.1 722.0 334.8 722.4 339.7 722.7 338.4 723.1 341.5 723.4 335.1 723.8 342.5 724.1 335.0 724.5 333.6 724.8 332.5 725.2 331.5 725.6 330.5 725.9 335.4 726.3 335.1 726.6 335.5 727.0 335.1 727.3 328.5 727.7 327.6 728.0 329.8 728.4 328.7 728.7 328.1 729.1 328.7 729.5 332.9 729.8 331.4 730.2 330.0 730.5 335.2 730.9 335.9 731.2 335.4 731.6 333.9 731.9 327.3 732.3 325.4 732.6 327.7 733.0 331.5 733.4 328.7 733.7 330.1 734.1 335.0 734.4 331.1 734.8 338.8 735.1 339.7 735.5 334.4 735.8 339.3 736.2 339.6 736.5 339.2 736.9 347.4 737.3 341.8 737.6 341.0 738.0 337.4 738.3 336.3 738.7 336.0 739.0 341.1 739.4 343.5 739.7 343.6 740.1 335.4 740.4 338.9 740.8 337.5 741.2 339.9 741.5 344.2 741.9 348.8 742.2 337.5 742.6 341.6 742.9 337.4 743.3 337.5 743.6 334.1 744.0 338.4 744.3 332.3 744.7 335.5 745.1 330.4 745.4 332.5 745.8 331.9 746.1 331.6 746.5 337.6 746.8 331.1 747.2 344.0 747.5 340.4 747.9 341.0 748.3 338.7 748.6 343.4 749.0 339.2 749.3 340.0 749.7 331.0 750.0 335.6 750.4 335.8 750.7 338.4 751.1 343.6 751.4 338.2 751.8 339.5 752.2 343.0 752.5 342.7 752.9 335.4 753.2 337.8 753.6 341.0 753.9 347.3 754.3 340.7 754.6 343.0 755.0 343.0 755.3 343.3 755.7 337.6 756.1 340.7 756.4 339.4 756.8 342.2 757.1 341.5 757.5 337.2 757.8 334.9 758.2 339.9 758.5 338.7 758.9 339.4 759.2 342.8 759.6 341.7 760.0 342.1 760.3 339.9 760.7 346.4 761.0 340.1 761.4 333.7 761.7 343.4 762.1 343.5 762.4 346.8 762.8 347.0 763.1 343.8 763.5 349.0 763.9 345.2 764.2 345.2 764.6 342.5 764.9 345.6 765.3 351.3 765.6 344.2 766.0 348.6 766.3 342.1 766.7 345.3 767.0 337.2 767.4 344.0 767.8 343.6 768.1 344.8 768.5 346.6 768.8 343.9 769.2 346.1 769.5 350.2 769.9 347.7 770.2 349.8 770.6 354.9 771.0 355.6 771.3 352.3 771.7 350.3 772.0 347.8 772.4 340.1 772.7 337.6 773.1 338.5 773.4 349.3 773.8 329.7 774.1 338.2 774.5 335.6 774.9 339.6 775.2 345.0 775.6 339.2 775.9 342.5 776.3 339.9 776.6 343.4 777.0 345.1 777.3 341.6 777.7 344.1 778.0 346.0 778.4 352.7 778.8 347.7 779.1 345.1 779.5 345.6 779.8 340.5 780.2 345.4 780.5 340.0 780.9 341.2 781.2 337.5 781.6 338.6 781.9 339.9 782.3 345.4 782.7 350.4 783.0 340.5" stroke="#B85CE8"/>
<path d="M57.0 351.5 57.3 349.2 57.7 344.5 58.1 347.1 58.4 340.9 58.8 337.5 59.1 347.0 59.5 346.1 59.8 341.5 60.2 342.9 60.5 341.3 60.9 342.1 61.2 344.8 61.6 348.3 62.0 338.5 62.3 339.7 62.7 344.1 63.0 345.0 63.4 338.5 63.7 345.7 64.1 340.1 64.4 340.6 64.8 346.4 65.1 346.6 65.5 347.5 65.9 343.3 66.2 341.3 66.6 337.2 66.9 337.7 67.3 338.3 67.6 340.6 68.0 342.8 68.3 348.8 68.7 338.3 69.0 338.7 69.4 341.7 69.8 338.6 70.1 343.6 70.5 337.5 70.8 347.1 71.2 347.6 71.5 353.3 71.9 346.0 72.2 346.8 72.6 341.8 73.0 343.7 73.3 341.7 73.7 341.2 74.0 341.1 74.4 342.2 74.7 339.9 75.1 338.6 75.4 339.7 75.8 338.0 76.1 337.3 76.5 333.0 76.9 339.3 77.2 336.7 77.6 334.4 77.9 337.5 78.3 342.6 78.6 337.0 79.0 338.7 79.3 339.0 79.7 344.0 80.0 342.9 80.4 339.0 80.8 345.6 81.1 342.8 81.5 335.8 81.8 336.9 82.2 341.3 82.5 327.0 82.9 331.4 83.2 334.4 83.6 345.7 83.9 338.3 84.3 342.2 84.7 340.1 85.0 343.5 85.4 344.5 85.7 343.6 86.1 342.7 86.4 343.2 86.8 335.2 87.1 338.2 87.5 334.2 87.8 337.6 88.2 338.9 88.6 334.6 88.9 336.4 89.3 334.4 89.6 336.7 90.0 341.5 90.3 338.9 90.7 343.2 91.0 339.5 91.4 340.7 91.7 337.7 92.1 343.4 92.5 347.5 92.8 337.6 93.2 337.2 93.5 333.7 93.9 336.1 94.2 341.4 94.6 344.2 94.9 339.6 95.3 338.6 95.7 335.0 96.0 337.0 96.4 340.5 96.7 339.5 97.1 336.0 97.4 333.9 97.8 334.0 98.1 329.0 98.5 332.0 98.8 344.6 99.2 340.6 99.6 336.9 99.9 334.3 100.3 332.8 100.6 338.8 101.0 336.2 101.3 337.0 101.7 338.9 102.0 340.4 102.4 343.5 102.7 348.6 103.1 335.9 103.5 341.9 103.8 345.0 104.2 343.6 104.5 338.8 104.9 333.6 105.2 333.5 105.6 327.8 105.9 331.2 106.3 325.3 106.6 325.6 107.0 324.0 107.4 334.2 107.7 338.6 108.1 329.0 108.4 333.5 108.8 341.0 109.1 339.2 109.5 342.5 109.8 345.1 110.2 340.4 110.5 336.2 110.9 333.7 111.3 331.1 111.6 330.2 112.0 330.8 112.3 330.0 112.7 340.4 113.0 334.0 113.4 332.5 113.7 328.5 114.1 334.5 114.4 334.9 114.8 330.9 115.2 339.4 115.5 333.6 115.9 335.6 116.2 333.1 116.6 338.8 116.9 336.3 117.3 339.0 117.6 333.8 118.0 336.0 118.3 332.2 118.7 330.2 119.1 327.1 119.4 336.0 119.8 334.5 120.1 332.3 120.5 335.5 120.8 337.1 121.2 338.9 121.5 339.2 121.9 335.7 122.3 334.8 122.6 332.8 123.0 335.2 123.3 333.2 123.7 331.1 124.0 337.6 124.4 336.1 124.7 338.1 125.1 337.4 125.4 332.2 125.8 332.9 126.2 333.5 126.5 323.6 126.9 328.1 127.2 332.4 127.6 329.6 127.9 325.4 128.3 331.6 128.6 328.7 129.0 339.7 129.3 343.8 129.7 341.0 130.1 345.4 130.4 336.1 130.8 323.6 131.1 325.9 131.5 324.9 131.8 332.8 132.2 326.2 132.5 328.1 132.9 327.2 133.2 327.3 133.6 331.4 134.0 329.2 134.3 328.0 134.7 336.6 135.0 329.3 135.4 326.2 135.7 329.0 136.1 326.1 136.4 325.9 136.8 323.0 137.1 324.7 137.5 325.5 137.9 333.9 138.2 329.1 138.6 324.2 138.9 326.4 139.3 318.8 139.6 323.2 140.0 321.2 140.3 324.2 140.7 321.6 141.0 315.0 141.4 312.5 141.8 323.8 142.1 318.3 142.5 329.8 142.8 322.8 143.2 323.3 143.5 321.8 143.9 322.5 144.2 325.7 144.6 331.0 145.0 328.9 145.3 322.4 145.7 318.9 146.0 322.4 146.4 324.4 146.7 326.0 147.1 322.4 147.4 324.5 147.8 326.0 148.1 326.1 148.5 324.1 148.9 324.6 149.2 324.1 149.6 322.8 149.9 319.2 150.3 319.4 150.6 315.8 151.0 317.1 151.3 322.7 151.7 323.8 152.0 330.5 152.4 324.9 152.8 327.4 153.1 325.6 153.5 325.5 153.8 323.1 154.2 327.6 154.5 322.8 154.9 322.6 155.2 324.0 155.6 327.7 155.9 327.8 156.3 317.5 156.7 321.5 157.0 312.1 157.4 317.3 157.7 320.1 158.1 322.6 158.4 327.3 158.8 327.4 159.1 323.8 159.5 319.2 159.8 317.3 160.2 311.4 160.6 311.6 160.9 314.1 161.3 320.4 161.6 316.3 162.0 319.2 162.3 322.4 162.7 323.8 163.0 328.7 163.4 322.0 163.7 323.2 164.1 317.9 164.5 320.4 164.8 322.0 165.2 316.3 165.5 322.3 165.9 319.7 166.2 321.6 166.6 326.4 166.9 322.8 167.3 330.2 167.6 327.3 168.0 323.4 168.4 320.9 168.7 314.4 169.1 325.5 169.4 320.3 169.8 323.6 170.1 323.0 170.5 320.8 170.8 321.4 171.2 321.8 171.6 317.7 171.9 322.7 172.3 317.6 172.6 315.4 173.0 315.3 173.3 313.3 173.7 321.0 174.0 317.9 174.4 328.1 174.7 317.9 175.1 322.7 175.5 320.2 175.8 317.0 176.2 316.6 176.5 313.3 176.9 312.1 177.2 313.2 177.6 312.4 177.9 319.1 178.3 325.7 178.6 320.5 179.0 320.8 179.4 317.2 179.7 311.6 180.1 317.1 180.4 312.9 180.8 312.5 181.1 315.3 181.5 313.8 181.8 309.7 182.2 313.1 182.5 310.6 182.9 324.9 183.3 310.5 183.6 320.8 184.0 320.1 184.3 314.0 184.7 314.4 185.0 314.4 185.4 314.1 185.7 309.4 186.1 317.3 186.4 320.7 186.8 320.9 187.2 321.0 187.5 315.2 187.9 314.9 188.2 319.3 188.6 313.9 188.9 319.0 189.3 317.4 189.6 312.7 190.0 317.0 190.3 314.6 190.7 310.7 191.1 314.6 191.4 308.1 191.8 308.7 192.1 306.7 192.5 304.9 192.8 305.7 193.2 306.0 193.5 306.2 193.9 307.6 194.2 310.2 194.6 313.3 195.0 315.3 195.3 313.4 195.7 312.6 196.0 309.5 196.4 306.2 196.7 309.3 197.1 302.7 197.4 310.1 197.8 300.1 198.2 304.7 198.5 302.8 198.9 299.4 199.2 305.8 199.6 304.6 199.9 306.7 200.3 304.8 200.6 306.7 201.0 307.5 201.3 310.8 201.7 308.3 202.1 308.9 202.4 311.2 202.8 303.8 203.1 300.1 203.5 303.8 203.8 297.6 204.2 300.5 204.5 299.8 204.9 295.2 205.2 299.7 205.6 294.6 206.0 300.8 206.3 300.4 206.7 297.3 207.0 297.8 207.4 301.2 207.7 295.5 208.1 298.1 208.4 296.2 208.8 293.5 209.1 293.3 209.5 306.9 209.9 301.7 210.2 297.3 210.6 307.4 210.9 297.0 211.3 296.3 211.6 299.1 212.0 298.2 212.3 290.3 212.7 300.5 213.0 292.9 213.4 294.5 213.8 293.7 214.1 295.7 214.5 297.6 214.8 296.5 215.2 299.4 215.5 298.8 215.9 293.5 216.2 296.6 216.6 296.3 216.9 295.6 217.3 296.8 217.7 302.0 218.0 298.7 218.4 299.2 218.7 299.8 219.1 301.8 219.4 299.3 219.8 301.3 220.1 300.3 220.5 294.4 220.9 296.7 221.2 292.3 221.6 293.2 221.9 296.7 222.3 290.9 222.6 293.8 223.0 292.0 223.3 291.5 223.7 298.0 224.0 292.4 224.4 286.2 224.8 290.9 225.1 293.2 225.5 298.8 225.8 299.9 226.2 304.3 226.5 297.4 226.9 297.5 227.2 296.9 227.6 289.3 227.9 294.5 228.3 289.9 228.7 292.9 229.0 297.1 229.4 291.2 229.7 297.1 230.1 291.9 230.4 288.3 230.8 287.1 231.1 299.4 231.5 287.7 231.8 290.7 232.2 294.1 232.6 291.7 232.9 291.7 233.3 291.8 233.6 294.4 234.0 295.4 234.3 292.7 234.7 287.4 235.0 300.7 235.4 292.0 235.7 289.1 236.1 290.1 236.5 287.0 236.8 287.7 237.2 284.4 237.5 279.8 237.9 284.0 238.2 286.6 238.6 280.4 238.9 292.6 239.3 289.6 239.6 290.3 240.0 290.5 240.4 285.7 240.7 281.8 241.1 278.3 241.4 278.3 241.8 273.5 242.1 277.1 242.5 277.7 242.8 279.0 243.2 279.3 243.5 281.6 243.9 286.9 244.3 273.4 244.6 275.7 245.0 273.2 245.3 269.0 245.7 270.7 246.0 270.9 246.4 277.9 246.7 281.9 247.1 284.1 247.5 280.8 247.8 286.9 248.2 289.1 248.5 283.2 248.9 284.0 249.2 280.3 249.6 280.3 249.9 280.4 250.3 281.4 250.6 274.7 251.0 277.1 251.4 277.8 251.7 275.5 252.1 275.5 252.4 280.3 252.8 274.3 253.1 268.2 253.5 267.6 253.8 271.7 254.2 271.0 254.5 281.9 254.9 271.9 255.3 271.2 255.6 275.3 256.0 280.7 256.3 276.7 256.7 274.4 257.0 279.9 257.4 273.8 257.7 274.8 258.1 273.1 258.4 274.0 258.8 275.4 259.2 277.4 259.5 279.2 259.9 276.9 260.2 277.6 260.6 277.2 260.9 274.0 261.3 277.2 261.6 273.8 262.0 264.4 262.3 268.8 262.7 270.6 263.1 268.4 263.4 270.1 263.8 269.9 264.1 267.0 264.5 271.6 264.8 278.8 265.2 274.6 265.5 274.6 265.9 269.1 266.2 267.7 266.6 271.7 267.0 275.1 267.3 269.2 267.7 276.8 268.0 272.1 268.4 268.0 268.7 269.7 269.1 272.8 269.4 268.8 269.8 268.0 270.2 270.3 270.5 263.6 270.9 264.0 271.2 260.7 271.6 263.9 271.9 266.3 272.3 261.4 272.6 260.0 273.0 267.8 273.3 267.0 273.7 265.0 274.1 261.8 274.4 270.5 274.8 262.9 275.1 267.3 275.5 264.9 275.8 265.8 276.2 259.5 276.5 266.7 276.9 262.7 277.2 259.7 277.6 267.6 278.0 262.5 278.3 259.3 278.7 259.1 279.0 261.4 279.4 259.6 279.7 259.5 280.1 251.1 280.4 260.0 280.8 257.0 281.1 256.3 281.5 255.5 281.9 263.0 282.2 258.3 282.6 264.8 282.9 261.1 283.3 264.1 283.6 267.1 284.0 260.8 284.3 261.7 284.7 259.1 285.0 252.7 285.4 265.5 285.8 260.3 286.1 263.7 286.5 259.1 286.8 261.5 287.2 269.0 287.5 255.7 287.9 257.2 288.2 259.0 288.6 259.3 288.9 265.3 289.3 257.4 289.7 263.0 290.0 255.1 290.4 259.3 290.7 255.4 291.1 251.2 291.4 249.8 291.8 254.4 292.1 252.0 292.5 257.0 292.8 254.9 293.2 256.4 293.6 260.2 293.9 250.9 294.3 255.7 294.6 250.2 295.0 246.1 295.3 245.7 295.7 247.8 296.0 256.1 296.4 254.0 296.8 252.6 297.1 249.5 297.5 250.7 297.8 246.0 298.2 249.2 298.5 256.3 298.9 251.1 299.2 243.8 299.6 248.6 299.9 247.1 300.3 253.4 300.7 249.2 301.0 244.4 301.4 253.7 301.7 251.8 302.1 245.2 302.4 249.7 302.8 247.5 303.1 240.5 303.5 246.7 303.8 247.8 304.2 250.7 304.6 253.4 304.9 253.1 305.3 249.4 305.6 250.9 306.0 247.8 306.3 250.5 306.7 249.2 307.0 254.3 307.4 250.4 307.7 251.6 308.1 247.4 308.5 248.5 308.8 250.2 309.2 253.1 309.5 257.0 309.9 241.1 310.2 248.4 310.6 249.8 310.9 240.8 311.3 242.1 311.6 251.7 312.0 240.0 312.4 240.4 312.7 244.2 313.1 238.6 313.4 241.1 313.8 240.5 314.1 242.4 314.5 238.8 314.8 235.8 315.2 231.9 315.5 242.6 315.9 240.7 316.3 243.1 316.6 240.4 317.0 241.7 317.3 236.3 317.7 244.6 318.0 243.0 318.4 246.6 318.7 247.6 319.1 245.5 319.4 241.5 319.8 240.0 320.2 245.7 320.5 247.2 320.9 237.2 321.2 247.4 321.6 235.7 321.9 237.4 322.3 238.3 322.6 243.4 323.0 240.4 323.4 238.7 323.7 236.9 324.1 233.8 324.4 234.9 324.8 230.5 325.1 234.8 325.5 238.4 325.8 241.1 326.2 232.5 326.5 232.0 326.9 243.0 327.3 246.1 327.6 233.0 328.0 234.4 328.3 235.8 328.7 240.5 329.0 241.1 329.4 246.6 329.7 242.9 330.1 239.6 330.4 236.9 330.8 234.2 331.2 233.3 331.5 233.1 331.9 228.0 332.2 235.8 332.6 235.6 332.9 236.1 333.3 237.3 333.6 239.8 334.0 237.5 334.3 234.8 334.7 237.1 335.1 233.8 335.4 231.8 335.8 229.8 336.1 232.8 336.5 234.5 336.8 241.0 337.2 238.5 337.5 231.2 337.9 236.0 338.2 232.9 338.6 229.1 339.0 231.8 339.3 237.3 339.7 236.3 340.0 234.9 340.4 232.5 340.7 241.5 341.1 232.8 341.4 234.4 341.8 234.6 342.1 228.3 342.5 229.3 342.9 231.1 343.2 231.3 343.6 234.7 343.9 227.5 344.3 232.9 344.6 230.2 345.0 233.7 345.3 231.4 345.7 233.8 346.1 234.2 346.4 228.4 346.8 238.2 347.1 231.4 347.5 228.2 347.8 226.9 348.2 232.3 348.5 231.7 348.9 239.1 349.2 233.4 349.6 234.3 350.0 235.3 350.3 225.8 350.7 228.6 351.0 229.1 351.4 227.1 351.7 227.4 352.1 226.7 352.4 220.7 352.8 225.8 353.1 231.3 353.5 227.9 353.9 226.9 354.2 232.1 354.6 229.0 354.9 230.3 355.3 231.6 355.6 231.7 356.0 236.8 356.3 234.1 356.7 225.3 357.0 226.4 357.4 222.6 357.8 226.0 358.1 226.8 358.5 228.2 358.8 235.0 359.2 225.8 359.5 231.5 359.9 230.9 360.2 229.4 360.6 176.7 360.9 135.2 361.3 122.4 361.7 119.4 362.0 118.7 362.4 118.5 362.7 118.6 363.1 118.0 363.4 118.6 363.8 115.4 364.1 118.6 364.5 122.5 364.8 127.4 365.2 116.7 365.6 121.5 365.9 128.8 366.3 123.3 366.6 124.5 367.0 131.6 367.3 127.4 367.7 120.6 368.0 123.4 368.4 125.2 368.7 126.3 369.1 123.9 369.5 121.6 369.8 127.5 370.2 125.5 370.5 126.7 370.9 128.2 371.2 121.7 371.6 121.4 371.9 118.8 372.3 122.5 372.7 118.2 373.0 131.6 373.4 121.7 373.7 126.8 374.1 120.9 374.4 130.3 374.8 118.6 375.1 124.0 375.5 121.1 375.8 131.8 376.2 123.4 376.6 131.9 376.9 122.3 377.3 126.4 377.6 123.1 378.0 125.6 378.3 126.7 378.7 125.6 379.0 130.4 379.4 122.7 379.7 123.3 380.1 120.9 380.5 123.2 380.8 126.7 381.2 130.9 381.5 130.2 381.9 129.5 382.2 126.8 382.6 122.3 382.9 122.7 383.3 128.5 383.6 126.3 384.0 122.6 384.4 130.1 384.7 116.5 385.1 124.8 385.4 125.6 385.8 115.1 386.1 122.9 386.5 127.8 386.8 122.8 387.2 120.9 387.5 116.6 387.9 122.0 388.3 121.0 388.6 127.5 389.0 120.2 389.3 119.6 389.7 119.8 390.0 121.5 390.4 123.1 390.7 123.3 391.1 121.9 391.4 121.2 391.8 118.8 392.2 126.0 392.5 118.6 392.9 129.2 393.2 122.6 393.6 123.6 393.9 119.6 394.3 119.0 394.6 121.3 395.0 128.4 395.4 124.2 395.7 122.9 396.1 122.7 396.4 136.8 396.8 124.3 397.1 123.2 397.5 124.7 397.8 122.0 398.2 126.8 398.5 123.2 398.9 127.2 399.3 129.3 399.6 122.8 400.0 125.1 400.3 123.2 400.7 130.3 401.0 128.7 401.4 127.1 401.7 127.3 402.1 120.5 402.4 133.2 402.8 120.4 403.2 116.1 403.5 124.5 403.9 117.7 404.2 120.9 404.6 124.1 404.9 127.3 405.3 126.5 405.6 125.3 406.0 134.4 406.3 120.3 406.7 125.5 407.1 125.4 407.4 119.9 407.8 117.1 408.1 116.5 408.5 127.7 408.8 122.7 409.2 122.4 409.5 131.5 409.9 121.8 410.2 120.5 410.6 128.3 411.0 121.1 411.3 123.8 411.7 117.3 412.0 121.5 412.4 129.5 412.7 122.8 413.1 125.2 413.4 128.1 413.8 123.1 414.1 121.1 414.5 120.6 414.9 125.3 415.2 122.5 415.6 124.6 415.9 121.5 416.3 119.2 416.6 120.9 417.0 117.3 417.3 125.1 417.7 118.1 418.0 124.2 418.4 132.5 418.8 134.6 419.1 132.9 419.5 121.8 419.8 121.9 420.2 136.7 420.5 133.4 420.9 121.3 421.2 119.4 421.6 127.9 422.0 126.0 422.3 118.3 422.7 126.4 423.0 121.4 423.4 127.6 423.7 123.3 424.1 129.2 424.4 125.2 424.8 128.1 425.1 126.6 425.5 125.5 425.9 124.9 426.2 125.3 426.6 128.6 426.9 123.1 427.3 121.5 427.6 122.2 428.0 118.4 428.3 123.0 428.7 118.1 429.0 124.4 429.4 122.2 429.8 117.5 430.1 122.4 430.5 127.2 430.8 130.7 431.2 126.7 431.5 124.1 431.9 122.4 432.2 129.3 432.6 135.0 432.9 129.8 433.3 119.2 433.7 130.3 434.0 122.5 434.4 119.6 434.7 114.6 435.1 115.4 435.4 128.2 435.8 123.3 436.1 125.9 436.5 121.9 436.8 121.1 437.2 126.4 437.6 123.8 437.9 125.9 438.3 119.9 438.6 125.5 439.0 115.4 439.3 113.3 439.7 128.3 440.0 122.9 440.4 121.6 440.7 119.8 441.1 121.6 441.5 132.9 441.8 125.8 442.2 120.9 442.5 120.9 442.9 117.2 443.2 123.1 443.6 123.4 443.9 120.3 444.3 123.1 444.6 119.5 445.0 126.1 445.4 121.2 445.7 122.5 446.1 122.7 446.4 129.2 446.8 121.5 447.1 123.5 447.5 124.6 447.8 128.8 448.2 121.9 448.6 115.4 448.9 128.9 449.3 125.9 449.6 128.3 450.0 121.7 450.3 132.1 450.7 124.1 451.0 122.7 451.4 121.1 451.7 124.4 452.1 125.0 452.5 122.4 452.8 134.5 453.2 127.1 453.5 118.4 453.9 122.2 454.2 120.2 454.6 133.0 454.9 128.4 455.3 123.9 455.6 129.2 456.0 118.3 456.4 126.0 456.7 124.6 457.1 121.2 457.4 122.0 457.8 126.7 458.1 128.3 458.5 125.4 458.8 118.3 459.2 129.6 459.5 124.4 459.9 119.9 460.3 125.0 460.6 118.6 461.0 117.4 461.3 118.4 461.7 122.0 462.0 118.2 462.4 122.9 462.7 116.5 463.1 119.3 463.4 127.1 463.8 119.4 464.2 121.6 464.5 118.7 464.9 120.6 465.2 134.0 465.6 117.4 465.9 128.5 466.3 123.7 466.6 124.3 467.0 129.7 467.3 117.3 467.7 123.9 468.1 114.9 468.4 121.2 468.8 122.2 469.1 137.4 469.5 126.4 469.8 123.8 470.2 121.5 470.5 121.0 470.9 115.5 471.3 125.6 471.6 124.5 472.0 116.1 472.3 123.3 472.7 119.3 473.0 114.3 473.4 120.0 473.7 123.5 474.1 126.7 474.4 124.6 474.8 121.4 475.2 126.2 475.5 135.2 475.9 122.6 476.2 133.1 476.6 119.8 476.9 124.6 477.3 128.1 477.6 132.7 478.0 162.9 478.3 224.3 478.7 226.8 479.1 224.8 479.4 227.6 479.8 224.0 480.1 221.0 480.5 225.0 480.8 223.8 481.2 235.2 481.5 229.6 481.9 221.7 482.2 228.9 482.6 228.0 483.0 229.2 483.3 231.1 483.7 237.8 484.0 229.4 484.4 225.8 484.7 225.8 485.1 229.4 485.4 226.1 485.8 223.3 486.1 224.2 486.5 222.1 486.9 224.3 487.2 230.2 487.6 239.3 487.9 242.8 488.3 240.1 488.6 233.2 489.0 231.7 489.3 229.5 489.7 226.6 490.0 226.4 490.4 229.9 490.8 233.8 491.1 235.2 491.5 233.9 491.8 231.9 492.2 228.0 492.5 224.9 492.9 232.7 493.2 224.1 493.6 227.6 493.9 233.4 494.3 236.6 494.7 233.7 495.0 241.4 495.4 237.5 495.7 234.6 496.1 238.8 496.4 238.2 496.8 233.7 497.1 230.4 497.5 237.1 497.9 239.9 498.2 239.5 498.6 237.3 498.9 236.9 499.3 231.9 499.6 243.9 500.0 235.8 500.3 245.3 500.7 245.1 501.0 245.0 501.4 236.2 501.8 237.8 502.1 239.7 502.5 236.1 502.8 232.6 503.2 240.1 503.5 242.5 503.9 243.2 504.2 238.1 504.6 236.9 504.9 242.5 505.3 240.5 505.7 237.9 506.0 253.2 506.4 241.8 506.7 242.5 507.1 250.6 507.4 241.8 507.8 237.2 508.1 238.0 508.5 237.5 508.8 243.8 509.2 245.5 509.6 237.8 509.9 243.3 510.3 242.2 510.6 242.2 511.0 237.9 511.3 248.2 511.7 239.3 512.0 242.0 512.4 240.2 512.7 248.2 513.1 249.4 513.5 244.5 513.8 248.0 514.2 248.4 514.5 246.4 514.9 248.2 515.2 250.9 515.6 245.9 515.9 250.3 516.3 249.7 516.6 252.6 517.0 244.6 517.4 247.1 517.7 243.3 518.1 238.8 518.4 244.0 518.8 241.5 519.1 248.1 519.5 246.8 519.8 243.0 520.2 240.2 520.6 235.6 520.9 241.1 521.3 238.3 521.6 240.5 522.0 246.2 522.3 243.2 522.7 238.7 523.0 244.8 523.4 252.4 523.7 251.7 524.1 251.4 524.5 249.4 524.8 247.9 525.2 245.6 525.5 247.3 525.9 251.5 526.2 242.5 526.6 247.4 526.9 255.8 527.3 252.8 527.6 255.4 528.0 255.1 528.4 251.1 528.7 250.1 529.1 248.8 529.4 240.9 529.8 243.6 530.1 248.7 530.5 248.8 530.8 249.7 531.2 242.1 531.5 242.0 531.9 244.3 532.3 244.8 532.6 241.1 533.0 245.8 533.3 244.6 533.7 244.9 534.0 250.9 534.4 246.2 534.7 251.3 535.1 247.1 535.4 246.8 535.8 249.8 536.2 249.8 536.5 251.7 536.9 258.2 537.2 252.3 537.6 257.7 537.9 258.1 538.3 256.9 538.6 258.7 539.0 256.4 539.3 258.0 539.7 257.3 540.1 256.4 540.4 253.6 540.8 253.8 541.1 252.1 541.5 251.4 541.8 248.1 542.2 250.6 542.5 249.9 542.9 256.0 543.2 252.1 543.6 252.3 544.0 252.5 544.3 255.0 544.7 259.6 545.0 257.9 545.4 261.0 545.7 257.2 546.1 259.6 546.4 254.3 546.8 262.4 547.2 262.9 547.5 259.0 547.9 258.7 548.2 257.3 548.6 262.3 548.9 257.1 549.3 259.1 549.6 262.9 550.0 259.2 550.3 255.0 550.7 257.9 551.1 259.0 551.4 253.8 551.8 257.0 552.1 261.0 552.5 264.6 552.8 257.9 553.2 256.4 553.5 257.9 553.9 255.3 554.2 254.6 554.6 259.4 555.0 263.9 555.3 257.7 555.7 261.8 556.0 259.4 556.4 260.9 556.7 261.1 557.1 263.6 557.4 265.4 557.8 261.3 558.1 255.2 558.5 260.3 558.9 262.2 559.2 260.1 559.6 257.4 559.9 263.6 560.3 257.7 560.6 263.5 561.0 262.0 561.3 258.8 561.7 253.8 562.0 254.9 562.4 259.7 562.8 260.3 563.1 264.5 563.5 265.9 563.8 262.8 564.2 266.3 564.5 261.8 564.9 263.5 565.2 261.5 565.6 266.2 565.9 264.2 566.3 267.6 566.7 267.0 567.0 270.2 567.4 271.5 567.7 268.7 568.1 268.7 568.4 265.6 568.8 259.5 569.1 259.5 569.5 262.0 569.8 263.4 570.2 262.1 570.6 268.0 570.9 270.4 571.3 269.4 571.6 270.4 572.0 272.6 572.3 272.5 572.7 275.3 573.0 272.2 573.4 272.8 573.8 273.5 574.1 278.4 574.5 271.3 574.8 274.3 575.2 274.6 575.5 273.5 575.9 275.4 576.2 268.5 576.6 272.3 576.9 268.8 577.3 271.1 577.7 266.7 578.0 267.5 578.4 270.2 578.7 272.6 579.1 272.9 579.4 276.0 579.8 271.9 580.1 275.4 580.5 275.7 580.8 283.7 581.2 278.4 581.6 280.7 581.9 279.8 582.3 277.3 582.6 278.4 583.0 283.5 583.3 277.1 583.7 285.4 584.0 281.7 584.4 281.0 584.7 275.5 585.1 273.5 585.5 270.8 585.8 279.6 586.2 270.6 586.5 271.7 586.9 275.0 587.2 272.5 587.6 271.3 587.9 273.6 588.3 276.9 588.6 276.4 589.0 277.8 589.4 278.0 589.7 273.9 590.1 276.4 590.4 276.8 590.8 276.7 591.1 275.6 591.5 279.1 591.8 281.4 592.2 279.7 592.5 278.4 592.9 282.8 593.3 278.8 593.6 291.8 594.0 279.7 594.3 281.7 594.7 284.1 595.0 287.2 595.4 292.7 595.7 288.9 596.1 290.2 596.5 293.8 596.8 288.8 597.2 289.5 597.5 287.5 597.9 286.5 598.2 288.0 598.6 290.6 598.9 281.4 599.3 285.4 599.6 287.4 600.0 283.7 600.4 281.5 600.7 285.7 601.1 280.5 601.4 277.6 601.8 277.7 602.1 277.8 602.5 277.8 602.8 283.2 603.2 289.0 603.5 292.4 603.9 291.5 604.3 291.0 604.6 293.4 605.0 300.3 605.3 289.7 605.7 286.1 606.0 285.8 606.4 286.1 606.7 286.3 607.1 287.1 607.4 291.5 607.8 288.1 608.2 296.9 608.5 293.4 608.9 294.1 609.2 288.4 609.6 289.3 609.9 287.9 610.3 291.7 610.6 293.5 611.0 293.3 611.3 291.5 611.7 286.2 612.1 285.9 612.4 285.0 612.8 289.1 613.1 293.3 613.5 291.4 613.8 289.6 614.2 292.2 614.5 286.4 614.9 289.5 615.2 297.6 615.6 289.0 616.0 288.9 616.3 294.8 616.7 286.8 617.0 296.2 617.4 289.9 617.7 301.1 618.1 293.6 618.4 291.8 618.8 295.0 619.1 295.5 619.5 302.5 619.9 300.8 620.2 297.0 620.6 306.0 620.9 296.6 621.3 296.6 621.6 296.7 622.0 300.5 622.3 302.5 622.7 300.3 623.1 305.1 623.4 304.2 623.8 307.3 624.1 303.9 624.5 307.5 624.8 295.3 625.2 302.1 625.5 295.0 625.9 293.2 626.2 298.8 626.6 297.5 627.0 304.9 627.3 307.1 627.7 298.3 628.0 299.0 628.4 296.7 628.7 295.8 629.1 300.1 629.4 298.5 629.8 297.8 630.1 296.2 630.5 301.1 630.9 299.7 631.2 294.1 631.6 296.0 631.9 292.2 632.3 297.6 632.6 298.8 633.0 292.9 633.3 300.2 633.7 305.5 634.0 304.0 634.4 308.7 634.8 307.7 635.1 316.3 635.5 309.9 635.8 306.1 636.2 302.9 636.5 308.0 636.9 300.2 637.2 302.6 637.6 302.4 637.9 301.9 638.3 304.0 638.7 296.1 639.0 299.7 639.4 300.0 639.7 308.4 640.1 312.6 640.4 304.5 640.8 303.9 641.1 305.4 641.5 301.5 641.8 300.7 642.2 308.5 642.6 307.5 642.9 306.7 643.3 312.6 643.6 311.1 644.0 307.3 644.3 304.9 644.7 302.6 645.0 307.8 645.4 301.4 645.8 302.1 646.1 311.3 646.5 306.9 646.8 305.8 647.2 303.8 647.5 302.7 647.9 298.8 648.2 301.4 648.6 306.1 648.9 309.9 649.3 306.1 649.7 308.1 650.0 308.3 650.4 305.7 650.7 308.2 651.1 306.4 651.4 309.0 651.8 310.9 652.1 304.6 652.5 312.6 652.8 312.8 653.2 312.8 653.6 315.2 653.9 313.7 654.3 315.9 654.6 316.8 655.0 319.8 655.3 312.5 655.7 316.0 656.0 316.5 656.4 318.3 656.7 315.7 657.1 312.0 657.5 313.3 657.8 312.8 658.2 310.6 658.5 313.8 658.9 316.3 659.2 319.0 659.6 316.0 659.9 312.9 660.3 311.7 660.6 318.6 661.0 318.4 661.4 316.7 661.7 316.1 662.1 313.1 662.4 322.2 662.8 316.6 663.1 320.9 663.5 326.6 663.8 326.4 664.2 314.7 664.5 314.4 664.9 318.1 665.3 315.6 665.6 312.6 666.0 307.0 666.3 311.4 666.7 308.2 667.0 313.1 667.4 316.8 667.7 326.4 668.1 322.7 668.4 324.8 668.8 320.3 669.2 319.9 669.5 315.5 669.9 320.1 670.2 315.2 670.6 312.8 670.9 317.9 671.3 320.6 671.6 321.0 672.0 319.6 672.4 326.6 672.7 317.0 673.1 311.1 673.4 313.5 673.8 313.3 674.1 315.1 674.5 317.0 674.8 317.9 675.2 324.5 675.5 322.4 675.9 329.9 676.3 322.6 676.6 323.3 677.0 317.8 677.3 315.4 677.7 317.7 678.0 316.6 678.4 318.5 678.7 324.4 679.1 320.1 679.4 315.1 679.8 321.7 680.2 330.1 680.5 320.8 680.9 322.2 681.2 325.4 681.6 329.6 681.9 325.4 682.3 327.1 682.6 329.0 683.0 328.1 683.3 324.9 683.7 323.3 684.1 320.0 684.4 318.4 684.8 315.2 685.1 321.2 685.5 332.2 685.8 324.3 686.2 324.4 686.5 327.2 686.9 322.6 687.2 333.1 687.6 334.5 688.0 334.8 688.3 332.7 688.7 332.3 689.0 330.6 689.4 332.5 689.7 330.9 690.1 329.9 690.4 328.4 690.8 321.5 691.1 336.4 691.5 327.2 691.9 327.0 692.2 327.1 692.6 334.3 692.9 328.6 693.3 328.8 693.6 324.9 694.0 324.8 694.3 325.4 694.7 321.0 695.0 320.4 695.4 323.6 695.8 323.3 696.1 324.6 696.5 327.0 696.8 334.2 697.2 329.4 697.5 330.5 697.9 333.0 698.2 331.3 698.6 325.5 699.0 328.8 699.3 320.2 699.7 324.3 700.0 323.7 700.4 330.1 700.7 321.7 701.1 325.6 701.4 330.7 701.8 327.5 702.1 327.2 702.5 332.1 702.9 331.4 703.2 328.8 703.6 327.2 703.9 333.1 704.3 329.1 704.6 338.1 705.0 330.5 705.3 333.7 705.7 331.9 706.0 333.1 706.4 332.7 706.8 331.5 707.1 329.5 707.5 324.1 707.8 326.1 708.2 327.7 708.5 329.5 708.9 325.7 709.2 334.0 709.6 329.2 709.9 344.4 710.3 338.1 710.7 335.5 711.0 329.0 711.4 329.2 711.7 327.1 712.1 329.3 712.4 330.4 712.8 332.5 713.1 335.2 713.5 332.3 713.8 331.7 714.2 331.2 714.6 330.4 714.9 324.8 715.3 324.3 715.6 332.6 716.0 328.4 716.3 338.3 716.7 332.6 717.0 335.1 717.4 331.4 717.7 340.7 718.1 333.2 718.5 329.8 718.8 329.2 719.2 333.7 719.5 336.1 719.9 333.8 720.2 338.3 720.6 332.9 720.9 329.7 721.3 328.8 721.7 332.8 722.0 333.7 722.4 339.1 722.7 335.7 723.1 340.7 723.4 333.1 723.8 339.1 724.1 332.0 724.5 330.2 724.8 330.6 725.2 328.6 725.6 328.9 725.9 334.0 726.3 333.5 726.6 332.2 727.0 334.6 727.3 328.1 727.7 326.2 728.0 328.9 728.4 327.3 728.7 326.2 729.1 327.2 729.5 332.0 729.8 328.7 730.2 329.1 730.5 332.0 730.9 332.4 731.2 332.4 731.6 333.0 731.9 327.1 732.3 323.7 732.6 327.8 733.0 329.4 733.4 327.1 733.7 328.1 734.1 334.2 734.4 330.7 734.8 337.2 735.1 338.8 735.5 333.6 735.8 338.6 736.2 340.3 736.5 338.5 736.9 347.0 737.3 341.7 737.6 339.7 738.0 335.6 738.3 335.5 738.7 336.2 739.0 339.8 739.4 341.4 739.7 342.4 740.1 334.0 740.4 339.1 740.8 336.2 741.2 338.8 741.5 345.3 741.9 348.2 742.2 338.2 742.6 340.5 742.9 336.9 743.3 336.3 743.6 333.4 744.0 337.3 744.3 331.1 744.7 333.2 745.1 328.8 745.4 330.9 745.8 331.2 746.1 329.5 746.5 337.9 746.8 331.1 747.2 342.0 747.5 339.2 747.9 337.5 748.3 337.6 748.6 340.6 749.0 336.2 749.3 338.6 749.7 329.1 750.0 335.5 750.4 334.8 750.7 339.3 751.1 343.3 751.4 337.1 751.8 340.2 752.2 344.7 752.5 340.9 752.9 333.7 753.2 334.2 753.6 338.5 753.9 345.6 754.3 337.9 754.6 339.6 755.0 341.0 755.3 340.3 755.7 335.2 756.1 338.7 756.4 336.1 756.8 340.3 757.1 338.8 757.5 335.9 757.8 333.6 758.2 339.3 758.5 339.3 758.9 337.8 759.2 341.9 759.6 340.8 760.0 340.6 760.3 338.4 760.7 344.0 761.0 338.7 761.4 332.3 761.7 342.4 762.1 342.2 762.4 346.1 762.8 348.0 763.1 343.1 763.5 347.2 763.9 342.5 764.2 345.5 764.6 340.8 764.9 345.3 765.3 351.8 765.6 343.9 766.0 348.0 766.3 340.1 766.7 343.7 767.0 335.1 767.4 342.1 767.8 340.1 768.1 342.2 768.5 343.2 768.8 342.4 769.2 343.8 769.5 348.3 769.9 346.6 770.2 346.7 770.6 353.6 771.0 352.3 771.3 349.8 771.7 347.7 772.0 344.7 772.4 339.1 772.7 336.0 773.1 337.8 773.4 346.7 773.8 329.0 774.1 335.1 774.5 333.7 774.9 337.8 775.2 341.8 775.6 337.7 775.9 339.3 776.3 338.0 776.6 341.0 777.0 342.9 777.3 340.2 777.7 343.3 778.0 343.6 778.4 350.8 778.8 344.7 779.1 343.7 779.5 343.7 779.8 340.2 780.2 343.6 780.5 338.3 780.9 339.6 781.2 336.2 781.6 338.7 781.9 339.3 782.3 343.2 782.7 347.1 783.0 338.5" stroke="#58D2E8"/>
<path d="M57.0 354.8 57.3 352.9 57.7 346.4 58.1 348.6 58.4 343.3 58.8 339.7 59.1 350.2 59.5 348.3 59.8 346.6 60.2 348.4 60.5 343.3 60.9 345.3 61.2 347.7 61.6 350.4 62.0 342.5 62.3 346.1 62.7 350.4 63.0 353.4 63.4 345.1 63.7 347.2 64.1 344.7 64.4 344.5 64.8 348.9 65.1 352.7 65.5 350.6 65.9 347.0 66.2 344.4 66.6 341.5 66.9 342.9 67.3 346.3 67.6 346.5 68.0 348.9 68.3 351.2 68.7 343.8 69.0 342.2 69.4 346.7 69.8 343.6 70.1 345.4 70.5 340.9 70.8 349.7 71.2 349.0 71.5 355.0 71.9 350.7 72.2 350.5 72.6 340.1 73.0 346.2 73.3 342.7 73.7 344.0 74.0 343.6 74.4 347.3 74.7 345.5 75.1 343.0 75.4 342.4 75.8 340.7 76.1 338.5 76.5 332.3 76.9 337.2 77.2 338.0 77.6 335.8 77.9 339.9 78.3 342.7 78.6 338.8 79.0 342.3 79.3 341.2 79.7 345.3 80.0 343.2 80.4 341.0 80.8 346.1 81.1 343.8 81.5 339.0 81.8 342.1 82.2 349.6 82.5 333.3 82.9 336.0 83.2 340.5 83.6 353.7 83.9 345.2 84.3 350.5 84.7 346.6 85.0 349.2 85.4 348.0 85.7 345.9 86.1 345.8 86.4 348.2 86.8 338.0 87.1 341.5 87.5 339.6 87.8 339.6 88.2 342.7 88.6 340.2 88.9 341.6 89.3 337.2 89.6 339.0 90.0 344.0 90.3 340.1 90.7 344.5 91.0 341.5 91.4 341.6 91.7 340.4 92.1 345.2 92.5 350.7 92.8 339.4 93.2 344.2 93.5 338.7 93.9 337.8 94.2 345.6 94.6 345.4 94.9 341.1 95.3 340.5 95.7 337.9 96.0 340.0 96.4 340.0 96.7 338.4 97.1 336.8 97.4 337.6 97.8 335.7 98.1 332.0 98.5 336.0 98.8 346.6 99.2 344.2 99.6 338.3 99.9 336.5 100.3 332.9 100.6 338.8 101.0 337.1 101.3 337.8 101.7 340.5 102.0 343.9 102.4 345.4 102.7 351.5 103.1 337.0 103.5 343.0 103.8 346.2 104.2 347.2 104.5 342.5 104.9 337.8 105.2 336.9 105.6 330.8 105.9 332.7 106.3 325.9 106.6 329.1 107.0 325.9 107.4 336.3 107.7 339.8 108.1 332.8 108.4 335.5 108.8 344.4 109.1 340.6 109.5 344.2 109.8 349.7 110.2 345.6 110.5 341.7 110.9 337.4 111.3 335.9 111.6 332.8 112.0 332.6 112.3 331.3 112.7 345.3 113.0 339.2 113.4 334.3 113.7 329.1 114.1 334.1 114.4 336.6 114.8 333.7 115.2 341.7 115.5 336.0 115.9 338.5 116.2 334.9 116.6 339.8 116.9 338.0 117.3 342.6 117.6 335.5 118.0 338.6 118.3 335.3 118.7 336.0 119.1 333.0 119.4 340.5 119.8 336.3 120.1 335.6 120.5 337.6 120.8 338.3 121.2 344.0 121.5 342.6 121.9 338.2 122.3 341.0 122.6 336.0 123.0 338.8 123.3 338.1 123.7 335.5 124.0 342.4 124.4 339.7 124.7 341.7 125.1 341.2 125.4 336.0 125.8 335.2 126.2 336.7 126.5 325.2 126.9 330.5 127.2 335.4 127.6 333.0 127.9 329.2 128.3 334.3 128.6 332.2 129.0 342.7 129.3 345.4 129.7 342.5 130.1 346.0 130.4 336.3 130.8 329.7 131.1 327.9 131.5 328.5 131.8 338.5 132.2 330.2 132.5 334.7 132.9 331.4 133.2 330.5 133.6 334.6 134.0 332.5 134.3 333.9 134.7 341.0 135.0 332.6 135.4 326.3 135.7 330.5 136.1 327.7 136.4 328.3 136.8 324.6 137.1 327.9 137.5 327.9 137.9 336.0 138.2 333.2 138.6 328.5 138.9 330.6 139.3 322.2 139.6 326.2 140.0 323.1 140.3 325.6 140.7 324.9 141.0 319.6 141.4 318.3 141.8 330.8 142.1 323.4 142.5 334.1 142.8 327.3 143.2 329.7 143.5 326.2 143.9 325.1 144.2 327.4 144.6 333.6 145.0 331.5 145.3 326.7 145.7 324.9 146.0 326.3 146.4 325.4 146.7 326.7 147.1 324.3 147.4 327.3 147.8 327.1 148.1 327.0 148.5 323.9 148.9 323.8 149.2 324.8 149.6 324.0 149.9 322.8 150.3 321.7 150.6 320.1 151.0 319.1 151.3 326.0 151.7 323.8 152.0 335.2 152.4 329.0 152.8 331.2 153.1 327.9 153.5 326.7 153.8 322.6 154.2 325.4 154.5 320.2 154.9 321.0 155.2 323.3 155.6 328.1 155.9 329.3 156.3 321.4 156.7 324.2 157.0 312.3 157.4 320.8 157.7 322.2 158.1 327.3 158.4 330.9 158.8 330.3 159.1 326.4 159.5 322.3 159.8 320.9 160.2 315.4 160.6 313.3 160.9 317.0 161.3 322.8 161.6 318.3 162.0 324.3 162.3 327.0 162.7 326.6 163.0 331.5 163.4 325.9 163.7 324.1 164.1 319.6 164.5 322.8 164.8 323.6 165.2 318.1 165.5 326.8 165.9 321.6 166.2 325.3 166.6 326.1 166.9 322.6 167.3 331.6 167.6 331.5 168.0 326.9 168.4 324.6 168.7 319.7 169.1 326.0 169.4 321.5 169.8 326.2 170.1 326.9 170.5 323.0 170.8 323.3 171.2 323.3 171.6 318.2 171.9 324.9 172.3 317.4 172.6 316.4 173.0 318.8 173.3 317.4 173.7 322.6 174.0 319.3 174.4 330.0 174.7 319.6 175.1 323.3 175.5 323.0 175.8 319.6 176.2 318.4 176.5 316.8 176.9 311.7 177.2 314.9 177.6 309.7 177.9 321.6 178.3 326.9 178.6 321.8 179.0 323.4 179.4 320.4 179.7 315.4 180.1 322.3 180.4 318.2 180.8 316.6 181.1 318.6 181.5 316.9 181.8 311.2 182.2 316.0 182.5 310.7 182.9 326.2 183.3 312.2 183.6 322.3 184.0 322.5 184.3 315.0 184.7 314.9 185.0 317.3 185.4 315.9 185.7 312.1 186.1 318.9 186.4 322.2 186.8 320.2 187.2 322.6 187.5 318.5 187.9 318.0 188.2 323.8 188.6 315.5 188.9 320.0 189.3 320.3 189.6 316.2 190.0 320.6 190.3 318.8 190.7 313.2 191.1 315.3 191.4 305.2 191.8 310.5 192.1 308.8 192.5 309.7 192.8 310.7 193.2 309.4 193.5 312.3 193.9 309.2 194.2 311.6 194.6 313.1 195.0 317.2 195.3 315.5 195.7 314.0 196.0 311.8 196.4 309.4 196.7 311.2 197.1 306.9 197.4 313.9 197.8 303.1 198.2 305.0 198.5 303.2 198.9 299.6 199.2 307.0 199.6 305.5 199.9 307.6 200.3 308.0 200.6 308.4 201.0 311.8 201.3 313.5 201.7 312.6 202.1 308.3 202.4 313.6 202.8 308.4 203.1 302.5 203.5 305.7 203.8 297.5 204.2 299.2 204.5 299.9 204.9 296.7 205.2 302.9 205.6 298.6 206.0 302.5 206.3 299.9 206.7 299.3 207.0 295.6 207.4 305.2 207.7 295.5 208.1 299.4 208.4 297.8 208.8 297.4 209.1 298.4 209.5 309.2 209.9 305.6 210.2 301.3 210.6 309.6 210.9 298.0 211.3 295.1 211.6 298.1 212.0 299.4 212.3 291.6 212.7 303.2 213.0 295.1 213.4 297.0 213.8 295.1 214.1 296.6 214.5 297.2 214.8 296.0 215.2 296.5 215.5 297.9 215.9 294.6 216.2 297.0 216.6 297.3 216.9 298.2 217.3 301.2 217.7 306.9 218.0 299.7 218.4 298.9 218.7 299.5 219.1 302.5 219.4 300.0 219.8 303.9 220.1 301.4 220.5 303.0 220.9 297.8 221.2 295.3 221.6 297.2 221.9 298.9 222.3 292.5 222.6 294.6 223.0 292.5 223.3 292.3 223.7 299.8 224.0 296.2 224.4 287.4 224.8 289.3 225.1 293.5 225.5 298.9 225.8 302.6 226.2 307.0 226.5 302.4 226.9 298.7 227.2 299.5 227.6 291.2 227.9 294.8 228.3 289.9 228.7 292.1 229.0 296.1 229.4 291.1 229.7 296.8 230.1 294.8 230.4 287.7 230.8 287.6 231.1 300.2 231.5 287.5 231.8 289.5 232.2 293.9 232.6 293.0 232.9 291.8 233.3 291.3 233.6 294.2 234.0 292.9 234.3 293.2 234.7 287.2 235.0 302.2 235.4 293.2 235.7 290.7 236.1 291.6 236.5 291.7 236.8 292.3 237.2 286.9 237.5 282.4 237.9 288.0 238.2 289.4 238.6 285.0 238.9 296.3 239.3 294.3 239.6 296.6 240.0 294.3 240.4 287.7 240.7 283.2 241.1 279.2 241.4 283.5 241.8 273.5 242.1 277.7 242.5 278.2 242.8 280.1 243.2 279.8 243.5 279.5 243.9 285.9 244.3 273.8 244.6 277.0 245.0 273.1 245.3 269.6 245.7 270.7 246.0 272.9 246.4 278.3 246.7 283.8 247.1 286.7 247.5 284.7 247.8 289.1 248.2 292.4 248.5 285.5 248.9 285.4 249.2 283.7 249.6 283.5 249.9 281.8 250.3 282.5 250.6 277.6 251.0 277.1 251.4 275.5 251.7 277.5 252.1 276.3 252.4 279.7 252.8 277.3 253.1 276.8 253.5 272.1 253.8 273.3 254.2 273.6 254.5 283.0 254.9 274.4 255.3 273.8 255.6 278.1 256.0 283.8 256.3 279.5 256.7 277.7 257.0 280.2 257.4 278.2 257.7 280.1 258.1 274.8 258.4 274.4 258.8 275.1 259.2 277.4 259.5 282.0 259.9 278.5 260.2 278.2 260.6 279.1 260.9 274.3 261.3 278.4 261.6 273.7 262.0 266.8 262.3 271.4 262.7 272.3 263.1 270.3 263.4 272.9 263.8 272.1 264.1 267.2 264.5 271.4 264.8 277.8 265.2 274.5 265.5 273.8 265.9 268.5 266.2 270.8 266.6 274.0 267.0 276.4 267.3 267.9 267.7 277.5 268.0 274.4 268.4 269.1 268.7 270.9 269.1 272.9 269.4 268.2 269.8 269.1 270.2 270.5 270.5 263.0 270.9 266.5 271.2 263.8 271.6 264.8 271.9 268.4 272.3 262.3 272.6 260.0 273.0 268.5 273.3 267.2 273.7 265.0 274.1 262.7 274.4 271.1 274.8 260.8 275.1 266.1 275.5 265.7 275.8 268.4 276.2 259.7 276.5 269.3 276.9 266.6 277.2 259.2 277.6 269.9 278.0 265.0 278.3 261.6 278.7 259.5 279.0 260.4 279.4 258.1 279.7 258.4 280.1 249.9 280.4 258.5 280.8 257.3 281.1 254.3 281.5 255.4 281.9 259.7 282.2 256.5 282.6 264.1 282.9 258.8 283.3 261.7 283.6 265.0 284.0 261.3 284.3 263.3 284.7 261.6 285.0 256.6 285.4 267.5 285.8 263.8 286.1 265.2 286.5 259.2 286.8 262.3 287.2 272.9 287.5 255.7 287.9 257.3 288.2 258.0 288.6 261.0 288.9 265.2 289.3 257.4 289.7 263.6 290.0 254.3 290.4 257.7 290.7 255.2 291.1 253.0 291.4 249.8 291.8 252.8 292.1 254.0 292.5 256.9 292.8 254.3 293.2 256.4 293.6 261.2 293.9 252.0 294.3 255.9 294.6 250.2 295.0 245.1 295.3 245.7 295.7 244.8 296.0 252.4 296.4 253.5 296.8 250.1 297.1 248.5 297.5 251.0 297.8 246.4 298.2 248.1 298.5 256.8 298.9 246.9 299.2 242.6 299.6 246.4 299.9 246.2 300.3 253.5 300.7 251.7 301.0 246.5 301.4 254.5 301.7 251.5 302.1 245.2 302.4 250.5 302.8 247.2 303.1 239.6 303.5 248.4 303.8 248.5 304.2 250.9 304.6 253.2 304.9 252.3 305.3 250.5 305.6 251.3 306.0 247.5 306.3 249.9 306.7 250.3 307.0 253.7 307.4 251.3 307.7 255.3 308.1 247.4 308.5 247.5 308.8 249.3 309.2 254.5 309.5 258.7 309.9 241.5 310.2 247.1 310.6 250.0 310.9 238.2 311.3 238.9 311.6 248.7 312.0 237.1 312.4 238.5 312.7 243.3 313.1 238.2 313.4 240.9 313.8 240.9 314.1 242.9 314.5 240.9 314.8 238.6 315.2 231.2 315.5 242.2 315.9 238.4 316.3 241.3 316.6 241.8 317.0 241.7 317.3 237.4 317.7 246.6 318.0 244.4 318.4 244.8 318.7 247.8 319.1 245.7 319.4 240.7 319.8 241.5 320.2 249.7 320.5 250.1 320.9 240.0 321.2 248.9 321.6 235.7 321.9 236.7 322.3 241.1 322.6 245.7 323.0 241.1 323.4 237.7 323.7 236.6 324.1 234.3 324.4 237.7 324.8 231.8 325.1 235.3 325.5 240.6 325.8 242.4 326.2 234.1 326.5 231.6 326.9 244.1 327.3 248.6 327.6 234.2 328.0 236.8 328.3 236.8 328.7 241.1 329.0 242.3 329.4 248.3 329.7 242.5 330.1 238.9 330.4 237.4 330.8 233.2 331.2 233.3 331.5 232.7 331.9 226.6 332.2 234.3 332.6 236.4 332.9 236.1 333.3 238.7 333.6 239.5 334.0 238.4 334.3 236.9 334.7 237.4 335.1 233.0 335.4 232.9 335.8 230.5 336.1 234.8 336.5 234.1 336.8 239.5 337.2 237.0 337.5 232.1 337.9 236.1 338.2 234.0 338.6 229.1 339.0 229.9 339.3 236.6 339.7 235.9 340.0 233.5 340.4 233.9 340.7 241.5 341.1 231.9 341.4 237.5 341.8 235.2 342.1 229.1 342.5 232.0 342.9 232.1 343.2 230.8 343.6 233.8 343.9 228.8 344.3 232.9 344.6 228.4 345.0 234.4 345.3 232.0 345.7 236.7 346.1 235.3 346.4 233.6 346.8 242.4 347.1 234.4 347.5 228.5 347.8 228.3 348.2 233.8 348.5 233.9 348.9 238.5 349.2 232.7 349.6 233.1 350.0 235.3 350.3 225.8 350.7 226.6 351.0 227.9 351.4 227.6 351.7 227.6 352.1 228.1 352.4 219.8 352.8 227.2 353.1 231.5 353.5 229.8 353.9 224.8 354.2 233.6 354.6 226.0 354.9 229.1 355.3 228.7 355.6 230.5 356.0 237.2 356.3 235.5 356.7 228.7 357.0 228.5 357.4 222.0 357.8 225.7 358.1 228.3 358.5 228.4 358.8 235.3 359.2 223.6 359.5 231.5 359.9 231.6 360.2 228.1 360.6 176.4 360.9 136.0 361.3 122.7 361.7 119.2 362.0 119.4 362.4 119.9 362.7 119.9 363.1 117.7 363.4 119.1 363.8 114.2 364.1 118.3 364.5 123.3 364.8 127.3 365.2 117.4 365.6 121.4 365.9 128.8 366.3 124.1 366.6 124.1 367.0 130.7 367.3 127.4 367.7 120.6 368.0 123.0 368.4 124.5 368.7 126.0 369.1 123.8 369.5 122.7 369.8 127.1 370.2 124.1 370.5 126.5 370.9 127.9 371.2 122.3 371.6 120.9 371.9 118.5 372.3 120.4 372.7 118.7 373.0 131.3 373.4 122.1 373.7 127.8 374.1 122.6 374.4 129.0 374.8 119.1 375.1 123.5 375.5 120.9 375.8 131.2 376.2 124.1 376.6 131.1 376.9 120.8 377.3 127.1 377.6 122.2 378.0 126.7 378.3 127.5 378.7 128.1 379.0 131.7 379.4 123.9 379.7 122.5 380.1 121.9 380.5 122.0 380.8 127.9 381.2 130.6 381.5 130.2 381.9 128.2 382.2 128.1 382.6 121.9 382.9 123.1 383.3 127.4 383.6 125.8 384.0 124.6 384.4 132.2 384.7 116.4 385.1 125.9 385.4 125.6 385.8 114.5 386.1 122.0 386.5 128.4 386.8 124.1 387.2 120.4 387.5 116.6 387.9 122.7 388.3 121.7 388.6 128.0 389.0 120.4 389.3 119.8 389.7 119.9 390.0 122.2 390.4 123.5 390.7 123.4 391.1 121.2 391.4 121.1 391.8 119.6 392.2 125.9 392.5 119.1 392.9 129.8 393.2 122.8 393.6 123.1 393.9 118.9 394.3 119.4 394.6 122.3 395.0 127.8 395.4 123.3 395.7 123.1 396.1 122.2 396.4 135.4 396.8 122.8 397.1 122.8 397.5 124.0 397.8 120.8 398.2 126.9 398.5 123.7 398.9 126.5 399.3 129.1 399.6 122.8 400.0 123.8 400.3 122.3 400.7 129.9 401.0 127.9 401.4 127.0 401.7 127.2 402.1 119.5 402.4 131.6 402.8 120.2 403.2 116.5 403.5 123.0 403.9 117.3 404.2 121.5 404.6 124.5 404.9 127.8 405.3 126.4 405.6 126.0 406.0 134.0 406.3 119.1 406.7 125.0 407.1 124.3 407.4 120.2 407.8 116.8 408.1 116.7 408.5 127.2 408.8 123.5 409.2 122.5 409.5 131.9 409.9 120.9 410.2 119.4 410.6 128.1 411.0 122.0 411.3 125.8 411.7 118.1 412.0 121.8 412.4 129.0 412.7 123.3 413.1 125.5 413.4 127.6 413.8 122.6 414.1 121.2 414.5 121.1 414.9 124.4 415.2 123.1 415.6 124.7 415.9 122.0 416.3 120.5 416.6 120.8 417.0 117.5 417.3 124.7 417.7 118.2 418.0 123.6 418.4 130.9 418.8 135.2 419.1 131.8 419.5 122.3 419.8 121.1 420.2 134.1 420.5 132.1 420.9 121.9 421.2 120.5 421.6 128.9 422.0 124.3 422.3 118.6 422.7 125.5 423.0 122.3 423.4 129.4 423.7 122.8 424.1 128.2 424.4 124.3 424.8 127.9 425.1 126.0 425.5 125.9 425.9 124.9 426.2 124.9 426.6 129.5 426.9 123.2 427.3 120.5 427.6 122.6 428.0 118.6 428.3 124.6 428.7 119.6 429.0 125.9 429.4 123.3 429.8 119.9 430.1 124.2 430.5 126.9 430.8 131.9 431.2 126.7 431.5 125.7 431.9 123.3 432.2 128.2 432.6 132.7 432.9 130.6 433.3 118.6 433.7 130.5 434.0 122.6 434.4 120.0 434.7 116.5 435.1 115.5 435.4 129.4 435.8 124.4 436.1 127.7 436.5 122.3 436.8 120.1 437.2 126.1 437.6 122.9 437.9 125.5 438.3 118.2 438.6 124.4 439.0 116.2 439.3 113.3 439.7 128.6 440.0 121.9 440.4 120.1 440.7 120.4 441.1 122.7 441.5 132.9 441.8 126.7 442.2 120.6 442.5 120.7 442.9 116.3 443.2 121.5 443.6 123.7 443.9 121.4 444.3 122.6 444.6 120.7 445.0 126.5 445.4 122.8 445.7 123.3 446.1 123.9 446.4 129.9 446.8 121.9 447.1 123.6 447.5 124.3 447.8 128.2 448.2 121.6 448.6 115.4 448.9 127.3 449.3 126.0 449.6 127.9 450.0 123.2 450.3 132.7 450.7 122.8 451.0 122.4 451.4 121.2 451.7 123.5 452.1 124.4 452.5 120.6 452.8 133.7 453.2 125.7 453.5 118.0 453.9 122.2 454.2 120.3 454.6 133.7 454.9 128.1 455.3 123.5 455.6 130.0 456.0 117.3 456.4 125.3 456.7 125.4 457.1 122.4 457.4 121.8 457.8 127.1 458.1 127.7 458.5 124.7 458.8 119.5 459.2 130.3 459.5 125.3 459.9 120.3 460.3 126.4 460.6 118.9 461.0 118.6 461.3 118.9 461.7 121.7 462.0 117.5 462.4 123.6 462.7 117.0 463.1 118.8 463.4 125.6 463.8 119.7 464.2 120.9 464.5 119.1 464.9 119.6 465.2 132.3 465.6 115.4 465.9 128.2 466.3 122.3 466.6 124.2 467.0 129.2 467.3 116.5 467.7 123.2 468.1 113.5 468.4 121.0 468.8 122.1 469.1 137.3 469.5 127.0 469.8 122.9 470.2 121.8 470.5 119.6 470.9 116.7 471.3 124.3 471.6 124.6 472.0 116.8 472.3 123.3 472.7 120.9 473.0 115.4 473.4 118.8 473.7 123.7 474.1 127.3 474.4 124.6 474.8 121.6 475.2 125.2 475.5 135.9 475.9 121.4 476.2 133.2 476.6 120.4 476.9 124.0 477.3 128.2 477.6 132.5 478.0 161.8 478.3 220.4 478.7 224.0 479.1 223.5 479.4 229.1 479.8 227.0 480.1 222.6 480.5 226.5 480.8 224.7 481.2 233.6 481.5 229.1 481.9 221.0 482.2 228.2 482.6 227.7 483.0 229.2 483.3 231.9 483.7 238.2 484.0 227.2 484.4 226.4 484.7 227.8 485.1 231.4 485.4 226.7 485.8 221.2 486.1 222.3 486.5 221.3 486.9 224.1 487.2 230.1 487.6 240.0 487.9 242.7 488.3 239.8 488.6 232.6 489.0 232.0 489.3 229.7 489.7 227.5 490.0 226.5 490.4 233.5 490.8 233.6 491.1 235.7 491.5 231.8 491.8 230.4 492.2 226.9 492.5 223.5 492.9 230.5 493.2 220.6 493.6 226.2 493.9 233.1 494.3 235.3 494.7 234.1 495.0 239.8 495.4 235.9 495.7 233.4 496.1 238.1 496.4 235.2 496.8 231.6 497.1 228.1 497.5 238.5 497.9 241.4 498.2 237.3 498.6 237.0 498.9 234.8 499.3 231.5 499.6 241.9 500.0 236.6 500.3 245.9 500.7 244.6 501.0 247.1 501.4 236.1 501.8 238.2 502.1 240.4 502.5 235.8 502.8 234.5 503.2 242.7 503.5 244.1 503.9 245.9 504.2 236.5 504.6 235.3 504.9 241.5 505.3 239.4 505.7 235.6 506.0 253.4 506.4 240.4 506.7 240.3 507.1 250.0 507.4 240.4 507.8 237.1 508.1 235.7 508.5 236.6 508.8 243.8 509.2 244.9 509.6 237.7 509.9 242.5 510.3 242.8 510.6 243.7 511.0 236.6 511.3 248.3 511.7 236.7 512.0 241.2 512.4 239.2 512.7 250.4 513.1 248.6 513.5 244.5 513.8 247.6 514.2 248.5 514.5 245.7 514.9 248.3 515.2 250.5 515.6 247.8 515.9 250.6 516.3 252.3 516.6 251.9 517.0 243.9 517.4 247.0 517.7 242.8 518.1 237.1 518.4 247.0 518.8 242.0 519.1 249.9 519.5 247.6 519.8 242.1 520.2 239.6 520.6 235.5 520.9 244.8 521.3 240.1 521.6 243.6 522.0 247.7 522.3 244.4 522.7 238.4 523.0 243.5 523.4 251.4 523.7 249.6 524.1 250.8 524.5 249.8 524.8 250.6 525.2 247.5 525.5 249.0 525.9 254.0 526.2 241.0 526.6 247.0 526.9 256.8 527.3 250.5 527.6 253.4 528.0 253.5 528.4 250.4 528.7 249.4 529.1 249.2 529.4 239.5 529.8 243.1 530.1 248.9 530.5 248.6 530.8 250.2 531.2 241.9 531.5 241.7 531.9 242.9 532.3 244.1 532.6 241.3 533.0 245.1 533.3 245.2 533.7 246.8 534.0 250.9 534.4 249.2 534.7 252.6 535.1 247.2 535.4 246.1 535.8 249.5 536.2 251.4 536.5 253.1 536.9 259.5 537.2 254.4 537.6 261.8 537.9 259.1 538.3 258.9 538.6 260.1 539.0 256.8 539.3 258.6 539.7 261.7 540.1 258.0 540.4 252.8 540.8 255.8 541.1 248.8 541.5 248.6 541.8 246.3 542.2 251.0 542.5 250.0 542.9 255.1 543.2 249.9 543.6 250.2 544.0 250.1 544.3 253.1 544.7 260.1 545.0 256.4 545.4 262.3 545.7 259.6 546.1 261.7 546.4 255.8 546.8 262.0 547.2 263.1 547.5 259.3 547.9 255.4 548.2 257.2 548.6 261.8 548.9 256.6 549.3 259.2 549.6 263.3 550.0 260.9 550.3 254.4 550.7 258.9 551.1 259.2 551.4 253.9 551.8 259.8 552.1 262.9 552.5 265.2 552.8 258.0 553.2 256.4 553.5 257.0 553.9 256.4 554.2 255.0 554.6 260.0 555.0 264.9 555.3 257.2 555.7 261.0 556.0 258.8 556.4 260.8 556.7 260.5 557.1 264.0 557.4 265.0 557.8 263.4 558.1 258.7 558.5 261.9 558.9 262.8 559.2 261.3 559.6 258.0 559.9 264.8 560.3 257.5 560.6 263.7 561.0 263.7 561.3 258.7 561.7 254.4 562.0 253.5 562.4 258.9 562.8 257.6 563.1 263.8 563.5 266.7 563.8 262.5 564.2 265.7 564.5 259.9 564.9 262.7 565.2 260.4 565.6 266.8 565.9 265.7 566.3 269.3 566.7 264.6 567.0 269.4 567.4 271.5 567.7 270.3 568.1 271.8 568.4 268.2 568.8 261.6 569.1 262.9 569.5 266.6 569.8 266.6 570.2 263.4 570.6 269.4 570.9 272.0 571.3 268.5 571.6 269.1 572.0 272.9 572.3 271.7 572.7 274.6 573.0 272.8 573.4 275.8 573.8 273.9 574.1 280.5 574.5 272.0 574.8 275.2 575.2 274.9 575.5 274.6 575.9 275.4 576.2 269.2 576.6 273.6 576.9 269.2 577.3 273.2 577.7 269.7 578.0 268.8 578.4 272.7 578.7 274.9 579.1 276.1 579.4 276.9 579.8 273.1 580.1 278.7 580.5 275.9 580.8 285.7 581.2 278.8 581.6 281.0 581.9 280.5 582.3 279.0 582.6 277.1 583.0 283.9 583.3 278.6 583.7 288.4 584.0 280.3 584.4 278.9 584.7 273.9 585.1 277.2 585.5 270.2 585.8 278.9 586.2 271.2 586.5 273.4 586.9 278.8 587.2 276.1 587.6 273.9 587.9 275.4 588.3 277.2 588.6 279.8 589.0 280.4 589.4 278.4 589.7 272.8 590.1 276.0 590.4 275.0 590.8 274.5 591.1 277.1 591.5 278.4 591.8 283.8 592.2 279.1 592.5 280.1 592.9 281.6 593.3 277.4 593.6 290.5 594.0 280.3 594.3 283.1 594.7 285.6 595.0 289.0 595.4 293.8 595.7 289.3 596.1 289.1 596.5 293.2 596.8 288.2 597.2 288.9 597.5 286.9 597.9 286.5 598.2 293.5 598.6 294.4 598.9 283.5 599.3 288.2 599.6 290.4 600.0 287.5 600.4 283.8 600.7 287.3 601.1 280.4 601.4 278.8 601.8 276.4 602.1 276.5 602.5 277.2 602.8 282.5 603.2 287.4 603.5 294.6 603.9 294.4 604.3 295.1 604.6 298.2 605.0 301.4 605.3 291.4 605.7 286.2 606.0 286.8 606.4 287.4 606.7 285.9 607.1 287.2 607.4 291.1 607.8 287.8 608.2 297.5 608.5 294.4 608.9 291.6 609.2 285.9 609.6 286.1 609.9 285.8 610.3 292.8 610.6 293.5 611.0 295.3 611.3 292.8 611.7 286.9 612.1 286.1 612.4 285.7 612.8 287.4 613.1 293.5 613.5 286.3 613.8 284.9 614.2 287.8 614.5 280.0 614.9 287.9 615.2 294.9 615.6 287.1 616.0 286.8 616.3 293.4 616.7 285.1 617.0 297.8 617.4 289.2 617.7 298.3 618.1 293.5 618.4 290.9 618.8 294.6 619.1 296.1 619.5 305.8 619.9 305.4 620.2 299.1 620.6 304.3 620.9 297.2 621.3 296.9 621.6 295.7 622.0 301.2 622.3 300.3 622.7 299.5 623.1 308.0 623.4 305.9 623.8 307.5 624.1 305.4 624.5 312.7 624.8 300.3 625.2 304.3 625.5 297.8 625.9 294.8 626.2 298.2 626.6 296.5 627.0 305.0 627.3 307.8 627.7 299.3 628.0 299.5 628.4 293.9 628.7 294.4 629.1 295.6 629.4 296.6 629.8 296.4 630.1 293.3 630.5 301.6 630.9 299.5 631.2 293.2 631.6 295.4 631.9 292.7 632.3 299.3 632.6 302.4 633.0 293.9 633.3 301.1 633.7 305.9 634.0 301.7 634.4 307.3 634.8 307.0 635.1 313.8 635.5 310.3 635.8 307.9 636.2 306.3 636.5 310.4 636.9 298.8 637.2 302.7 637.6 300.7 637.9 299.3 638.3 302.5 638.7 297.4 639.0 300.4 639.4 300.7 639.7 311.2 640.1 312.4 640.4 306.3 640.8 305.4 641.1 305.0 641.5 305.1 641.8 302.1 642.2 309.7 642.6 308.4 642.9 308.4 643.3 312.0 643.6 310.7 644.0 306.6 644.3 304.7 644.7 302.7 645.0 306.9 645.4 300.3 645.8 302.4 646.1 310.4 646.5 308.8 646.8 306.6 647.2 302.3 647.5 301.6 647.9 297.1 648.2 302.5 648.6 305.6 648.9 312.3 649.3 307.3 649.7 310.1 650.0 310.3 650.4 308.6 650.7 309.7 651.1 305.6 651.4 308.4 651.8 312.4 652.1 307.3 652.5 312.5 652.8 314.2 653.2 314.3 653.6 318.9 653.9 316.2 654.3 317.1 654.6 319.6 655.0 321.7 655.3 316.4 655.7 316.2 656.0 320.2 656.4 318.7 656.7 316.1 657.1 314.9 657.5 315.6 657.8 314.6 658.2 312.5 658.5 314.3 658.9 316.8 659.2 319.7 659.6 315.2 659.9 312.6 660.3 312.5 660.6 315.5 661.0 314.9 661.4 312.8 661.7 313.4 662.1 313.3 662.4 322.7 662.8 317.6 663.1 324.5 663.5 326.5 663.8 328.2 664.2 315.6 664.5 315.9 664.9 318.3 665.3 317.3 665.6 314.3 666.0 307.5 666.3 314.4 666.7 310.9 667.0 317.5 667.4 319.9 667.7 328.6 668.1 323.9 668.4 326.4 668.8 320.4 669.2 319.4 669.5 314.6 669.9 322.2 670.2 318.0 670.6 316.8 670.9 319.6 671.3 322.6 671.6 321.8 672.0 320.9 672.4 327.9 672.7 317.8 673.1 313.5 673.4 313.9 673.8 313.6 674.1 319.4 674.5 319.7 674.8 319.7 675.2 326.1 675.5 324.4 675.9 330.4 676.3 325.5 676.6 325.0 677.0 319.3 677.3 315.4 677.7 319.2 678.0 318.6 678.4 319.2 678.7 328.0 679.1 321.5 679.4 315.8 679.8 320.7 680.2 329.8 680.5 323.0 680.9 322.6 681.2 323.8 681.6 331.2 681.9 325.8 682.3 325.9 682.6 330.3 683.0 330.7 683.3 327.0 683.7 326.7 684.1 322.7 684.4 325.7 684.8 320.1 685.1 327.0 685.5 337.9 685.8 328.7 686.2 327.9 686.5 328.0 686.9 324.1 687.2 333.3 687.6 335.1 688.0 336.8 688.3 337.6 688.7 336.4 689.0 336.1 689.4 334.7 689.7 334.7 690.1 333.0 690.4 331.8 690.8 324.5 691.1 336.1 691.5 327.2 691.9 327.1 692.2 326.5 692.6 336.3 692.9 329.9 693.3 328.3 693.6 324.0 694.0 325.4 694.3 323.0 694.7 321.3 695.0 322.0 695.4 323.0 695.8 322.3 696.1 326.7 696.5 326.6 696.8 335.2 697.2 333.1 697.5 332.4 697.9 336.4 698.2 332.9 698.6 326.5 699.0 327.5 699.3 321.1 699.7 327.1 700.0 327.4 700.4 332.7 700.7 323.6 701.1 326.5 701.4 330.6 701.8 328.8 702.1 327.6 702.5 333.1 702.9 332.6 703.2 328.4 703.6 329.2 703.9 335.5 704.3 330.7 704.6 336.9 705.0 329.3 705.3 333.3 705.7 333.3 706.0 335.1 706.4 335.1 706.8 331.8 707.1 331.0 707.5 325.8 707.8 327.0 708.2 329.3 708.5 330.3 708.9 326.6 709.2 335.8 709.6 332.2 709.9 346.7 710.3 342.1 710.7 337.1 711.0 334.0 711.4 334.3 711.7 332.2 712.1 335.5 712.4 332.5 712.8 336.1 713.1 338.1 713.5 338.7 713.8 336.2 714.2 335.8 714.6 336.5 714.9 329.4 715.3 329.2 715.6 336.2 716.0 332.3 716.3 340.9 716.7 333.9 717.0 336.6 717.4 331.5 717.7 341.2 718.1 333.7 718.5 333.6 718.8 333.4 719.2 338.8 719.5 339.6 719.9 335.8 720.2 340.2 720.6 335.6 720.9 335.3 721.3 330.3 721.7 335.8 722.0 335.4 722.4 338.7 722.7 337.9 723.1 341.3 723.4 335.3 723.8 343.5 724.1 335.7 724.5 334.9 724.8 334.7 725.2 330.5 725.6 330.3 725.9 336.1 726.3 337.1 726.6 336.8 727.0 335.6 727.3 333.9 727.7 331.4 728.0 331.9 728.4 329.4 728.7 329.8 729.1 329.6 729.5 334.1 729.8 333.4 730.2 331.2 730.5 333.6 730.9 335.0 731.2 336.5 731.6 338.5 731.9 331.3 732.3 327.8 732.6 334.0 733.0 334.0 733.4 329.4 733.7 328.4 734.1 335.1 734.4 333.2 734.8 338.6 735.1 342.4 735.5 335.4 735.8 341.8 736.2 343.2 736.5 339.4 736.9 348.7 737.3 344.4 737.6 343.9 738.0 338.4 738.3 336.4 738.7 336.2 739.0 342.7 739.4 345.3 739.7 347.8 740.1 339.3 740.4 342.2 740.8 340.4 741.2 340.3 741.5 345.2 741.9 347.9 742.2 338.1 742.6 339.6 742.9 336.2 743.3 336.3 743.6 333.0 744.0 340.5 744.3 333.2 744.7 336.6 745.1 332.9 745.4 333.1 745.8 333.5 746.1 332.4 746.5 339.1 746.8 332.2 747.2 345.8 747.5 343.1 747.9 344.3 748.3 340.7 748.6 343.7 749.0 340.3 749.3 341.4 749.7 333.8 750.0 342.7 750.4 336.9 750.7 339.9 751.1 343.5 751.4 342.0 751.8 343.2 752.2 345.7 752.5 346.4 752.9 337.3 753.2 339.6 753.6 342.2 753.9 347.7 754.3 339.6 754.6 341.1 755.0 345.8 755.3 343.5 755.7 341.5 756.1 341.4 756.4 340.8 756.8 343.3 757.1 339.7 757.5 338.1 757.8 335.6 758.2 339.3 758.5 340.3 758.9 342.5 759.2 346.4 759.6 345.3 760.0 343.9 760.3 340.6 760.7 347.2 761.0 342.3 761.4 335.8 761.7 346.8 762.1 349.3 762.4 350.4 762.8 351.0 763.1 344.4 763.5 351.5 763.9 342.4 764.2 346.7 764.6 343.8 764.9 348.8 765.3 352.9 765.6 347.7 766.0 350.4 766.3 342.8 766.7 345.6 767.0 338.3 767.4 343.9 767.8 341.6 768.1 345.3 768.5 345.5 768.8 346.2 769.2 349.0 769.5 350.3 769.9 352.2 770.2 349.9 770.6 357.8 771.0 357.5 771.3 353.3 771.7 350.9 772.0 349.8 772.4 342.5 772.7 337.6 773.1 338.2 773.4 346.9 773.8 330.8 774.1 337.9 774.5 336.3 774.9 342.8 775.2 345.9 775.6 339.5 775.9 343.6 776.3 340.1 776.6 343.3 777.0 344.4 777.3 342.7 777.7 342.3 778.0 346.1 778.4 352.9 778.8 348.6 779.1 348.5 779.5 347.0 779.8 346.6 780.2 347.2 780.5 339.0 780.9 343.5 781.2 338.5 781.6 340.5 781.9 339.5 782.3 345.0 782.7 350.8 783.0 342.5" stroke="#EE6FD0"/>
 </g>
 <rect x="57.5" y="79.5" width="725" height="360" fill="none" stroke="#dcdcdc" stroke-width="1" shape-rendering="crispEdges"/>
 <path d="M65.5 439.5v-7M65.5 79.5v6M89.5 439.5v-4M89.5 79.5v3M113.5 439.5v-4M113.5 79.5v3M136.5 439.5v-4M136.5 79.5v3M160.5 439.5v-4M160.5 79.5v3M183.5 439.5v-7M183.5 79.5v6M207.5 439.5v-4M207.5 79.5v3M231.5 439.5v-4M231.5 79.5v3M254.5 439.5v-4M254.5 79.5v3M278.5 439.5v-4M278.5 79.5v3M301.5 439.5v-7M301.5 79.5v6M325.5 439.5v-4M325.5 79.5v3M349.5 439.5v-4M349.5 79.5v3M372.5 439.5v-4M372.5 79.5v3M396.5 439.5v-4M396.5 79.5v3M420.5 439.5v-7M420.5 79.5v6M443.5 439.5v-4M443.5 79.5v3M467.5 439.5v-4M467.5 79.5v3M490.5 439.5v-4M490.5 79.5v3M514.5 439.5v-4M514.5 79.5v3M538.5 439.5v-7M538.5 79.5v6M561.5 439.5v-4M561.5 79.5v3M585.5 439.5v-4M585.5 79.5v3M608.5 439.5v-4M608.5 79.5v3M632.5 439.5v-4M632.5 79.5v3M656.5 439.5v-7M656.5 79.5v6M679.5 439.5v-4M679.5 79.5v3M703.5 439.5v-4M703.5 79.5v3M726.5 439.5v-4M726.5 79.5v3M750.5 439.5v-4M750.5 79.5v3M774.5 439.5v-7M774.5 79.5v6M57.5 85.5h3M782.5 85.5h-4M57.5 106.5h6M782.5 106.5h-7M57.5 127.5h3M782.5 127.5h-4M57.5 148.5h6M782.5 148.5h-7M57.5 168.5h3M782.5 168.5h-4M57.5 189.5h6M782.5 189.5h-7M57.5 210.5h3M782.5 210.5h-4M57.5 231.5h6M782.5 231.5h-7M57.5 252.5h3M782.5 252.5h-4M57.5 273.5h6M782.5 273.5h-7M57.5 294.5h3M782.5 294.5h-4M57.5 314.5h6M782.5 314.5h-7M57.5 335.5h3M782.5 335.5h-4M57.5 356.5h6M782.5 356.5h-7M57.5 377.5h3M782.5 377.5h-4M57.5 398.5h6M782.5 398.5h-7M57.5 419.5h3M782.5 419.5h-4" stroke="#dcdcdc" stroke-width="1" fill="none" shape-rendering="crispEdges"/>
 <path d="M749 16L756 5H792V27H756Z" fill="#6A8CAA"/>
 <circle cx="773.5" cy="15.5" r="7" fill="#fff" stroke="#3a8ee0" stroke-width="0.8"/>
 <text x="0" y="0" transform="translate(773.7 19.9) scale(0.85 1)" text-anchor="middle" font-family="Liberation Sans" font-size="12.5" stroke="#111" stroke-width="0.35" fill="#111">?</text>
</svg>
<div class="abs" style="left:0;top:0;width:802px;height:505px;will-change:transform">
 <div class="li" style="left:7px;top:41px;background:#EFD24A"></div><div class="lt" style="left:39px;top:34px">OriginalPA</div>
 <div class="li" style="left:106px;top:41px;background:#2A8DDE"></div><div class="lt" style="left:138px;top:34px">MemoryPolynomialPA</div>
 <div class="li" style="left:260px;top:41px;background:#F07A2A"></div><div class="lt" style="left:292.5px;top:34px">CrosstermMemoryPolynomialPA</div>
 <div class="li" style="left:465px;top:41px;background:#4CC83A"></div><div class="lt" style="left:497.5px;top:34px">ARVTDNNPA</div>
 <div class="li" style="left:579.5px;top:41px;background:#B85CE8"></div><div class="lt" style="left:611px;top:34px">LSTMNNPA</div>
 <div class="li" style="left:686px;top:41px;background:#58D2E8"></div><div class="lt" style="left:718px;top:34px">BiLSTMNNPA</div>
 <div class="li" style="left:12px;top:58px;background:#EE6FD0"></div><div class="lt" style="left:44px;top:51px">GRUNNPA</div>
 <div class="abs" style="left:2px;top:69px;width:800px;height:1px;background:#d4d4d4"></div>
 <div class="xl" style="left:35.5px">-300</div><div class="xl" style="left:153.5px">-200</div><div class="xl" style="left:271.5px">-100</div><div class="xl" style="left:390.5px">0</div><div class="xl" style="left:508.5px">100</div><div class="xl" style="left:626.5px">200</div><div class="xl" style="left:744.5px">300</div><div class="yl" style="top:99.0px">-50</div><div class="yl" style="top:141.0px">-60</div><div class="yl" style="top:182.0px">-70</div><div class="yl" style="top:224.0px">-80</div><div class="yl" style="top:266.0px">-90</div><div class="yl" style="top:307.0px">-100</div><div class="yl" style="top:349.0px">-110</div><div class="yl" style="top:391.0px">-120</div>
 <div class="abs" style="left:370px;top:456px;width:100px;text-align:center;color:#d0d0d0;font-size:13px;line-height:15px;white-space:pre">Frequency (MHz)</div>
 <div class="abs" style="left:-4px;top:251.5px;width:40px;text-align:center;color:#d0d0d0;font-size:13px;line-height:15px;transform:rotate(-90deg)">dBm</div>
 <div class="abs" style="left:2px;top:479px;width:800px;height:23px;background:#e4e4e4;overflow:hidden">
  <div class="st" style="left:7.5px">Processing</div>
  <div class="st" style="left:96.8px;letter-spacing:-0.035px">ΔT=1.6667 us  Samples/Update=1024  VBW=10.6103 kHz  RBW=600.0000 kHz  Sample Rate=614.4000 MHz  Updates=128  T=0.0083</div>
 </div>
</div>
</body></html>
